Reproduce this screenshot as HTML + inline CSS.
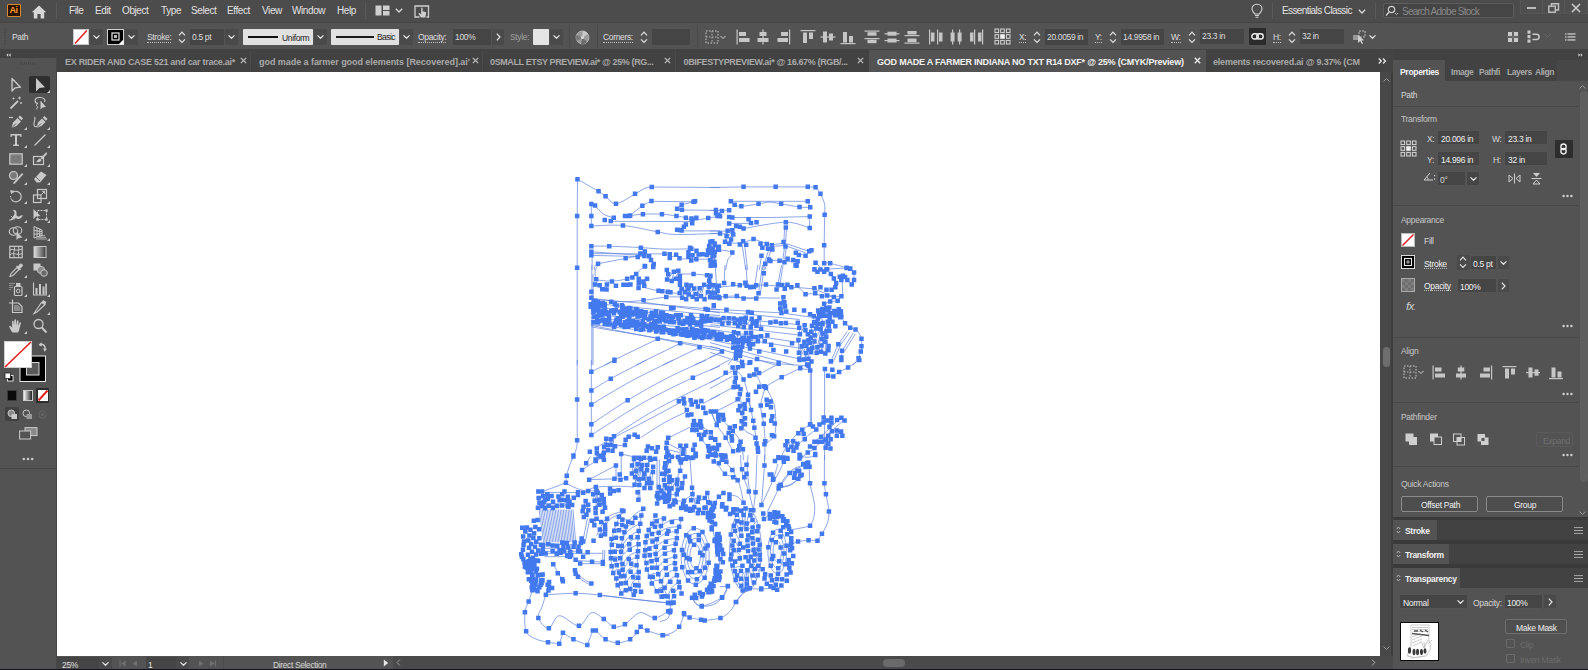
<!DOCTYPE html>
<html><head><meta charset="utf-8"><title>Illustrator</title>
<style>
*{box-sizing:border-box;margin:0;padding:0}
html,body{width:1588px;height:670px;overflow:hidden;background:#535353;font-family:"Liberation Sans",sans-serif;font-size:11px;color:#dcdcdc}
.a{position:absolute}
.t{position:absolute;white-space:nowrap;line-height:1}
#menubar{left:0;top:0;width:1588px;height:23px;background:#4c4c4c;border-bottom:1px solid #444}
#menubar .t{top:6px;font-size:10px;color:#e2e2e2;letter-spacing:-0.4px}
#ctrl{left:0;top:23px;width:1588px;height:27px;background:#535353;border-bottom:1px solid #434343}
#ctrl .t{top:10px;font-size:8.5px;color:#dedede;letter-spacing:-0.35px}
.dd{position:absolute;background:#4a4a4a;border-radius:1px}
.fld{position:absolute;background:#454545;border-radius:1px}
.lbl{border-bottom:1px dotted #bdbdbd;padding-bottom:0px}
.chev{position:absolute;width:7px;height:4px}
#tabbar{left:57px;top:50px;width:1336px;height:22px;background:#424242}
#tabbar .t{top:8px;font-size:9px;font-weight:bold;color:#a9a9a9;letter-spacing:-0.3px}
#canvas{left:57px;top:72px;width:1322.5px;height:584px;background:#ffffff}
#tools{left:0;top:50px;width:57px;height:620px;background:#535353}
#status{left:57px;top:656px;width:1336px;height:12px;background:#535353}
#right{left:1393px;top:50px;width:195px;height:620px;background:#535353}
#vscroll{left:1380px;top:72px;width:13px;height:584px;background:#484848;border-right:2px solid #3e3e3e}
</style></head><body>
<!-- MENU BAR -->
<div id="menubar" class="a">
 <div class="a" style="left:7px;top:4px;width:14px;height:13px;background:#2a1505;border:1px solid #d98a2b;border-radius:1px"></div>
 <div class="t" style="left:9.5px;top:6px;font-size:9px;font-weight:bold;color:#ff9a2a;letter-spacing:-0.4px">Ai</div>
 <svg class="a" style="left:31px;top:5px" width="16" height="14" viewBox="0 0 16 14"><path d="M8 0.5 L0.8 7.2 L2.8 7.2 L2.8 13.5 L6.4 13.5 L6.4 9 L9.6 9 L9.6 13.5 L13.2 13.5 L13.2 7.2 L15.2 7.2 Z" fill="#d6d6d6"/></svg>
 <div class="a" style="left:56px;top:3px;width:1px;height:16px;background:#5a5a5a"></div>
 <div class="t" style="left:69px">File</div>
 <div class="t" style="left:95px">Edit</div>
 <div class="t" style="left:122px">Object</div>
 <div class="t" style="left:161px">Type</div>
 <div class="t" style="left:191px">Select</div>
 <div class="t" style="left:227px">Effect</div>
 <div class="t" style="left:262px">View</div>
 <div class="t" style="left:292px">Window</div>
 <div class="t" style="left:337px">Help</div>
 <div class="a" style="left:365px;top:3px;width:1px;height:16px;background:#5a5a5a"></div>
 <!-- workspace switcher icon -->
 <svg class="a" style="left:375px;top:5px" width="16" height="12" viewBox="0 0 16 12"><rect x="0.5" y="0.5" width="6" height="10" fill="#cfcfcf"/><rect x="8" y="0.5" width="6.5" height="4.5" fill="#cfcfcf"/><rect x="8" y="6" width="6.5" height="4.5" fill="#cfcfcf"/></svg>
 <svg class="a" style="left:395px;top:8px" width="8" height="5" viewBox="0 0 8 5"><path d="M0.8 0.8 L4 4 L7.2 0.8" fill="none" stroke="#d8d8d8" stroke-width="1.3"/></svg>
 <svg class="a" style="left:414px;top:5px" width="16" height="14" viewBox="0 0 16 14"><path d="M5.5 12 L1 12 L1 1 L14.5 1 L14.5 12 L12.5 12" fill="none" stroke="#cfcfcf" stroke-width="1.3"/><path d="M7.2 3.2 C7.2 2.2 8.6 2.2 8.6 3.2 L8.6 6.2 L11.3 7 C12 7.2 12.3 7.8 12.1 8.6 L11.3 12.6 L7 12.6 L4.6 9 C4.2 8.3 5.2 7.6 5.8 8.3 L7.2 9.6 Z" fill="#cfcfcf"/></svg>
 <!-- right side -->
 <svg class="a" style="left:1250px;top:3px" width="14" height="17" viewBox="0 0 14 17"><path d="M7 1.2 C3.8 1.2 2 3.4 2 5.8 C2 8 3.6 9 4.6 11 L9.4 11 C10.4 9 12 8 12 5.8 C12 3.4 10.2 1.2 7 1.2 Z" fill="none" stroke="#d0d0d0" stroke-width="1.1"/><path d="M5 12.5 L9 12.5 M5.5 14.2 L8.5 14.2" stroke="#d0d0d0" stroke-width="1.1"/></svg>
 <div class="a" style="left:1272px;top:3px;width:1px;height:16px;background:#5a5a5a"></div>
 <div class="t" style="left:1282px;top:6px;font-size:10px;letter-spacing:-0.6px">Essentials Classic</div>
 <svg class="a" style="left:1358px;top:9px" width="8" height="5" viewBox="0 0 8 5"><path d="M0.8 0.8 L4 4 L7.2 0.8" fill="none" stroke="#d8d8d8" stroke-width="1.3"/></svg>
 <div class="a" style="left:1375px;top:3px;width:1px;height:16px;background:#5a5a5a"></div>
 <div class="a" style="left:1383px;top:3px;width:131px;height:15px;background:#454545;border:1px solid #5c5c5c;border-radius:2px"></div>
 <svg class="a" style="left:1385px;top:5px" width="14" height="12" viewBox="0 0 14 12"><circle cx="6.5" cy="4.5" r="3.2" fill="none" stroke="#cfcfcf" stroke-width="1.2"/><path d="M4.2 7 L1 10.5" stroke="#cfcfcf" stroke-width="1.4"/><path d="M10 8 L11.5 9.5 L13 8" fill="none" stroke="#cfcfcf" stroke-width="0.9"/></svg>
 <div class="t" style="left:1402px;top:7px;font-size:10px;letter-spacing:-0.76px;color:#8a8a8a">Search Adobe Stock</div>
 <div class="a" style="left:1520px;top:0;width:68px;height:14px;background:#4f4f4f;border:1px solid #565656;border-top:none"></div>
 <div class="a" style="left:1542px;top:0;width:1px;height:14px;background:#565656"></div><div class="a" style="left:1564px;top:0;width:1px;height:14px;background:#565656"></div>
 <div class="a" style="left:1527px;top:7px;width:9px;height:2.4px;background:#bcbcbc"></div>
 <svg class="a" style="left:1548px;top:3px" width="12" height="11" viewBox="0 0 12 11"><rect x="0.8" y="3.2" width="6.5" height="6" fill="none" stroke="#c4c4c4" stroke-width="1.4"/><path d="M3.5 3 L3.5 0.8 L10.5 0.8 L10.5 7 L7.5 7" fill="none" stroke="#c4c4c4" stroke-width="1.4"/></svg>
 <svg class="a" style="left:1571px;top:3px" width="10" height="10" viewBox="0 0 10 10"><path d="M1 1 L9 9 M9 1 L1 9" stroke="#c8c8c8" stroke-width="1.7"/></svg>
</div>
<!-- CONTROL BAR -->
<div id="ctrl" class="a">
 <div class="a" style="left:4px;top:5px;width:2px;height:17px;background-image:repeating-linear-gradient(#474747 0 1px,transparent 1px 2px)"></div>
 <div class="t" style="left:12px">Path</div>
 <!-- fill swatch -->
 <svg class="a" style="left:73px;top:6px" width="16" height="16" viewBox="0 0 16 16"><rect x="0.5" y="0.5" width="15" height="15" fill="#fff" stroke="#c8c8c8" stroke-width="1"/><path d="M2 14.5 L13.8 1.5" stroke="#e02020" stroke-width="1.5"/></svg>
 <div class="dd" style="left:90px;top:6px;width:13px;height:16px"></div>
 <svg class="chev" style="left:93px;top:12px" viewBox="0 0 7 4"><path d="M0.5 0.4 L3.5 3.3 L6.5 0.4" fill="none" stroke="#e6e6e6" stroke-width="1.2"/></svg>
 <!-- stroke swatch -->
 <svg class="a" style="left:107px;top:6px" width="17" height="16" viewBox="0 0 17 16"><rect x="0.5" y="0.5" width="16" height="15" fill="#000" stroke="#cfcfcf" stroke-width="1"/><rect x="5" y="4" width="7" height="7" fill="none" stroke="#e8e8e8" stroke-width="1.2"/><rect x="7" y="6" width="3" height="3" fill="#bdbdbd"/><path d="M11.5 15.5 L16.5 10.5 L16.5 15.5 Z" fill="#fff"/></svg>
 <div class="dd" style="left:125px;top:6px;width:13px;height:16px"></div>
 <svg class="chev" style="left:128px;top:12px" viewBox="0 0 7 4"><path d="M0.5 0.4 L3.5 3.3 L6.5 0.4" fill="none" stroke="#e6e6e6" stroke-width="1.2"/></svg>
 <div class="t lbl" style="left:147px">Stroke:</div>
 <svg class="a" style="left:178px;top:5px" width="8" height="18" viewBox="0 0 8 18"><path d="M1 7.3 L4 4.2 L7 7.3 M1 11.3 L4 14.4 L7 11.3" fill="none" stroke="#e0e0e0" stroke-width="1.2"/></svg>
 <div class="fld" style="left:190px;top:6px;width:34px;height:16px"></div>
 <div class="t" style="left:192px">0.5 pt</div>
 <div class="dd" style="left:225px;top:6px;width:13px;height:16px"></div>
 <svg class="chev" style="left:228px;top:12px" viewBox="0 0 7 4"><path d="M0.5 0.4 L3.5 3.3 L6.5 0.4" fill="none" stroke="#e6e6e6" stroke-width="1.2"/></svg>
 <!-- Uniform -->
 <div class="a" style="left:243px;top:6px;width:70px;height:16px;background:#e1e1e1;border-radius:1px"></div>
 <div class="a" style="left:248px;top:13px;width:30px;height:2px;background:#111"></div>
 <div class="t" style="left:282px;top:11px;color:#222">Uniform</div>
 <div class="dd" style="left:314px;top:6px;width:13px;height:16px"></div>
 <svg class="chev" style="left:317px;top:12px" viewBox="0 0 7 4"><path d="M0.5 0.4 L3.5 3.3 L6.5 0.4" fill="none" stroke="#e6e6e6" stroke-width="1.2"/></svg>
 <!-- Basic -->
 <div class="a" style="left:331px;top:6px;width:68px;height:16px;background:#e1e1e1;border-radius:1px"></div>
 <div class="a" style="left:336px;top:13px;width:38px;height:2px;background:#1c1c1c"></div>
 <div class="t" style="left:377px;top:10px;color:#222;letter-spacing:-0.55px">Basic</div>
 <div class="dd" style="left:400px;top:6px;width:13px;height:16px"></div>
 <svg class="chev" style="left:403px;top:12px" viewBox="0 0 7 4"><path d="M0.5 0.4 L3.5 3.3 L6.5 0.4" fill="none" stroke="#e6e6e6" stroke-width="1.2"/></svg>
 <div class="t lbl" style="left:418px">Opacity:</div>
 <div class="fld" style="left:453px;top:6px;width:38px;height:16px"></div>
 <div class="t" style="left:455px">100%</div>
 <div class="dd" style="left:492px;top:6px;width:12px;height:16px"></div>
 <svg class="a" style="left:496px;top:10px" width="5" height="8" viewBox="0 0 5 8"><path d="M0.8 0.7 L4 4 L0.8 7.3" fill="none" stroke="#e6e6e6" stroke-width="1.2"/></svg>
 <div class="t" style="left:510px;color:#a0a0a0">Style:</div>
 <div class="a" style="left:533px;top:6px;width:16px;height:16px;background:#e4e4e4;border-radius:1px"></div>
 <div class="dd" style="left:550px;top:6px;width:13px;height:16px"></div>
 <svg class="chev" style="left:553px;top:12px" viewBox="0 0 7 4"><path d="M0.5 0.4 L3.5 3.3 L6.5 0.4" fill="none" stroke="#e6e6e6" stroke-width="1.2"/></svg>
 <div class="a" style="left:569px;top:2px;width:1px;height:23px;background:#494949"></div>
 <!-- recolor globe -->
 <svg class="a" style="left:575px;top:7px" width="15" height="15" viewBox="0 0 15 15"><circle cx="7.5" cy="7.5" r="6.5" fill="#9a9a9a"/><circle cx="7.5" cy="7.5" r="6.5" fill="none" stroke="#bdbdbd" stroke-width="0.8"/><path d="M7.5 7.5 L7.5 1 A6.5 6.5 0 0 1 13 4 Z" fill="#c9c9c9"/><path d="M7.5 7.5 L2 11 A6.5 6.5 0 0 1 1.5 5 Z" fill="#777"/><path d="M7.5 7.5 L12 12 A6.5 6.5 0 0 1 6 14 Z" fill="#6b6b6b"/><circle cx="7.5" cy="7.5" r="1.6" fill="#d8d8d8"/></svg>
 <div class="a" style="left:597px;top:2px;width:1px;height:23px;background:#494949"></div>
 <div class="t lbl" style="left:603px">Corners:</div>
 <svg class="a" style="left:640px;top:5px" width="8" height="18" viewBox="0 0 8 18"><path d="M1 7.3 L4 4.2 L7 7.3 M1 11.3 L4 14.4 L7 11.3" fill="none" stroke="#e0e0e0" stroke-width="1.2"/></svg>
 <div class="fld" style="left:652px;top:6px;width:38px;height:16px"></div>
 <div class="a" style="left:697px;top:2px;width:1px;height:23px;background:#494949"></div>
 <!-- align-to grid icon -->
 <svg class="a" style="left:705px;top:7px" width="22" height="15" viewBox="0 0 22 15"><rect x="1" y="1" width="12" height="12" fill="none" stroke="#cfcfcf" stroke-width="1" stroke-dasharray="1.5 1.5"/><path d="M1 7 L13 7 M7 1 L7 13" stroke="#b5b5b5" stroke-width="1" stroke-dasharray="1.5 1.5"/><path d="M15.5 6 L18 8.5 L20.5 6" fill="none" stroke="#d0d0d0" stroke-width="1"/></svg>
 <!-- align icons group 1 -->
 <svg class="a" style="left:736px;top:6px" width="250" height="16" viewBox="0 0 250 16">
  <g fill="#c6c6c6" stroke="none">
   <!-- align left 0..13 -->
   <rect x="0.5" y="0.5" width="1.2" height="15"/><rect x="3" y="3" width="7" height="4"/><rect x="3" y="9" width="10.5" height="4"/>
   <!-- align hcenter 21..32 -->
   <rect x="26.4" y="0.5" width="1.2" height="15"/><rect x="23.5" y="3" width="7" height="4"/><rect x="21.5" y="9" width="11" height="4"/>
   <!-- align right 41..54 -->
   <rect x="53" y="0.5" width="1.2" height="15"/><rect x="45" y="3" width="7" height="4"/><rect x="41.5" y="9" width="10.5" height="4"/>
   <!-- align top 65..79 -->
   <rect x="64.5" y="1" width="15" height="1.2"/><rect x="67" y="3.5" width="4" height="10.5"/><rect x="73" y="3.5" width="4" height="6.5"/>
   <!-- align vcenter 85..99 -->
   <rect x="84.5" y="7.4" width="15" height="1.2"/><rect x="87" y="2.5" width="4" height="11"/><rect x="93" y="4.5" width="4" height="7"/>
   <!-- align bottom 105..119 -->
   <rect x="104.5" y="14" width="15" height="1.2"/><rect x="107" y="3" width="4" height="10.5"/><rect x="113" y="7" width="4" height="6.5"/>
   <!-- dist top 129..143 -->
   <rect x="128.5" y="1.5" width="15" height="1.2"/><rect x="131.5" y="3.2" width="9" height="3.5"/><rect x="128.5" y="9" width="15" height="1.2"/><rect x="131.5" y="10.7" width="9" height="3.5"/>
   <!-- dist vcenter 149..163 -->
   <rect x="148.5" y="4.2" width="15" height="1.2"/><rect x="151.5" y="2.7" width="9" height="4"/><rect x="148.5" y="11" width="15" height="1.2"/><rect x="151.5" y="9.5" width="9" height="4"/>
   <!-- dist bottom 169..183 -->
   <rect x="168.5" y="6" width="15" height="1.2"/><rect x="171.5" y="2" width="9" height="3.5"/><rect x="168.5" y="13.5" width="15" height="1.2"/><rect x="171.5" y="9.5" width="9" height="3.5"/>
   <!-- dist left 193..207 -->
   <rect x="193" y="0.5" width="1.2" height="15"/><rect x="195" y="3.5" width="3.5" height="9"/><rect x="201" y="0.5" width="1.2" height="15"/><rect x="203" y="3.5" width="3.5" height="9"/>
   <!-- dist hcenter 213..227 -->
   <rect x="216" y="0.5" width="1.2" height="15"/><rect x="214.6" y="3.5" width="4" height="9"/><rect x="223" y="0.5" width="1.2" height="15"/><rect x="221.6" y="3.5" width="4" height="9"/>
   <!-- dist right 233..247 -->
   <rect x="238" y="0.5" width="1.2" height="15"/><rect x="234" y="3.5" width="3.5" height="9"/><rect x="246" y="0.5" width="1.2" height="15"/><rect x="242" y="3.5" width="3.5" height="9"/>
  </g>
 </svg>
 <!-- reference point -->
 <svg class="a" style="left:994px;top:5px" width="17" height="17" viewBox="0 0 17 17"><g fill="none" stroke="#d6d6d6" stroke-width="1"><rect x="1" y="1" width="3.6" height="3.6"/><rect x="6.7" y="1" width="3.6" height="3.6"/><rect x="12.4" y="1" width="3.6" height="3.6"/><rect x="1" y="6.7" width="3.6" height="3.6"/><rect x="12.4" y="6.7" width="3.6" height="3.6"/><rect x="1" y="12.4" width="3.6" height="3.6"/><rect x="6.7" y="12.4" width="3.6" height="3.6"/><rect x="12.4" y="12.4" width="3.6" height="3.6"/></g><rect x="6.2" y="6.2" width="4.6" height="4.6" fill="#f0f0f0"/></svg>
 <div class="t lbl" style="left:1019px">X:</div>
 <svg class="a" style="left:1033px;top:5px" width="8" height="18" viewBox="0 0 8 18"><path d="M1 7.3 L4 4.2 L7 7.3 M1 11.3 L4 14.4 L7 11.3" fill="none" stroke="#e0e0e0" stroke-width="1.2"/></svg>
 <div class="fld" style="left:1045px;top:6px;width:43px;height:16px"></div>
 <div class="t" style="left:1047px">20.0059 in</div>
 <div class="t lbl" style="left:1095px">Y:</div>
 <svg class="a" style="left:1109px;top:5px" width="8" height="18" viewBox="0 0 8 18"><path d="M1 7.3 L4 4.2 L7 7.3 M1 11.3 L4 14.4 L7 11.3" fill="none" stroke="#e0e0e0" stroke-width="1.2"/></svg>
 <div class="fld" style="left:1121px;top:6px;width:43px;height:16px"></div>
 <div class="t" style="left:1123px">14.9958 in</div>
 <div class="t lbl" style="left:1171px">W:</div>
 <svg class="a" style="left:1188px;top:5px" width="8" height="18" viewBox="0 0 8 18"><path d="M1 7.3 L4 4.2 L7 7.3 M1 11.3 L4 14.4 L7 11.3" fill="none" stroke="#e0e0e0" stroke-width="1.2"/></svg>
 <div class="fld" style="left:1200px;top:6px;width:44px;height:15px"></div>
 <div class="t" style="left:1202px;top:9px">23.3 in</div>
 <!-- link button -->
 <div class="a" style="left:1249px;top:5px;width:17px;height:17px;background:#2b2b2b;border-radius:1px"></div>
 <svg class="a" style="left:1251px;top:10px" width="13" height="7" viewBox="0 0 13 7"><rect x="0.8" y="0.8" width="6.5" height="5.2" rx="2.6" fill="none" stroke="#f0f0f0" stroke-width="1.4"/><rect x="5.7" y="0.8" width="6.5" height="5.2" rx="2.6" fill="none" stroke="#f0f0f0" stroke-width="1.4"/></svg>
 <div class="t lbl" style="left:1273px">H:</div>
 <svg class="a" style="left:1288px;top:5px" width="8" height="18" viewBox="0 0 8 18"><path d="M1 7.3 L4 4.2 L7 7.3 M1 11.3 L4 14.4 L7 11.3" fill="none" stroke="#e0e0e0" stroke-width="1.2"/></svg>
 <div class="fld" style="left:1300px;top:6px;width:44px;height:15px"></div>
 <div class="t" style="left:1302px;top:9px">32 in</div>
 <!-- isolate / select icon -->
 <svg class="a" style="left:1352px;top:6px" width="15" height="16" viewBox="0 0 15 16"><rect x="1" y="6" width="6" height="5" fill="#9a9a9a"/><rect x="7" y="2" width="6" height="6" fill="none" stroke="#bdbdbd" stroke-width="1" stroke-dasharray="2 1"/><path d="M6 6 L6 14 L8.2 12 L9.8 15 L11 14.4 L9.6 11.6 L12 11.2 Z" fill="#d0d0d0"/></svg>
 <svg class="chev" style="left:1369px;top:12px" viewBox="0 0 7 4"><path d="M0.5 0.4 L3.5 3.3 L6.5 0.4" fill="none" stroke="#e6e6e6" stroke-width="1.2"/></svg>
 <!-- far right icons -->
 <svg class="a" style="left:1507px;top:8px" width="12" height="12" viewBox="0 0 12 12"><g fill="#c9c9c9"><rect x="1" y="1" width="4" height="4"/><rect x="7" y="1" width="4" height="4"/><rect x="1" y="7" width="4" height="4"/><rect x="7" y="7" width="4" height="4"/></g><path d="M6 0 L6 12 M0 6 L12 6" stroke="#8a8a8a" stroke-width="0.6"/></svg>
 <svg class="a" style="left:1527px;top:7px" width="14" height="14" viewBox="0 0 14 14"><rect x="0.5" y="0.5" width="3" height="3.2" fill="#c9c9c9"/><rect x="0.5" y="5" width="3" height="3.2" fill="#c9c9c9"/><rect x="0.5" y="9.5" width="3" height="3.2" fill="#c9c9c9"/><path d="M5.5 4.2 L9.5 4.2 A2.6 2.6 0 0 1 9.5 9.4 L5.5 9.4" fill="none" stroke="#c9c9c9" stroke-width="1.5"/></svg>
 <svg class="chev" style="left:1544px;top:11px" viewBox="0 0 7 4"><path d="M0.5 0.4 L3.5 3.3 L6.5 0.4" fill="none" stroke="#6c6c6c" stroke-width="1"/></svg>
 <svg class="a" style="left:1565px;top:10px" width="11" height="8" viewBox="0 0 11 8"><g fill="#c9c9c9"><rect x="0" y="0.3" width="1.5" height="1.3"/><rect x="2.5" y="0.3" width="8" height="1.3"/><rect x="0" y="3.3" width="1.5" height="1.3"/><rect x="2.5" y="3.3" width="8" height="1.3"/><rect x="0" y="6.3" width="1.5" height="1.3"/><rect x="2.5" y="6.3" width="8" height="1.3"/></g></svg>
</div>
<!-- LEFT DOCK HEADER + TAB BAR -->
<div id="tabbar" class="a">
 <div class="a" style="left:812px;top:0;width:337px;height:22px;background:#535353"></div>
 <div class="a" style="left:193px;top:1px;width:1px;height:20px;background:#4b4b4b"></div>
 <div class="a" style="left:425px;top:1px;width:1px;height:20px;background:#4b4b4b"></div>
 <div class="a" style="left:618px;top:1px;width:1px;height:20px;background:#4b4b4b"></div>
 <div class="a" style="left:1323px;top:0;width:13px;height:22px;background:#444"></div>
 <div class="t tb" id="tb1" style="letter-spacing:-0.29px;left:8px">EX RIDER AND CASE 521 and car trace.ai*</div>
 <div class="t tb" id="tb2" style="letter-spacing:-0.05px;left:202px">god made a farmer good elements [Recovered].ai'</div>
 <div class="t tb" id="tb3" style="letter-spacing:-0.38px;left:433px">0SMALL ETSY PREVIEW.ai* @ 25% (RG...</div>
 <div class="t tb" id="tb4" style="letter-spacing:-0.355px;left:626.5px">0BIFESTYPREVIEW.ai* @ 16.67% (RGB/...</div>
 <div class="t tb" id="tb5" style="letter-spacing:-0.211px;left:820px;color:#f2f2f2">GOD MADE A FARMER INDIANA NO TXT R14 DXF* @ 25% (CMYK/Preview)</div>
 <div class="t tb" id="tb6" style="letter-spacing:-0.2px;left:1156px;width:147px;overflow:hidden">elements recovered.ai @ 9.37% (CMYK</div>
 <svg class="a x" style="left:183px;top:7px" width="7" height="7" viewBox="0 0 7 7"><path d="M0.8 0.8 L6.2 6.2 M6.2 0.8 L0.8 6.2" stroke="#c0c0c0" stroke-width="1.2"/></svg>
 <svg class="a x" style="left:415px;top:7px" width="7" height="7" viewBox="0 0 7 7"><path d="M0.8 0.8 L6.2 6.2 M6.2 0.8 L0.8 6.2" stroke="#c0c0c0" stroke-width="1.2"/></svg>
 <svg class="a x" style="left:607px;top:7px" width="7" height="7" viewBox="0 0 7 7"><path d="M0.8 0.8 L6.2 6.2 M6.2 0.8 L0.8 6.2" stroke="#c0c0c0" stroke-width="1.2"/></svg>
 <svg class="a x" style="left:800px;top:7px" width="7" height="7" viewBox="0 0 7 7"><path d="M0.8 0.8 L6.2 6.2 M6.2 0.8 L0.8 6.2" stroke="#c0c0c0" stroke-width="1.2"/></svg>
 <svg class="a x" style="left:1136.5px;top:7px" width="7" height="7" viewBox="0 0 7 7"><path d="M0.8 0.8 L6.2 6.2 M6.2 0.8 L0.8 6.2" stroke="#f0f0f0" stroke-width="1.3"/></svg>
 <svg class="a" style="left:1321px;top:8px" width="9" height="6" viewBox="0 0 9 6"><path d="M0.8 0.6 L3.2 3 L0.8 5.4 M5 0.6 L7.4 3 L5 5.4" fill="none" stroke="#e0e0e0" stroke-width="1.4"/></svg>
</div>
<!-- CANVAS -->
<div id="canvas" class="a"></div>
<!-- vertical scrollbar -->
<div id="vscroll" class="a">
 <svg class="a" style="left:3px;top:6px" width="7" height="4" viewBox="0 0 7 4"><path d="M0.5 3.5 L3.5 0.6 L6.5 3.5" fill="none" stroke="#9a9a9a" stroke-width="1"/></svg>
 <div class="a" style="left:3px;top:275px;width:7px;height:20px;background:#6e6e6e;border-radius:3.5px"></div>
 <svg class="a" style="left:3px;top:574px" width="7" height="4" viewBox="0 0 7 4"><path d="M0.5 0.5 L3.5 3.4 L6.5 0.5" fill="none" stroke="#9a9a9a" stroke-width="1"/></svg>
</div>
<!-- STATUS BAR -->
<div id="status" class="a" style="height:13px">
 <div class="a" style="left:336px;top:0;width:1000px;height:13px;background:#4a4a4a"></div>
 <div class="a" style="left:0;top:1px;width:42px;height:12px;background:#454545"></div>
 <div class="a" style="left:42px;top:1px;width:13px;height:12px;background:#4a4a4a"></div>
 <div class="a" style="left:89px;top:1px;width:30px;height:12px;background:#454545"></div>
 <div class="a" style="left:119px;top:1px;width:13px;height:12px;background:#4a4a4a"></div>
 <div class="t" style="left:5px;top:5px;font-size:8.5px;letter-spacing:-0.35px;color:#e0e0e0">25%</div>
 <svg class="chev" style="left:45px;top:6px" viewBox="0 0 7 4"><path d="M0.5 0.4 L3.5 3.3 L6.5 0.4" fill="none" stroke="#e6e6e6" stroke-width="1.2"/></svg>
 <svg class="a" style="left:62px;top:4px" width="24" height="7" viewBox="0 0 24 7"><g fill="#707070"><rect x="0.5" y="0.5" width="1.2" height="6"/><path d="M6.5 0.5 L2.2 3.5 L6.5 6.5 Z"/><path d="M18 0.5 L13.7 3.5 L18 6.5 Z"/></g></svg>
 <div class="t" style="left:91px;top:5px;font-size:8.5px;letter-spacing:-0.35px;color:#e0e0e0">1</div>
 <svg class="chev" style="left:123px;top:6px" viewBox="0 0 7 4"><path d="M0.5 0.4 L3.5 3.3 L6.5 0.4" fill="none" stroke="#e6e6e6" stroke-width="1.2"/></svg>
 <svg class="a" style="left:141px;top:4px" width="22" height="7" viewBox="0 0 22 7"><g fill="#707070"><path d="M1 0.5 L5.3 3.5 L1 6.5 Z"/><path d="M12 0.5 L16.3 3.5 L12 6.5 Z"/><rect x="16.8" y="0.5" width="1.2" height="6"/></g></svg>
 <div class="a" style="left:166px;top:0;width:1px;height:13px;background:#4a4a4a"></div>
 <div class="t" style="left:216px;top:5px;font-size:8.5px;letter-spacing:-0.38px;color:#d8d8d8">Direct Selection</div>
 <svg class="a" style="left:326px;top:3px" width="6" height="8" viewBox="0 0 6 8"><path d="M0.8 0.5 L5.2 4 L0.8 7.5 Z" fill="#e6e6e6"/></svg>
 <svg class="a" style="left:339px;top:3px" width="5" height="7" viewBox="0 0 5 7"><path d="M3.8 0.6 L1 3.5 L3.8 6.4" fill="none" stroke="#9a9a9a" stroke-width="1"/></svg>
 <div class="a" style="left:826px;top:3px;width:22px;height:8px;background:#6a6a6a;border-radius:4px"></div>
 <svg class="a" style="left:1314px;top:3px" width="5" height="7" viewBox="0 0 5 7"><path d="M1 0.6 L3.8 3.5 L1 6.4" fill="none" stroke="#b0b0b0" stroke-width="1"/></svg>
</div>
<!-- TOOLS PANEL -->
<div id="tools" class="a">
<div class="a" style="left:0;top:0;width:57px;height:8px;background:#424242"></div>
<svg class="a" style="left:5.5px;top:2.5px" width="5" height="4" viewBox="0 0 5 4"><path d="M2.2 0.3 L0.5 2 L2.2 3.7 Z M4.6 0.3 L2.9 2 L4.6 3.7 Z" fill="#dcdcdc"/></svg>
<div class="a" style="left:56px;top:8px;width:1px;height:612px;background:#474747"></div>
<div class="a" style="left:20px;top:12px;width:15px;height:3px;background-image:repeating-linear-gradient(90deg,#474747 0 1px,transparent 1px 2px)"></div>
<div class="a" style="left:29px;top:26px;width:21px;height:17px;background:#2f2f2f;border-radius:2px"></div>
<svg class="a" style="left:8.3px;top:26.7px" width="16" height="16" viewBox="0 0 16 16"><path d="M4 1.5 L4 14 L7.2 10.8 L12.5 10.2 Z" fill="none" stroke="#c9c9c9" stroke-width="1.3" stroke-linejoin="round"/></svg>
<svg class="a" style="left:31.5px;top:26.7px" width="16" height="16" viewBox="0 0 16 16"><path d="M4 1 L4 14.5 L7.5 11 L13 10.3 Z" fill="#c9c9c9"/></svg>
<svg class="a" style="left:47.0px;top:39.7px" width="3" height="3" viewBox="0 0 3 3"><path d="M3 0 L3 3 L0 3 Z" fill="#c9c9c9"/></svg>
<svg class="a" style="left:8.3px;top:45.2px" width="16" height="16" viewBox="0 0 16 16"><path d="M2.5 13.5 L10 6" stroke="#c9c9c9" stroke-width="1.8"/><path d="M11.5 1.5 L11.5 4.5 M10 3 L13 3 M5.5 2.5 L5.5 4.5 M4.5 3.5 L6.5 3.5 M13 7 L13 9 M12 8 L14 8" stroke="#c9c9c9" stroke-width="0.9"/></svg>
<svg class="a" style="left:31.5px;top:45.2px" width="16" height="16" viewBox="0 0 16 16"><path d="M6 8.5 C2 8 2 3 7 2.5 C12 2 14 5 12.5 7" fill="none" stroke="#c9c9c9" stroke-width="1.1"/><path d="M6 8.5 C4 9 4 11.5 6 12 C4.8 13 4.5 13.5 5 14.5" fill="none" stroke="#c9c9c9" stroke-width="1"/><path d="M8.5 5.5 L8.5 14.5 L10.6 12.4 L14 12 Z" fill="#c9c9c9"/></svg>
<svg class="a" style="left:8.3px;top:63.8px" width="16" height="16" viewBox="0 0 16 16"><path d="M1 3.5 L5 3.5" stroke="#c9c9c9" stroke-width="1.2"/><path d="M3.5 14 L5 8.5 L9.5 4 L13 7.5 L8.5 12 Z" fill="#c9c9c9"/><path d="M10.3 3.2 L12 1.5 L15 4.5 L13.4 6.2 Z" fill="#c9c9c9"/><path d="M3.5 14 L8 9.5" stroke="#535353" stroke-width="0.9"/></svg>
<svg class="a" style="left:23.8px;top:76.8px" width="3" height="3" viewBox="0 0 3 3"><path d="M3 0 L3 3 L0 3 Z" fill="#c9c9c9"/></svg>
<svg class="a" style="left:31.5px;top:63.8px" width="16" height="16" viewBox="0 0 16 16"><path d="M2.5 3 C4.5 5 1 8 2 11 C2.8 13.5 4.5 13 5 12" fill="none" stroke="#c9c9c9" stroke-width="1.1"/><path d="M4.5 14 L6 8.5 L10 4.5 L13.5 8 L9.5 12 Z" fill="#c9c9c9"/><path d="M10.8 3.7 L12.5 2 L15.5 5 L13.9 6.7 Z" fill="#c9c9c9"/><path d="M4.5 14 L9 9.5" stroke="#535353" stroke-width="0.9"/></svg>
<svg class="a" style="left:47.0px;top:76.8px" width="3" height="3" viewBox="0 0 3 3"><path d="M3 0 L3 3 L0 3 Z" fill="#c9c9c9"/></svg>
<svg class="a" style="left:8.3px;top:82.4px" width="16" height="16" viewBox="0 0 16 16"><path d="M2.5 2 L13.5 2 L13.5 5 L12.3 5 L12.3 3.6 L9 3.6 L9 12.6 L10.8 12.6 L10.8 14 L5.2 14 L5.2 12.6 L7 12.6 L7 3.6 L3.7 3.6 L3.7 5 L2.5 5 Z" fill="#c9c9c9"/></svg>
<svg class="a" style="left:23.8px;top:95.4px" width="3" height="3" viewBox="0 0 3 3"><path d="M3 0 L3 3 L0 3 Z" fill="#c9c9c9"/></svg>
<svg class="a" style="left:31.5px;top:82.4px" width="16" height="16" viewBox="0 0 16 16"><path d="M2.5 13.5 L13.5 2.5" stroke="#c9c9c9" stroke-width="1.3"/></svg>
<svg class="a" style="left:47.0px;top:95.4px" width="3" height="3" viewBox="0 0 3 3"><path d="M3 0 L3 3 L0 3 Z" fill="#c9c9c9"/></svg>
<svg class="a" style="left:8.3px;top:100.9px" width="16" height="16" viewBox="0 0 16 16"><rect x="1.8" y="2.8" width="12.4" height="10.4" fill="#7a7a7a" stroke="#c9c9c9" stroke-width="1.2"/></svg>
<svg class="a" style="left:23.8px;top:113.9px" width="3" height="3" viewBox="0 0 3 3"><path d="M3 0 L3 3 L0 3 Z" fill="#c9c9c9"/></svg>
<svg class="a" style="left:31.5px;top:100.9px" width="16" height="16" viewBox="0 0 16 16"><rect x="1.5" y="5.5" width="10" height="8" fill="none" stroke="#c9c9c9" stroke-width="1.2"/><path d="M14.5 1 L8.5 7 L10 8.5 L15 3 Z" fill="#c9c9c9"/><path d="M8 7.5 C6 8 5.5 10 4 10.8 C6 11.8 8.8 11 9.6 9 Z" fill="#c9c9c9"/></svg>
<svg class="a" style="left:47.0px;top:113.9px" width="3" height="3" viewBox="0 0 3 3"><path d="M3 0 L3 3 L0 3 Z" fill="#c9c9c9"/></svg>
<svg class="a" style="left:8.3px;top:119.4px" width="16" height="16" viewBox="0 0 16 16"><circle cx="5.5" cy="6.5" r="4" fill="#7a7a7a" stroke="#c9c9c9" stroke-width="1.2"/><path d="M5.5 13.5 L14 4 L15.3 5.2 L7 14.5 L5 15 Z" fill="#c9c9c9"/></svg>
<svg class="a" style="left:23.8px;top:132.4px" width="3" height="3" viewBox="0 0 3 3"><path d="M3 0 L3 3 L0 3 Z" fill="#c9c9c9"/></svg>
<svg class="a" style="left:31.5px;top:119.4px" width="16" height="16" viewBox="0 0 16 16"><path d="M2 10 L9 2.5 L14.5 6 L8 13.5 L4.5 13.5 Z" fill="#c9c9c9"/><path d="M4 8 L8 12" stroke="#535353" stroke-width="0.8"/></svg>
<svg class="a" style="left:47.0px;top:132.4px" width="3" height="3" viewBox="0 0 3 3"><path d="M3 0 L3 3 L0 3 Z" fill="#c9c9c9"/></svg>
<svg class="a" style="left:8.3px;top:138.0px" width="16" height="16" viewBox="0 0 16 16"><path d="M4.5 4.5 A5.3 5.3 0 1 1 3.5 11.5" fill="none" stroke="#c9c9c9" stroke-width="1.2"/><path d="M3.5 11.5 A5.3 5.3 0 0 1 2.8 7" fill="none" stroke="#c9c9c9" stroke-width="1.1" stroke-dasharray="1.2 1.2"/><path d="M2 2.2 L6.3 2.8 L3.4 6.2 Z" fill="#c9c9c9"/></svg>
<svg class="a" style="left:23.8px;top:151.0px" width="3" height="3" viewBox="0 0 3 3"><path d="M3 0 L3 3 L0 3 Z" fill="#c9c9c9"/></svg>
<svg class="a" style="left:31.5px;top:138.0px" width="16" height="16" viewBox="0 0 16 16"><rect x="1.5" y="7" width="7.5" height="7.5" fill="none" stroke="#c9c9c9" stroke-width="1.2"/><rect x="5.5" y="1.5" width="9" height="9" fill="none" stroke="#c9c9c9" stroke-width="1.2"/><path d="M9 7 L12.5 3.5 M10 3.3 L12.7 3.3 L12.7 6" fill="none" stroke="#c9c9c9" stroke-width="1"/></svg>
<svg class="a" style="left:47.0px;top:151.0px" width="3" height="3" viewBox="0 0 3 3"><path d="M3 0 L3 3 L0 3 Z" fill="#c9c9c9"/></svg>
<svg class="a" style="left:8.3px;top:156.6px" width="16" height="16" viewBox="0 0 16 16"><path d="M1.5 12.5 C4 12.5 4.5 10 6 8 C7.5 6 6 4 4.5 3.5 C7 2 9 4 8.5 6.5 C8 9 10 10.5 12 9 C13 8 14 8 14.8 8.5 C14 11 11 13 8.5 11.5 C6.5 10.5 5 14 1.5 13.8 Z" fill="#c9c9c9"/><path d="M3 9 L6.5 12.5" stroke="#c9c9c9" stroke-width="0.9"/></svg>
<svg class="a" style="left:23.8px;top:169.6px" width="3" height="3" viewBox="0 0 3 3"><path d="M3 0 L3 3 L0 3 Z" fill="#c9c9c9"/></svg>
<svg class="a" style="left:31.5px;top:156.6px" width="16" height="16" viewBox="0 0 16 16"><rect x="5.5" y="3.5" width="9" height="9" fill="none" stroke="#c9c9c9" stroke-width="1" stroke-dasharray="2 1"/><path d="M1.5 2 L1.5 12 L4 9.6 L8.5 9 Z" fill="#c9c9c9"/><rect x="13.3" y="2.3" width="2.4" height="2.4" fill="#c9c9c9"/><rect x="13.3" y="11.3" width="2.4" height="2.4" fill="#c9c9c9"/><rect x="4.3" y="11.3" width="2.4" height="2.4" fill="#c9c9c9"/></svg>
<svg class="a" style="left:47.0px;top:169.6px" width="3" height="3" viewBox="0 0 3 3"><path d="M3 0 L3 3 L0 3 Z" fill="#c9c9c9"/></svg>
<svg class="a" style="left:8.3px;top:175.1px" width="16" height="16" viewBox="0 0 16 16"><ellipse cx="5.5" cy="6.5" rx="4.3" ry="3.8" fill="none" stroke="#c9c9c9" stroke-width="1.1"/><ellipse cx="9.5" cy="5.5" rx="4.3" ry="3.8" fill="none" stroke="#c9c9c9" stroke-width="1.1"/><path d="M8.5 7 L8.5 15 L10.7 13 L14.5 12.5 Z" fill="#c9c9c9"/></svg>
<svg class="a" style="left:23.8px;top:188.1px" width="3" height="3" viewBox="0 0 3 3"><path d="M3 0 L3 3 L0 3 Z" fill="#c9c9c9"/></svg>
<svg class="a" style="left:31.5px;top:175.1px" width="16" height="16" viewBox="0 0 16 16"><path d="M2 1.5 L2 13 L10 10.5 L10 5 Z M2 5.3 L10 6.8 M2 9.2 L10 8.7 M5 2.8 L5 12 M7.7 4 L7.7 11.2" fill="none" stroke="#c9c9c9" stroke-width="1"/><path d="M4 14 L15 14 M6 12.3 L14 12.3 M8 10.7 L13 10.7" stroke="#c9c9c9" stroke-width="0.8"/></svg>
<svg class="a" style="left:47.0px;top:188.1px" width="3" height="3" viewBox="0 0 3 3"><path d="M3 0 L3 3 L0 3 Z" fill="#c9c9c9"/></svg>
<svg class="a" style="left:8.3px;top:193.7px" width="16" height="16" viewBox="0 0 16 16"><rect x="1.8" y="2.3" width="12.4" height="11.4" fill="none" stroke="#c9c9c9" stroke-width="1.2"/><path d="M2 6 C5 4 7 8 14 5 M2 10.5 C6 8 9 12 14 9.5 M6 2.5 C8 6 4 9 6.5 13.5 M10.5 2.5 C12 6 9 9 11 13.5" fill="none" stroke="#c9c9c9" stroke-width="1"/></svg>
<svg class="a" style="left:31.5px;top:193.7px" width="16" height="16" viewBox="0 0 16 16"><defs><linearGradient id="tg1"><stop offset="0" stop-color="#e0e0e0"/><stop offset="1" stop-color="#3a3a3a"/></linearGradient></defs><rect x="2" y="2.5" width="12" height="11" fill="url(#tg1)" stroke="#c9c9c9" stroke-width="1"/></svg>
<svg class="a" style="left:8.3px;top:212.2px" width="16" height="16" viewBox="0 0 16 16"><path d="M2 14.5 L3 11.5 L9 5.5 L11 7.5 L5 13.5 Z" fill="none" stroke="#c9c9c9" stroke-width="1.1"/><path d="M8.5 4 L12.5 8 M10 5 L12 2.5 C13 1.3 15 3 14 4.2 L11.6 6.5" fill="#c9c9c9" stroke="#c9c9c9" stroke-width="1.2"/></svg>
<svg class="a" style="left:23.8px;top:225.2px" width="3" height="3" viewBox="0 0 3 3"><path d="M3 0 L3 3 L0 3 Z" fill="#c9c9c9"/></svg>
<svg class="a" style="left:31.5px;top:212.2px" width="16" height="16" viewBox="0 0 16 16"><rect x="1.5" y="1.5" width="7" height="7" fill="#c9c9c9"/><circle cx="9" cy="8" r="3.6" fill="#8a8a8a" stroke="#c9c9c9" stroke-width="1"/><circle cx="12" cy="11" r="3.3" fill="#6a6a6a" stroke="#c9c9c9" stroke-width="1"/></svg>
<svg class="a" style="left:8.3px;top:230.8px" width="16" height="16" viewBox="0 0 16 16"><rect x="6.5" y="5.5" width="7.5" height="9" rx="1" fill="none" stroke="#c9c9c9" stroke-width="1.2"/><rect x="8" y="2" width="4.5" height="3" fill="#c9c9c9"/><circle cx="10.2" cy="10" r="1.8" fill="none" stroke="#c9c9c9" stroke-width="1"/><path d="M1.5 2.5 L2.5 2.5 M3.5 2.5 L4.5 2.5 M5.5 2.5 L6.5 2.5 M1.5 4.5 L2.5 4.5 M3.5 4.5 L4.5 4.5 M1.5 6.5 L2.5 6.5 M3.5 6.5 L4.5 6.5 M1.5 8.5 L2.5 8.5" stroke="#c9c9c9" stroke-width="1"/></svg>
<svg class="a" style="left:23.8px;top:243.8px" width="3" height="3" viewBox="0 0 3 3"><path d="M3 0 L3 3 L0 3 Z" fill="#c9c9c9"/></svg>
<svg class="a" style="left:31.5px;top:230.8px" width="16" height="16" viewBox="0 0 16 16"><path d="M1.5 1.5 L1.5 14 L15 14" fill="none" stroke="#c9c9c9" stroke-width="1.1"/><rect x="3.5" y="7" width="2" height="6.5" fill="#c9c9c9"/><rect x="7" y="3" width="2" height="10.5" fill="#c9c9c9"/><rect x="10.5" y="5.5" width="2" height="8" fill="#c9c9c9"/><rect x="13.3" y="2.5" width="1.6" height="11" fill="#c9c9c9"/></svg>
<svg class="a" style="left:47.0px;top:243.8px" width="3" height="3" viewBox="0 0 3 3"><path d="M3 0 L3 3 L0 3 Z" fill="#c9c9c9"/></svg>
<svg class="a" style="left:8.3px;top:249.3px" width="16" height="16" viewBox="0 0 16 16"><path d="M4.5 0.5 L4.5 13.5 L14 13.5 L14 7.5 L10.5 4 L1 4" fill="none" stroke="#c9c9c9" stroke-width="1.2"/><path d="M6 6 L10 6 L12.5 8.5 L12.5 12 L6 12 Z" fill="#8a8a8a"/></svg>
<svg class="a" style="left:31.5px;top:249.3px" width="16" height="16" viewBox="0 0 16 16"><path d="M2 14.5 L9.5 3.5 L13 5.5 L5 13 Z" fill="none" stroke="#c9c9c9" stroke-width="1.1"/><path d="M9.5 3.5 L11 1 L14.5 3 L13 5.5 Z" fill="#c9c9c9"/></svg>
<svg class="a" style="left:47.0px;top:262.3px" width="3" height="3" viewBox="0 0 3 3"><path d="M3 0 L3 3 L0 3 Z" fill="#c9c9c9"/></svg>
<svg class="a" style="left:8.3px;top:267.9px" width="16" height="16" viewBox="0 0 16 16"><path d="M4.5 14.5 C3 12.5 1.5 10 1.2 8.5 C1.2 7.5 2.4 7.4 3 8.3 L4.2 10 L4 3.5 C4 2.4 5.5 2.4 5.6 3.5 L6 7.5 L6.4 2 C6.5 0.9 8 0.9 8 2 L8.2 7.5 L9 2.8 C9.2 1.8 10.6 2 10.5 3 L10.2 8 L11.5 4.8 C11.9 3.9 13.2 4.3 12.9 5.3 L11.5 10.5 C11.3 12.5 10.5 13.5 10 14.5 Z" fill="#c9c9c9"/></svg>
<svg class="a" style="left:23.8px;top:280.9px" width="3" height="3" viewBox="0 0 3 3"><path d="M3 0 L3 3 L0 3 Z" fill="#c9c9c9"/></svg>
<svg class="a" style="left:31.5px;top:267.9px" width="16" height="16" viewBox="0 0 16 16"><circle cx="6.5" cy="6" r="4.5" fill="none" stroke="#c9c9c9" stroke-width="1.3"/><path d="M9.8 9.5 L14.5 14.5" stroke="#c9c9c9" stroke-width="1.9"/></svg>
<svg class="a" style="left:3px;top:288px" width="48" height="48" viewBox="0 0 48 48">
 <rect x="17" y="18" width="25.5" height="25.5" fill="#000" stroke="#e8e8e8" stroke-width="1"/>
 <rect x="23.5" y="24.5" width="12.5" height="12.5" fill="#5a5a5a" stroke="#d8d8d8" stroke-width="1"/>
 <rect x="1.5" y="3.5" width="27" height="26" fill="#fff" stroke="#d0d0d0" stroke-width="1"/>
 <path d="M2 29 L28 4" stroke="#e21e1e" stroke-width="1.6"/>
 <path d="M37 6.5 C40 5.5 42.5 7.5 42 11" fill="none" stroke="#c9c9c9" stroke-width="1.5"/><path d="M35.5 7 L38.5 4.3 L38.8 8.5 Z M40 10.5 L44 10.8 L41.8 13.8 Z" fill="#c9c9c9"/>
 <rect x="4.5" y="37.5" width="5.5" height="5.5" fill="#000" stroke="#e0e0e0" stroke-width="1"/><rect x="2" y="35" width="5.5" height="5.5" fill="#fff" stroke="#222" stroke-width="0.8"/>
</svg>
<div class="a" style="left:7px;top:340px;width:10px;height:11px;background:#0a0a0a;border:1px solid #3a3a3a"></div>
<div class="a" style="left:23px;top:340px;width:10px;height:11px;background:linear-gradient(90deg,#f4f4f4,#222);border:1px solid #c9c9c9"></div>
<div class="a" style="left:36px;top:338px;width:13px;height:15px;background:#2c2c2c;border-radius:1px"></div>
<svg class="a" style="left:38px;top:340px" width="10" height="11" viewBox="0 0 10 11"><rect x="0" y="0" width="10" height="11" fill="#fff"/><path d="M0.5 10.5 L9.5 0.5" stroke="#e21e1e" stroke-width="2"/></svg>
<div class="a" style="left:5px;top:357px;width:14px;height:14px;background:#404040;border-radius:1px"></div>
<svg class="a" style="left:7px;top:359px" width="11" height="11" viewBox="0 0 11 11"><circle cx="4.3" cy="4.3" r="3.3" fill="#8a8a8a" stroke="#c9c9c9" stroke-width="1"/><rect x="4.5" y="5" width="5.5" height="5" fill="#c9c9c9"/></svg>
<svg class="a" style="left:22px;top:359px" width="11" height="11" viewBox="0 0 11 11"><circle cx="4.3" cy="4.3" r="3.3" fill="none" stroke="#c9c9c9" stroke-width="1"/><rect x="4.5" y="5" width="5.5" height="5" fill="#9a9a9a"/></svg>
<svg class="a" style="left:37px;top:359px" width="11" height="11" viewBox="0 0 11 11"><circle cx="5.5" cy="5.5" r="3.6" fill="none" stroke="#666" stroke-width="1"/><circle cx="5.5" cy="5.5" r="1.5" fill="#666"/></svg>
<svg class="a" style="left:19px;top:377px" width="19" height="13" viewBox="0 0 19 13"><rect x="6" y="0.6" width="12" height="8" fill="#8a8a8a" stroke="#c9c9c9" stroke-width="1"/><rect x="0.6" y="4" width="11" height="8" fill="#535353" stroke="#c9c9c9" stroke-width="1"/></svg>
<svg class="a" style="left:22px;top:407px" width="12" height="4" viewBox="0 0 12 4"><circle cx="1.8" cy="2" r="1.3" fill="#c9c9c9"/><circle cx="6" cy="2" r="1.3" fill="#c9c9c9"/><circle cx="10.2" cy="2" r="1.3" fill="#c9c9c9"/></svg>
<div class="a" style="left:0;top:418px;width:57px;height:1px;background:#434343"></div>
</div>
<!-- RIGHT PANEL -->
<div id="right" class="a">
<style>
#right .t{font-size:8.5px;color:#d6d6d6;letter-spacing:-0.3px;margin-top:0.7px}
#right .h{color:#c6c6c6}
#right .f{position:absolute;background:#454545;border:1px solid #555;border-radius:1px;height:15px}
#right .hr{position:absolute;left:0;width:185px;height:1px;background:#474747}
#right .u{border-bottom:1px dotted #bdbdbd}
</style>
 <div class="a" style="left:0;top:0;width:195px;height:10px;background:#424242"></div>
 <svg class="a" style="left:184.5px;top:2.5px" width="5" height="4" viewBox="0 0 5 4"><path d="M0.4 0.3 L2.1 2 L0.4 3.7 Z M2.8 0.3 L4.5 2 L2.8 3.7 Z" fill="#dcdcdc"/></svg>
 <!-- tab strip -->
 <div class="a" style="left:0;top:10px;width:195px;height:21px;background:#474747"></div>
 <div class="a" style="left:52px;top:10px;width:112px;height:21px;background:#424242"></div>
 <div class="a" style="left:0;top:10px;width:52px;height:21px;background:#535353"></div>
 <div class="t" style="left:7px;top:17px;font-weight:bold;color:#f4f4f4;font-size:8.5px;letter-spacing:-0.3px">Properties</div>
 <div class="t" style="left:58px;top:17px;font-weight:bold;color:#a8a8a8;letter-spacing:-0.45px">Image</div>
 <div class="t" style="left:86px;top:17px;font-weight:bold;color:#a8a8a8;letter-spacing:-0.45px">Pathfi</div>
 <div class="t" style="left:114px;top:17px;font-weight:bold;color:#a8a8a8;letter-spacing:-0.45px">Layers</div>
 <div class="t" style="left:142px;top:17px;font-weight:bold;color:#a8a8a8;letter-spacing:-0.45px">Align</div>
 <!-- Path -->
 <div class="t" style="left:8px;top:40px">Path</div>
 <div class="hr" style="top:56px"></div>
 <!-- Transform -->
 <div class="t h" style="left:8px;top:64px">Transform</div>
 <svg class="a" style="left:7px;top:90px" width="17" height="17" viewBox="0 0 17 17"><g fill="none" stroke="#d6d6d6" stroke-width="1"><rect x="1" y="1" width="3.6" height="3.6"/><rect x="6.7" y="1" width="3.6" height="3.6"/><rect x="12.4" y="1" width="3.6" height="3.6"/><rect x="1" y="6.7" width="3.6" height="3.6"/><rect x="12.4" y="6.7" width="3.6" height="3.6"/><rect x="1" y="12.4" width="3.6" height="3.6"/><rect x="6.7" y="12.4" width="3.6" height="3.6"/><rect x="12.4" y="12.4" width="3.6" height="3.6"/></g><rect x="6.2" y="6.2" width="4.6" height="4.6" fill="#f0f0f0"/></svg>
 <div class="t" style="left:34px;top:84px">X:</div>
 <div class="f" style="left:44px;top:80px;width:43px"></div><div class="t" style="left:48px;top:84px;color:#f0f0f0">20.006 in</div>
 <div class="t" style="left:99px;top:84px">W:</div>
 <div class="f" style="left:111px;top:80px;width:44px"></div><div class="t" style="left:115px;top:84px;color:#f0f0f0">23.3 in</div>
 <div class="t" style="left:34px;top:105px">Y:</div>
 <div class="f" style="left:44px;top:101px;width:43px"></div><div class="t" style="left:48px;top:105px;color:#f0f0f0">14.996 in</div>
 <div class="t" style="left:100px;top:105px">H:</div>
 <div class="f" style="left:111px;top:101px;width:44px"></div><div class="t" style="left:115px;top:105px;color:#f0f0f0">32 in</div>
 <div class="a" style="left:161.5px;top:90px;width:18px;height:17.5px;background:#2e2e2e;border-radius:1px"></div>
 <svg class="a" style="left:167px;top:92.5px" width="7" height="12" viewBox="0 0 8 13"><rect x="1" y="0.8" width="6" height="6.5" rx="3" fill="none" stroke="#f2f2f2" stroke-width="1.5"/><rect x="1" y="5.7" width="6" height="6.5" rx="3" fill="none" stroke="#f2f2f2" stroke-width="1.5"/></svg>
 <svg class="a" style="left:30px;top:122px" width="13" height="9" viewBox="0 0 13 9"><path d="M1 8 L7 1 M1 8 L10 8" fill="none" stroke="#cfcfcf" stroke-width="1"/><path d="M5 8 A4 4 0 0 0 4 4.6" fill="none" stroke="#cfcfcf" stroke-width="0.8"/><rect x="11" y="3" width="1.2" height="1.2" fill="#cfcfcf"/><rect x="11" y="6.5" width="1.2" height="1.2" fill="#cfcfcf"/></svg>
 <div class="f" style="left:44px;top:121px;width:29px;height:15px"></div><div class="t" style="left:47px;top:125px">0°</div>
 <div class="f" style="left:73px;top:121px;width:14px;height:15px"></div>
 <svg class="chev" style="left:76.5px;top:127px" viewBox="0 0 7 4"><path d="M0.5 0.4 L3.5 3.3 L6.5 0.4" fill="none" stroke="#e6e6e6" stroke-width="1.2"/></svg>
 <svg class="a" style="left:115px;top:123px" width="13" height="11" viewBox="0 0 13 11"><path d="M1 2 L5 5.5 L1 9 Z M12 2 L8 5.5 L12 9 Z" fill="none" stroke="#cfcfcf" stroke-width="1"/><path d="M6.5 0.5 L6.5 10.5" stroke="#cfcfcf" stroke-width="1"/></svg>
 <svg class="a" style="left:138px;top:122px" width="11" height="13" viewBox="0 0 11 13"><path d="M2 1 L5.5 5 L9 1 Z" fill="#cfcfcf"/><path d="M2 12 L5.5 8 L9 12 Z" fill="none" stroke="#cfcfcf" stroke-width="1"/><path d="M0.5 6.5 L10.5 6.5" stroke="#cfcfcf" stroke-width="1"/></svg>
 <svg class="a" style="left:169px;top:144px" width="11" height="4" viewBox="0 0 11 4"><circle cx="1.6" cy="2" r="1.2" fill="#d0d0d0"/><circle cx="5.5" cy="2" r="1.2" fill="#d0d0d0"/><circle cx="9.4" cy="2" r="1.2" fill="#d0d0d0"/></svg>
 <div class="hr" style="top:155px"></div>
 <!-- Appearance -->
 <div class="t h" style="left:8px;top:165px">Appearance</div>
 <svg class="a" style="left:8px;top:183px" width="14" height="14" viewBox="0 0 14 14"><rect x="0.5" y="0.5" width="13" height="13" fill="#fff" stroke="#bbb"/><path d="M1.5 12.5 L12.5 1.5" stroke="#e21e1e" stroke-width="1.5"/></svg>
 <div class="t" style="left:31px;top:186px">Fill</div>
 <svg class="a" style="left:8px;top:205px" width="14" height="14" viewBox="0 0 14 14"><rect x="0.5" y="0.5" width="13" height="13" fill="#000" stroke="#d8d8d8"/><rect x="3.5" y="3.5" width="7" height="7" fill="none" stroke="#e8e8e8" stroke-width="1.1"/><rect x="5.5" y="5.5" width="3" height="3" fill="#999"/></svg>
 <div class="t u" style="left:31px;top:209px;color:#f0f0f0">Stroke</div>
 <div class="a" style="left:63.5px;top:205px;width:13.5px;height:15px;background:#4a4a4a;border-radius:1px"></div>
 <svg class="a" style="left:66px;top:203px" width="8" height="18" viewBox="0 0 8 18"><path d="M1 7.3 L4 4.2 L7 7.3 M1 11.3 L4 14.4 L7 11.3" fill="none" stroke="#e0e0e0" stroke-width="1.2"/></svg>
 <div class="f" style="left:77px;top:205px;width:27px"></div><div class="t" style="left:80px;top:209px;color:#f0f0f0">0.5 pt</div>
 <div class="f" style="left:104px;top:205px;width:13px;border-color:#535353;background:#4a4a4a"></div>
 <svg class="chev" style="left:107px;top:211px" viewBox="0 0 7 4"><path d="M0.5 0.4 L3.5 3.3 L6.5 0.4" fill="none" stroke="#e6e6e6" stroke-width="1.2"/></svg>
 <svg class="a" style="left:8px;top:228px" width="14" height="14" viewBox="0 0 14 14"><rect x="0.5" y="0.5" width="13" height="13" fill="#6e6e6e" stroke="#aaa"/><path d="M1 1 h3 v3 h-3 Z M7 1 h3 v3 h-3 Z M4 4 h3 v3 h-3 Z M10 4 h3 v3 h-3 Z M1 7 h3 v3 h-3 Z M7 7 h3 v3 h-3 Z M4 10 h3 v3 h-3 Z M10 10 h3 v3 h-3 Z" fill="#7d7d7d"/></svg>
 <div class="t u" style="left:31px;top:231px;color:#f0f0f0">Opacity</div>
 <div class="f" style="left:64px;top:228px;width:40px"></div><div class="t" style="left:67px;top:232px;color:#f0f0f0">100%</div>
 <div class="f" style="left:104px;top:228px;width:13px;border-color:#535353;background:#4a4a4a"></div>
 <svg class="a" style="left:108px;top:231.5px" width="5" height="8" viewBox="0 0 5 8"><path d="M0.8 0.7 L4 4 L0.8 7.3" fill="none" stroke="#e6e6e6" stroke-width="1.2"/></svg>
 <div class="t" style="left:13px;top:250px;font-style:italic;font-size:11.5px;color:#cfcfcf;letter-spacing:-0.6px">fx<span style="font-size:8px">.</span></div>
 <svg class="a" style="left:169px;top:274px" width="11" height="4" viewBox="0 0 11 4"><circle cx="1.6" cy="2" r="1.2" fill="#d0d0d0"/><circle cx="5.5" cy="2" r="1.2" fill="#d0d0d0"/><circle cx="9.4" cy="2" r="1.2" fill="#d0d0d0"/></svg>
 <div class="hr" style="top:287px"></div>
 <!-- Align -->
 <div class="t h" style="left:8px;top:296px">Align</div>
 <svg class="a" style="left:10px;top:315px" width="22" height="15" viewBox="0 0 22 15"><rect x="1" y="1" width="12" height="12" fill="none" stroke="#cfcfcf" stroke-width="1" stroke-dasharray="1.5 1.5"/><path d="M1 7 L13 7 M7 1 L7 13" stroke="#b5b5b5" stroke-width="1" stroke-dasharray="1.5 1.5"/><path d="M15.5 6 L18 8.5 L20.5 6" fill="none" stroke="#d0d0d0" stroke-width="1"/></svg>
 <svg class="a" style="left:39px;top:315px" width="132" height="16" viewBox="0 0 132 16"><g fill="#c6c6c6">
  <rect x="0.5" y="0.5" width="1.2" height="14"/><rect x="3" y="2.5" width="6.5" height="4"/><rect x="3" y="8.5" width="10" height="4"/>
  <rect x="28.4" y="0.5" width="1.2" height="14"/><rect x="25.8" y="2.5" width="6.5" height="4"/><rect x="24" y="8.5" width="10" height="4"/>
  <rect x="59" y="0.5" width="1.2" height="14"/><rect x="51.5" y="2.5" width="6.5" height="4"/><rect x="48" y="8.5" width="10" height="4"/>
  <rect x="70.5" y="1" width="14" height="1.2"/><rect x="73" y="3.5" width="4" height="10"/><rect x="79" y="3.5" width="4" height="6"/>
  <rect x="94" y="7" width="14" height="1.2"/><rect x="96.5" y="2.5" width="4" height="10"/><rect x="102.5" y="4.5" width="4" height="6.2"/>
  <rect x="117" y="13" width="14" height="1.2"/><rect x="119.5" y="2.5" width="4" height="10"/><rect x="125.5" y="6.5" width="4" height="6"/>
 </g></svg>
 <svg class="a" style="left:169px;top:342px" width="11" height="4" viewBox="0 0 11 4"><circle cx="1.6" cy="2" r="1.2" fill="#d0d0d0"/><circle cx="5.5" cy="2" r="1.2" fill="#d0d0d0"/><circle cx="9.4" cy="2" r="1.2" fill="#d0d0d0"/></svg>
 <div class="hr" style="top:352px"></div>
 <!-- Pathfinder -->
 <div class="t h" style="left:8px;top:362px">Pathfinder</div>
 <svg class="a" style="left:12px;top:383px" width="86" height="13" viewBox="0 0 86 13">
  <path d="M0.5 0.5 h8 v3.5 h3.5 v8 h-8 v-3.5 h-3.5 Z" fill="#cfcfcf"/>
  <rect x="25" y="0.5" width="8" height="8" fill="#cfcfcf"/><rect x="29" y="4" width="7.5" height="7.5" fill="#535353" stroke="#cfcfcf" stroke-width="1"/>
  <rect x="48.5" y="1" width="7.5" height="7.5" fill="none" stroke="#cfcfcf" stroke-width="1"/><rect x="52" y="4.5" width="7.5" height="7.5" fill="none" stroke="#cfcfcf" stroke-width="1"/><rect x="52" y="4.5" width="4" height="4" fill="#cfcfcf"/>
  <rect x="72.5" y="1" width="7.5" height="7.5" fill="#cfcfcf"/><rect x="76" y="4.5" width="7.5" height="7.5" fill="#cfcfcf"/><rect x="76.5" y="5" width="3" height="3" fill="#535353"/>
 </svg>
 <div class="a" style="left:143px;top:382px;width:37px;height:15px;border:1px solid #5a5a5a;border-radius:2px"></div>
 <div class="t" style="left:150px;top:386px;color:#6f6f6f">Expand</div>
 <svg class="a" style="left:169px;top:403px" width="11" height="4" viewBox="0 0 11 4"><circle cx="1.6" cy="2" r="1.2" fill="#d0d0d0"/><circle cx="5.5" cy="2" r="1.2" fill="#d0d0d0"/><circle cx="9.4" cy="2" r="1.2" fill="#d0d0d0"/></svg>
 <div class="hr" style="top:416px"></div>
 <!-- Quick Actions -->
 <div class="t h" style="left:8px;top:429px">Quick Actions</div>
 <div class="a" style="left:8px;top:446px;width:77px;height:16px;border:1px solid #8a8a8a;border-radius:2px;background:#4d4d4d"></div>
 <div class="t" style="left:28px;top:450px;color:#f0f0f0">Offset Path</div>
 <div class="a" style="left:93px;top:446px;width:77px;height:16px;border:1px solid #8a8a8a;border-radius:2px;background:#4d4d4d"></div>
 <div class="t" style="left:121px;top:450px;color:#f0f0f0">Group</div>
 <!-- properties scrollbar -->
 <svg class="a" style="left:186px;top:35px" width="7" height="4" viewBox="0 0 7 4"><path d="M0.5 3.5 L3.5 0.6 L6.5 3.5" fill="none" stroke="#9a9a9a" stroke-width="1"/></svg>
 <div class="a" style="left:186.5px;top:41px;width:8px;height:391px;background:#5f5f5f;border-radius:4px"></div>
 <svg class="a" style="left:186px;top:461px" width="7" height="4" viewBox="0 0 7 4"><path d="M0.5 0.5 L3.5 3.4 L6.5 0.5" fill="none" stroke="#9a9a9a" stroke-width="1"/></svg>
 <!-- collapsed panels -->
 <div class="a" style="left:0;top:467px;width:195px;height:3px;background:#3a3a3a"></div>
 <div class="a" style="left:0;top:470px;width:195px;height:20px;background:#424242"></div>
 <div class="a" style="left:0;top:470px;width:44px;height:20px;background:#535353"></div>
 <div class="t" style="left:12px;top:476px;font-weight:bold;color:#f0f0f0">Stroke</div>
 <div class="a" style="left:0;top:490px;width:195px;height:4px;background:#3a3a3a"></div>
 <div class="a" style="left:0;top:494px;width:195px;height:20px;background:#424242"></div>
 <div class="a" style="left:0;top:494px;width:56px;height:20px;background:#535353"></div>
 <div class="t" style="left:12px;top:500px;font-weight:bold;color:#f0f0f0">Transform</div>
 <div class="a" style="left:0;top:514px;width:195px;height:4px;background:#3a3a3a"></div>
 <div class="a" style="left:0;top:518px;width:195px;height:20px;background:#424242"></div>
 <div class="a" style="left:0;top:518px;width:67px;height:20px;background:#535353"></div>
 <div class="t" style="left:12px;top:524px;font-weight:bold;color:#f0f0f0">Transparency</div>
 <svg class="a" style="left:3px;top:476px" width="5" height="8" viewBox="0 0 5 8"><path d="M0.8 3 L2.5 1 L4.2 3 M0.8 5 L2.5 7 L4.2 5" fill="none" stroke="#bdbdbd" stroke-width="0.9"/></svg>
 <svg class="a" style="left:3px;top:500px" width="5" height="8" viewBox="0 0 5 8"><path d="M0.8 3 L2.5 1 L4.2 3 M0.8 5 L2.5 7 L4.2 5" fill="none" stroke="#bdbdbd" stroke-width="0.9"/></svg>
 <svg class="a" style="left:3px;top:524px" width="5" height="8" viewBox="0 0 5 8"><path d="M0.8 3 L2.5 1 L4.2 3 M0.8 5 L2.5 7 L4.2 5" fill="none" stroke="#bdbdbd" stroke-width="0.9"/></svg>
 <svg class="a" style="left:181px;top:477px" width="9" height="7" viewBox="0 0 9 7"><path d="M0 0.6 h9 M0 3.5 h9 M0 6.4 h9" stroke="#a8a8a8" stroke-width="1"/></svg>
 <svg class="a" style="left:181px;top:501px" width="9" height="7" viewBox="0 0 9 7"><path d="M0 0.6 h9 M0 3.5 h9 M0 6.4 h9" stroke="#a8a8a8" stroke-width="1"/></svg>
 <svg class="a" style="left:181px;top:525px" width="9" height="7" viewBox="0 0 9 7"><path d="M0 0.6 h9 M0 3.5 h9 M0 6.4 h9" stroke="#a8a8a8" stroke-width="1"/></svg>
 <!-- transparency content -->
 <div class="f" style="left:6px;top:544px;width:69px;height:15px"></div>
 <div class="t" style="left:10px;top:548px;color:#f0f0f0">Normal</div>
 <svg class="chev" style="left:64px;top:550px" viewBox="0 0 7 4"><path d="M0.5 0.4 L3.5 3.3 L6.5 0.4" fill="none" stroke="#e6e6e6" stroke-width="1.2"/></svg>
 <div class="t" style="left:80px;top:548px">Opacity:</div>
 <div class="f" style="left:111px;top:544px;width:39px;height:15px"></div>
 <div class="t" style="left:114px;top:548px;color:#f0f0f0">100%</div>
 <div class="f" style="left:150px;top:544px;width:14px;height:15px;border-color:#535353;background:#4a4a4a"></div>
 <svg class="a" style="left:155px;top:547.5px" width="5" height="8" viewBox="0 0 5 8"><path d="M0.8 0.7 L4 4 L0.8 7.3" fill="none" stroke="#e6e6e6" stroke-width="1.2"/></svg>
 <div class="a" style="left:6.5px;top:571.5px;width:39px;height:39.5px;background:#fff;border:1.3px solid #0a0a0a;border-top-width:1.6px"></div>
 <svg class="a" style="left:7px;top:572px" width="39" height="39" viewBox="0 0 39 39"><g fill="none" stroke="#b4b4b4" stroke-width="0.7"><path d="M11 3 L29 3 L29 20 L31 22 L30 28 L26 34 L12 36 L7 33 L10 28 L11 24 Z"/><path d="M12 5.5 h16 M12 7.5 h16 M13 9.5 h14"/><path d="M12 15 l8 -3 M12 18 l10 -4 M12 21 l10 -4 M13 24 l8 -4"/><path d="M21 19 l3 7 l4 -8 M24 20 l1 8 M28 22 l4 -4"/></g><g stroke="#555" stroke-width="1.4" fill="none"><path d="M12 11.5 L29 13.5"/><path d="M14 9 l4 0 M20 8 l3 2 M25 8 l3 2"/></g><g fill="#3c3c3c"><ellipse cx="9.5" cy="28.5" rx="1.6" ry="3.2"/><ellipse cx="14" cy="30" rx="1.5" ry="3.2"/><ellipse cx="17.5" cy="30" rx="1.5" ry="3.2"/><ellipse cx="21.5" cy="30" rx="1.6" ry="3"/><ellipse cx="25" cy="29" rx="1.5" ry="2.8"/></g><path d="M7 34 q8 3 18 0" fill="none" stroke="#c4c4c4" stroke-width="0.7"/></svg>
 <div class="a" style="left:112px;top:569px;width:62px;height:15px;border:1px solid #6e6e6e;border-radius:2px;background:#4f4f4f"></div>
 <div class="t" style="left:123px;top:573px;color:#f0f0f0">Make Mask</div>
 <div class="a" style="left:113px;top:589px;width:9px;height:9px;border:1px solid #6a6a6a;border-radius:1px"></div>
 <div class="t" style="left:127px;top:590px;color:#6c6c6c">Clip</div>
 <div class="a" style="left:113px;top:604px;width:9px;height:9px;border:1px solid #6a6a6a;border-radius:1px"></div>
 <div class="t" style="left:127px;top:605px;color:#6c6c6c">Invert Mask</div>
</div>
<!-- ARTWORK -->
<svg class="a" style="left:0;top:0" width="1588" height="670" viewBox="0 0 1588 670">
<g fill="none" stroke="#5a80dc" stroke-width="0.7">
<path d="M577.2 267.8 L577.2 216.0 L577.5 179.3"/>
<path d="M577.5 179.3 C581.0 181.3 593.8 188.5 598.5 191.3 C603.2 194.2 602.6 194.1 605.5 196.1 C608.4 198.2 611.0 204.1 616.0 203.7 C620.9 203.4 630.2 196.5 635.1 193.9 C639.9 191.3 642.3 189.4 645.1 188.2 C647.9 187.1 650.7 187.2 651.8 187.0"/>
<path d="M651.8 187.0 L720.0 187.5"/>
<path d="M591.3 226.0 L591.3 216.0 L591.3 204.0 L595.1 205.5"/>
<path d="M595.1 205.5 C596.4 206.9 600.2 212.0 603.3 214.0 C606.4 216.1 612.0 217.1 613.7 217.8"/>
<path d="M610.7 221.3 L689.9 221.6"/>
<path d="M591.3 226.0 C596.6 225.9 611.9 224.5 623.0 225.5 C634.1 226.5 648.9 230.4 657.8 231.9 C666.7 233.4 666.0 234.2 676.4 234.5 C686.8 234.7 712.7 233.6 720.0 233.4"/>
<path d="M630.1 215.5 C632.2 213.9 638.8 208.2 642.4 205.8 C645.9 203.4 650.0 201.8 651.5 201.0"/>
<path d="M651.5 201.3 L693.6 201.8"/>
<path d="M630.1 215.7 C632.3 215.4 637.7 214.4 643.0 214.2 C648.3 213.9 656.4 213.9 661.9 214.2 C667.5 214.5 672.4 215.4 676.4 216.0 C680.4 216.6 683.2 217.0 685.8 217.8 C688.4 218.6 691.0 220.2 692.1 220.7"/>
<path d="M681.6 204.8 L677.2 208.8 L681.9 209.9"/>
<path d="M681.9 210.0 L716.0 210.3"/>
<path d="M681.6 204.8 L693.6 201.8"/>
<path d="M692.1 220.7 C693.0 220.6 694.6 220.4 697.3 220.0 C700.0 219.6 704.4 218.7 708.2 218.1 C712.0 217.4 718.0 216.6 720.0 216.3"/>
<path d="M691.5 218.5 L692.3 223.3 L696.4 217.8"/>
<path d="M677.2 229.7 L679.4 230.0 L681.6 230.4 L683.9 226.7 L685.8 224.5"/>
<path d="M681.6 230.9 L720.0 230.9"/>
<path d="M591.3 246.1 L609.3 246.1"/>
<path d="M609.3 246.1 C614.5 246.4 631.7 247.1 640.9 247.6 C650.1 248.1 656.1 248.9 664.5 249.1 C672.9 249.3 686.9 248.9 691.3 248.8"/>
<path d="M591.3 251.8 L642.1 255.4"/>
<path d="M591.3 255.4 L642.1 256.6"/>
<path d="M591.3 253.6 L664.5 253.9"/>
<path d="M598.1 263.7 L625.7 258.4"/>
<path d="M625.7 258.4 L639.1 255.8"/>
<path d="M637.7 257.0 L640.2 253.5 L644.8 251.4 L644.4 256.0"/>
<path d="M649.1 256.3 L651.0 260.0 L653.7 264.0 L653.3 267.0"/>
<path d="M664.5 253.9 L669.7 254.3 L669.7 258.1 L676.1 254.8 L679.4 258.4"/>
<path d="M679.4 258.8 L709.3 259.3"/>
<path d="M688.5 252.3 L690.1 247.8 L688.4 256.8 L692.5 255.3 L691.2 260.6 L696.4 250.9 L696.3 259.1 L699.1 254.5"/>
<path d="M710.4 241.8 L709.2 245.9 L707.9 250.5 L712.8 249.0 L714.7 243.6"/>
<path d="M710.2 252.0 L713.0 255.9 L711.4 262.6 L714.8 251.8 L714.8 265.5"/>
<path d="M592.1 256.6 L592.1 270.0"/>
<path d="M598.1 263.7 C597.6 264.0 595.7 264.5 595.1 265.5 C594.5 266.6 594.5 269.3 594.3 270.0"/>
<path d="M710.0 187.5 L743.6 186.9 L775.7 186.9 L807.8 186.9 L815.5 187.2"/>
<path d="M815.5 187.2 C816.3 188.3 818.9 191.0 820.4 193.9 C822.0 196.7 823.9 200.8 824.6 204.3 C825.3 207.8 824.6 213.0 824.6 214.8"/>
<path d="M824.6 214.8 L824.2 245.4 L824.2 263.3"/>
<path d="M730.9 201.3 L807.8 201.3 L810.3 207.3"/>
<path d="M730.9 201.3 C731.5 201.9 732.9 203.8 734.6 204.6 C736.4 205.4 737.4 206.4 741.3 206.3 C745.3 206.1 753.8 204.6 758.5 203.9 C763.2 203.2 765.9 202.1 769.7 202.1 C773.5 202.1 776.2 203.1 781.2 203.9 C786.2 204.7 794.7 206.4 799.6 207.0 C804.4 207.6 808.5 207.3 810.3 207.3"/>
<path d="M710.0 210.6 L729.1 210.3"/>
<path d="M729.1 217.0 L732.4 217.5"/>
<path d="M732.4 217.5 L769.7 217.5 L809.7 216.6"/>
<path d="M809.7 216.6 L809.7 227.9"/>
<path d="M809.7 227.9 C805.7 227.0 796.8 222.1 785.8 222.2 C774.8 222.3 750.6 227.5 743.6 228.5"/>
<path d="M727.9 223.4 L751.0 223.4"/>
<path d="M736.1 226.0 L743.6 228.5"/>
<path d="M710.0 230.9 L729.4 231.2"/>
<path d="M710.0 233.4 L727.9 233.9"/>
<path d="M727.6 230.6 L726.5 235.9 L725.1 241.8 L732.4 230.1 L729.3 243.8 L731.1 239.5 L733.3 234.6"/>
<path d="M712.3 241.2 L710.4 252.9 L712.6 249.2 L710.0 260.2 L714.7 245.4 L710.7 265.2 L714.2 255.6 L714.5 261.7"/>
<path d="M719.0 249.9 C721.2 250.3 730.9 250.9 732.4 252.5 C733.9 254.2 729.0 256.6 727.9 259.6 C726.8 262.5 726.0 268.3 725.7 270.0"/>
<path d="M739.9 244.5 L743.1 241.3 L746.1 244.8"/>
<path d="M729.4 243.1 L742.1 243.1 L753.6 239.0 L769.7 244.6"/>
<path d="M742.1 244.6 L745.8 270.0"/>
<path d="M744.6 244.6 L747.6 270.0"/>
<path d="M760.5 243.8 L762.4 247.8 L766.7 244.1 L767.9 248.9 L771.8 245.2 L772.4 249.5"/>
<path d="M769.0 249.1 L762.2 270.0"/>
<path d="M771.2 249.1 L764.9 270.0"/>
<path d="M761.5 255.8 L759.3 270.0"/>
<path d="M783.5 242.0 L785.4 246.5"/>
<path d="M784.6 228.2 L783.9 241.6"/>
<path d="M786.4 228.2 L785.8 241.6"/>
<path d="M772.7 244.6 L784.6 243.1 L807.0 250.6"/>
<path d="M772.7 246.4 L784.6 245.4 L805.5 252.8"/>
<path d="M784.6 246.9 L782.8 259.6"/>
<path d="M786.4 246.9 L784.6 259.6"/>
<path d="M779.5 260.9 L784.5 262.2 L787.6 258.6"/>
<path d="M793.2 260.0 L795.5 265.4 L797.6 261.2"/>
<path d="M769.7 260.3 L793.6 261.8"/>
<path d="M795.8 252.8 L805.5 255.8 L811.5 250.1"/>
<path d="M824.2 263.3 C825.2 263.3 826.4 262.5 830.1 263.3 C833.9 264.0 843.2 266.9 846.6 267.8 C849.9 268.6 849.7 268.4 850.3 268.5"/>
<path d="M815.5 262.8 L820.4 267.0"/>
<path d="M577.2 267.7 L577.2 365.0"/>
<path d="M591.8 265.0 L591.8 365.0"/>
<path d="M593.0 274.0 L593.0 365.0"/>
<path d="M598.1 265.0 C597.6 266.0 595.4 268.6 595.1 271.0 C594.7 273.3 595.7 277.8 595.8 279.2"/>
<path d="M599.7 285.2 L602.1 289.2 L606.9 284.5 L606.5 289.4"/>
<path d="M596.3 279.9 C598.9 280.1 607.1 281.3 612.2 281.1 C617.4 280.9 623.2 279.9 627.2 278.7 C631.1 277.5 633.9 275.5 636.1 274.0 C638.4 272.4 639.1 270.7 640.6 269.5 C642.1 268.2 644.3 267.0 645.1 266.5"/>
<path d="M638.8 278.7 L638.7 283.2 L638.6 288.0 L643.3 281.4 L644.3 285.8 L647.1 278.7"/>
<path d="M643.6 287.4 C645.9 287.9 653.4 289.8 657.8 290.7 C662.1 291.5 666.1 292.2 669.7 292.6 C673.3 293.1 677.8 293.2 679.4 293.4"/>
<path d="M591.3 298.1 C596.1 298.7 611.0 301.2 619.7 301.6 C628.4 301.9 635.8 301.1 643.6 300.4 C651.3 299.6 659.6 297.6 666.3 297.1 C673.0 296.5 680.9 297.1 683.9 297.1"/>
<path d="M666.8 270.1 L668.2 274.2 L667.0 279.5 L673.9 271.6 L671.8 280.9 L675.7 278.6 L678.3 270.6 L679.8 276.1 L680.0 280.5"/>
<path d="M677.9 274.0 L693.6 274.0 L709.3 275.4"/>
<path d="M679.9 284.7 L679.7 293.0 L681.8 288.9 L682.1 297.8 L686.4 284.8 L685.0 292.3 L688.4 288.9 L686.2 299.3 L691.0 285.5 L688.8 294.4 L694.3 288.6 L692.7 296.6 L696.1 293.9 L699.7 288.3 L696.8 299.2 L704.2 284.8 L701.1 296.2 L704.5 299.2 L708.9 286.6 L707.8 292.4"/>
<path d="M709.4 286.2 L710.0 297.3 L714.1 285.3 L712.0 292.9 L714.6 297.5 L718.9 285.9 L717.7 290.7 L719.4 298.3"/>
<path d="M591.3 299.0 L720.0 309.8"/>
<path d="M643.6 302.3 L720.0 312.8"/>
<path d="M590.6 303.1 L720.0 315.7"/>
<path d="M590.6 306.6 L720.0 319.6"/>
<path d="M590.6 310.2 L720.0 323.5"/>
<path d="M590.6 313.8 L720.0 327.4"/>
<path d="M590.6 317.4 L720.0 331.3"/>
<path d="M590.6 321.0 L720.0 335.1"/>
<path d="M590.6 324.6 L720.0 339.0"/>
<path d="M591.3 325.4 L720.0 350.8"/>
<path d="M591.3 326.9 L720.0 348.6"/>
<path d="M657.8 338.9 L614.5 359.8"/>
<path d="M614.5 359.8 L604.8 365.0"/>
<path d="M680.1 343.4 L636.1 365.0"/>
<path d="M699.6 347.4 L663.0 365.0"/>
<path d="M720.0 353.1 L694.3 365.0"/>
<path d="M724.9 265.0 L724.2 282.9"/>
<path d="M715.2 265.0 L716.7 287.4"/>
<path d="M745.8 265.0 L747.3 282.9"/>
<path d="M757.8 265.0 L754.8 285.9"/>
<path d="M762.5 265.0 L758.5 293.4"/>
<path d="M764.6 265.0 L760.4 293.4"/>
<path d="M781.6 265.0 L777.9 284.4"/>
<path d="M783.1 265.0 L779.9 284.4"/>
<path d="M745.4 282.6 L746.6 285.9 L750.3 287.4 L754.0 287.1 L756.3 285.1"/>
<path d="M778.0 284.5 L776.5 289.6 L782.3 285.0 L784.8 288.8 L787.4 284.6 L791.5 287.2"/>
<path d="M716.7 287.4 L739.9 285.1 L766.0 285.1 L814.5 288.9 L833.9 297.1"/>
<path d="M715.2 292.6 L719.0 297.1 L725.7 296.3 L736.9 296.0 L743.6 298.6 L756.3 298.6 L758.5 293.4"/>
<path d="M725.7 297.5 L780.1 298.1"/>
<path d="M780.2 303.5 L783.5 297.1 L780.2 308.4 L784.4 302.2 L781.5 312.9 L785.0 306.6 L786.3 311.6"/>
<path d="M710.0 309.0 L780.1 312.8 L811.5 317.2"/>
<path d="M710.0 311.3 L748.1 314.3 L799.6 319.5"/>
<path d="M830.9 274.0 C831.4 274.7 833.0 276.9 833.9 278.4 C834.8 279.9 835.9 281.4 836.1 282.9 C836.4 284.4 836.1 286.3 835.4 287.4 C834.6 288.5 833.1 289.3 831.6 289.6 C830.1 290.0 827.3 289.6 826.4 289.6"/>
<path d="M846.6 268.0 L850.3 268.7 L854.0 272.5 L854.0 279.9 L851.8 284.4 L847.3 279.9 L845.1 276.9"/>
<path d="M820.4 269.5 L846.6 268.0"/>
<path d="M842.1 279.9 L842.8 296.3"/>
<path d="M805.5 294.1 L815.2 293.4 L821.9 296.3 L827.2 295.6 L833.9 297.1 L841.3 296.3 L837.6 300.8 L830.1 301.6 L824.2 303.8"/>
<path d="M797.3 285.9 L805.5 294.1"/>
<path d="M818.2 310.6 L819.2 316.2 L822.4 309.0 L825.5 315.8 L829.4 307.5 L829.7 313.8 L829.7 318.3 L834.4 310.9 L834.9 315.3 L838.8 309.2 L840.2 317.3"/>
<path d="M813.7 316.1 L814.1 322.1 L817.7 318.6 L818.0 324.1 L821.4 315.9 L822.7 323.0"/>
<path d="M841.3 316.5 C842.0 317.6 843.6 321.3 845.1 323.2 C846.6 325.1 848.6 326.6 850.3 327.7 C852.0 328.7 854.0 328.5 855.5 329.5 C857.0 330.5 858.3 332.1 859.3 333.7 C860.2 335.2 861.1 336.8 861.5 338.9 C861.9 341.0 861.6 344.2 861.5 346.3 C861.4 348.5 861.2 349.6 860.7 351.6 C860.2 353.6 859.8 356.0 858.5 358.3 C857.3 360.5 854.2 363.9 853.3 365.0"/>
<path d="M838.4 344.1 L830.9 361.3"/>
<path d="M847.3 331.4 L838.4 344.1"/>
<path d="M849.6 332.2 L840.6 344.9 L833.1 362.0"/>
<path d="M842.1 350.8 L841.3 357.5"/>
<path d="M853.3 332.9 L842.1 350.8"/>
<path d="M855.5 333.7 L844.3 351.6"/>
<path d="M711.2 319.2 L715.8 319.7"/>
<path d="M719.5 320.3 L723.5 318.1 L722.4 323.7 L728.7 318.3 L728.5 323.4 L733.6 318.6 L734.7 323.4 L738.0 319.6 L738.3 326.0"/>
<path d="M741.3 318.9 L740.2 323.1 L745.8 317.9 L744.9 322.2 L743.8 327.3 L751.7 318.9 L750.7 327.2 L752.7 323.2 L756.6 321.2 L756.5 325.6 L759.4 317.9 L761.1 328.7"/>
<path d="M710.4 336.2 L715.1 335.2 L720.3 334.0 L723.7 336.8"/>
<path d="M734.0 332.3 L733.1 338.0 L733.2 347.8 L738.4 333.2 L737.2 341.1 L737.7 346.5 L742.6 337.9 L743.1 342.2 L746.1 333.1 L742.2 346.7 L748.6 338.0 L751.0 332.8 L748.8 344.0 L753.0 337.1 L750.0 348.4 L753.2 344.3"/>
<path d="M736.5 349.6 L735.9 353.9 L735.9 358.2 L740.5 351.2 L740.1 355.6"/>
<path d="M756.4 337.0 L757.9 341.2 L761.1 336.3 L764.7 341.3 L767.4 335.2"/>
<path d="M797.9 322.8 L799.2 327.6 L800.0 334.3 L804.6 325.4 L805.5 330.1 L807.9 334.3"/>
<path d="M798.4 340.0 L798.9 352.7 L801.7 346.2 L804.4 341.9 L799.4 358.9 L806.4 345.7 L808.4 340.2 L805.9 352.9 L804.2 359.6 L809.0 349.6 L808.5 358.7"/>
<path d="M811.9 325.6 L811.1 331.6 L810.6 337.7 L809.8 342.7 L816.4 323.0 L816.3 328.5 L814.7 335.1 L812.3 347.9 L811.1 352.3 L814.4 341.5 L820.6 329.0 L822.2 324.2 L817.3 347.3 L816.6 352.8 L822.5 333.5 L821.7 339.1 L827.8 321.7 L821.5 345.6 L826.5 331.3 L821.0 351.9 L828.8 326.0 L826.3 336.7 L825.4 341.7 L825.3 353.4 L828.5 346.0 L828.3 350.3"/>
<path d="M710.0 316.5 L799.6 324.7"/>
<path d="M710.0 320.5 L799.6 329.2"/>
<path d="M710.0 324.7 L799.6 335.1"/>
<path d="M710.0 329.2 L799.6 342.6"/>
<path d="M710.0 334.0 L802.5 348.6"/>
<path d="M710.0 339.6 L807.0 360.5"/>
<path d="M710.0 342.6 L793.6 365.0"/>
<path d="M710.0 346.3 L775.7 365.0"/>
<path d="M710.0 352.3 L748.8 365.0"/>
<path d="M721.9 351.6 L710.0 357.5"/>
<path d="M735.4 354.6 L727.9 365.0"/>
<path d="M738.4 356.0 L744.3 365.0"/>
<path d="M577.2 360.0 C577.2 366.6 577.2 386.2 577.2 399.6 C577.2 412.9 577.3 431.8 577.2 440.1 C577.0 448.5 576.7 447.0 576.1 449.6 C575.5 452.1 574.1 453.8 573.4 455.5 C572.7 457.3 572.2 459.3 571.9 460.0"/>
<path d="M591.3 360.0 L591.3 371.6 L591.3 390.6 L591.3 404.5 L591.3 424.2 L591.3 435.1"/>
<path d="M591.3 371.6 L614.5 360.7"/>
<path d="M591.3 390.6 C594.6 388.6 601.5 383.8 610.7 378.7 C620.0 373.6 640.6 363.1 646.6 360.0"/>
<path d="M591.3 404.5 C598.1 400.5 618.0 388.3 631.6 380.9 C645.3 373.5 666.5 363.5 673.4 360.0"/>
<path d="M591.3 424.2 C597.4 420.2 614.9 408.0 627.6 400.3 C640.3 392.6 654.4 384.6 667.5 377.9 C680.6 371.2 699.8 363.0 706.3 360.0"/>
<path d="M591.3 435.1 C599.8 429.8 625.2 412.9 642.1 403.3 C659.0 393.7 679.9 383.8 692.8 377.6 C705.8 371.4 715.5 367.9 720.0 366.0"/>
<path d="M597.3 447.3 C606.5 441.3 632.1 423.1 652.5 411.5 C673.0 399.9 708.8 383.3 720.0 377.6"/>
<path d="M613.7 437.6 C619.7 434.5 638.2 424.9 649.6 419.0 C660.9 413.0 676.3 404.7 681.6 401.8"/>
<path d="M703.3 403.3 L720.0 394.6"/>
<path d="M640.6 437.6 C644.6 435.1 657.0 426.9 664.5 422.7 C671.9 418.5 681.9 414.0 685.4 412.2"/>
<path d="M669.0 437.6 L689.9 427.2"/>
<path d="M596.8 448.4 L596.9 453.4 L595.6 459.5 L600.3 456.5 L604.1 446.7 L604.0 452.6 L604.0 459.6"/>
<path d="M606.3 438.7 L606.5 444.7 L607.8 450.3 L611.0 439.4 L610.8 445.0 L614.0 436.2 L612.5 450.8 L615.1 446.2"/>
<path d="M624.9 445.1 L625.7 439.9 L628.7 436.9 L634.6 434.6 L637.6 436.9"/>
<path d="M615.2 445.8 L624.9 445.1"/>
<path d="M621.2 454.0 L634.6 457.0"/>
<path d="M646.6 450.8 L648.0 446.4 L651.9 448.2 L656.1 451.9 L657.8 447.1"/>
<path d="M633.9 459.0 L639.1 457.8 L644.1 457.8 L650.5 459.7 L655.1 458.8"/>
<path d="M668.2 437.6 L666.7 442.8 L666.3 448.1 L667.5 452.5 L666.3 457.0"/>
<path d="M680.4 445.8 L679.8 459.4 L683.4 449.2 L683.2 453.7 L686.0 445.7 L686.0 458.8"/>
<path d="M693.1 449.7 L694.7 444.7 L693.1 457.5 L695.8 453.6"/>
<path d="M668.2 443.6 L679.4 449.6"/>
<path d="M668.2 449.6 L679.4 452.5"/>
<path d="M678.9 401.1 L683.6 398.9 L684.3 403.1"/>
<path d="M690.7 400.3 L691.8 404.5 L695.9 401.6 L697.9 406.5 L701.4 401.1"/>
<path d="M682.4 403.3 L686.9 410.0 L687.6 415.2"/>
<path d="M701.8 404.8 L705.5 413.0"/>
<path d="M710.7 411.5 L716.7 424.9"/>
<path d="M693.9 421.0 L692.9 425.2 L692.4 430.0 L697.2 424.7 L696.7 429.7 L700.3 421.4 L701.2 427.4"/>
<path d="M699.2 434.9 L701.2 439.0 L704.1 434.8"/>
<path d="M708.3 446.1 L708.9 450.8 L708.0 456.5 L713.5 447.6 L715.0 454.1"/>
<path d="M692.8 430.1 L700.3 437.6 L709.3 449.6"/>
<path d="M701.0 425.7 L710.7 432.4 L718.2 445.1"/>
<path d="M710.0 370.4 L729.4 360.0"/>
<path d="M710.0 382.4 L742.1 366.0"/>
<path d="M710.0 388.4 L732.4 376.4"/>
<path d="M710.0 399.6 L736.9 385.4"/>
<path d="M716.0 411.5 L737.6 400.3"/>
<path d="M765.2 386.9 L781.6 377.2 L800.3 368.2 L810.3 370.4"/>
<path d="M757.8 360.0 L778.7 363.7 L808.5 366.0"/>
<path d="M760.7 373.4 L778.7 363.7"/>
<path d="M810.3 370.4 L810.3 424.2"/>
<path d="M811.5 370.4 L811.5 424.2"/>
<path d="M824.6 369.0 L824.6 460.0"/>
<path d="M859.3 360.0 C857.4 361.2 851.4 365.5 848.1 367.5 C844.7 369.5 842.0 370.3 839.1 371.9 C836.2 373.6 832.3 376.3 830.9 377.2"/>
<path d="M828.0 375.8 L833.3 376.5"/>
<path d="M732.7 367.6 L735.1 372.7 L737.9 367.4 L735.7 377.6 L734.9 382.2 L733.6 387.4 L738.1 386.8"/>
<path d="M754.2 374.5 L756.4 369.4 L759.1 372.9"/>
<path d="M756.3 374.9 C756.9 376.2 759.5 380.4 760.0 382.4 C760.5 384.4 759.9 385.3 759.3 386.9 C758.6 388.4 756.5 390.8 756.0 391.6"/>
<path d="M738.4 371.9 C739.2 373.2 742.0 375.6 743.6 379.4 C745.2 383.2 746.8 389.5 748.1 394.6 C749.3 399.7 750.5 407.4 751.0 410.0"/>
<path d="M766.6 399.9 L767.3 404.8 L770.7 401.5 L770.9 407.2"/>
<path d="M772.4 416.3 L771.3 420.6 L774.7 423.6"/>
<path d="M765.2 387.6 C764.5 390.6 761.0 399.5 760.7 405.5 C760.5 411.6 763.0 417.9 763.7 423.9 C764.5 429.9 765.0 438.4 765.2 441.3"/>
<path d="M766.7 388.4 C768.0 391.1 772.7 399.1 774.2 404.8 C775.7 410.5 775.7 417.5 775.7 422.7 C775.7 427.9 775.9 432.6 774.2 436.1 C772.4 439.6 766.7 442.3 765.2 443.6"/>
<path d="M738.4 410.1 L739.9 406.0 L744.5 404.2 L742.3 413.0 L745.0 408.8"/>
<path d="M741.7 421.3 L741.3 428.3 L745.1 418.2 L744.9 424.2"/>
<path d="M739.9 394.3 C740.2 396.8 741.5 403.5 742.1 409.3 C742.7 415.0 741.3 423.9 743.6 428.7 C745.8 433.4 753.1 433.8 755.5 437.6 C757.9 441.5 757.6 449.4 758.1 451.8"/>
<path d="M748.1 400.0 C748.6 401.7 750.0 405.4 751.0 410.0 C752.1 414.6 753.3 422.0 754.3 427.6 C755.3 433.2 756.6 440.9 757.0 443.6"/>
<path d="M764.9 444.3 L764.9 460.0"/>
<path d="M718.5 414.6 L718.6 420.6 L723.0 415.1 L723.5 419.6"/>
<path d="M729.7 427.6 L728.7 433.1 L732.8 430.9 L734.8 426.2"/>
<path d="M711.9 448.6 L711.4 454.8 L717.1 449.2 L715.8 455.6"/>
<path d="M739.2 446.0 L738.3 450.3 L742.9 449.1"/>
<path d="M711.5 411.5 C712.4 413.7 714.4 420.6 716.7 424.9 C719.1 429.3 722.9 433.2 725.7 437.6 C728.4 442.0 731.9 449.1 733.1 451.3"/>
<path d="M719.0 416.7 C720.7 418.5 725.8 423.0 729.4 427.2 C733.0 431.3 738.2 436.3 740.6 441.8 C743.0 447.3 743.1 457.0 743.6 460.0"/>
<path d="M798.4 433.2 L802.3 429.7 L803.6 434.1"/>
<path d="M785.4 445.2 L787.2 441.3 L787.9 449.9 L791.4 446.7 L793.3 441.1 L793.6 450.9 L796.4 447.5"/>
<path d="M778.3 457.3 L783.4 457.5 L787.6 458.8"/>
<path d="M823.7 417.5 L823.5 422.5 L827.4 420.4 L831.4 417.9 L831.5 422.5"/>
<path d="M837.1 419.9 L841.3 417.6 L844.5 420.5"/>
<path d="M828.2 435.9 L831.8 431.1 L836.8 430.6 L836.9 435.9 L841.1 431.5 L842.3 435.8"/>
<path d="M825.7 439.6 L825.7 447.8 L827.7 443.7 L830.7 439.2 L830.5 448.4"/>
<path d="M810.3 424.5 C808.5 425.7 803.3 428.2 799.6 431.6 C795.8 435.1 790.8 440.6 787.6 445.1 C784.4 449.6 781.4 456.3 780.1 458.5"/>
<path d="M816.3 429.4 C814.5 430.8 809.3 434.3 805.5 437.6 C801.7 441.0 795.6 447.6 793.6 449.6"/>
<path d="M844.3 419.7 C841.8 421.9 834.4 428.4 829.4 433.1 C824.4 437.9 819.5 443.8 814.5 448.1 C809.5 452.3 802.0 456.8 799.6 458.5"/>
<path d="M838.4 419.7 C836.6 421.4 831.9 426.5 827.9 430.1 C823.9 433.8 816.7 439.9 814.5 441.8"/>
<path d="M573.4 456.5 C572.7 458.2 570.1 463.7 569.0 466.9 C567.8 470.2 567.2 473.3 566.7 475.9 C566.2 478.5 566.1 481.5 566.0 482.6"/>
<path d="M566.0 482.6 C564.1 483.4 558.8 485.6 554.8 487.1 C550.8 488.6 544.2 490.8 542.1 491.6"/>
<path d="M542.1 492.3 L577.9 492.6"/>
<path d="M538.4 505.7 L572.7 505.7"/>
<path d="M540.6 504.0 L568.2 504.0"/>
<path d="M539.1 509.5 L543.6 542.3"/>
<path d="M540.7 509.5 L545.1 542.3"/>
<path d="M542.3 509.5 L546.6 542.3"/>
<path d="M543.9 509.5 L548.1 542.3"/>
<path d="M545.6 509.5 L549.7 542.3"/>
<path d="M547.2 509.5 L551.2 542.3"/>
<path d="M548.8 509.5 L552.7 542.3"/>
<path d="M550.4 509.5 L554.2 542.3"/>
<path d="M552.0 509.5 L555.8 542.3"/>
<path d="M553.6 509.5 L557.3 542.3"/>
<path d="M555.2 509.5 L558.8 542.3"/>
<path d="M556.8 509.5 L560.3 542.3"/>
<path d="M558.4 509.5 L561.9 542.3"/>
<path d="M560.1 509.5 L563.4 542.3"/>
<path d="M561.7 509.5 L564.9 542.3"/>
<path d="M563.3 509.5 L566.4 542.3"/>
<path d="M564.9 509.5 L567.9 542.3"/>
<path d="M566.5 509.5 L569.5 542.3"/>
<path d="M568.1 509.5 L571.0 542.3"/>
<path d="M569.7 509.5 L572.5 542.3"/>
<path d="M571.3 509.5 L574.0 542.3"/>
<path d="M573.0 509.5 L575.6 542.3"/>
<path d="M542.1 544.6 L581.6 544.6"/>
<path d="M545.1 548.3 L580.1 548.3"/>
<path d="M545.1 551.3 L580.1 551.3"/>
<path d="M587.6 517.7 L583.1 540.1"/>
<path d="M589.9 518.4 L585.4 540.8"/>
<path d="M582.1 469.9 L595.8 461.0 L603.3 457.2"/>
<path d="M590.6 456.5 L586.1 463.2"/>
<path d="M589.1 479.6 L616.0 465.4 L616.0 478.9"/>
<path d="M589.1 479.6 L614.5 478.9 L626.1 478.1"/>
<path d="M621.2 455.0 L621.2 474.4"/>
<path d="M577.9 492.3 C579.2 492.2 582.3 492.4 585.4 491.6 C588.5 490.7 590.6 488.0 596.6 487.1 C602.5 486.2 615.0 486.3 621.2 486.3 C627.4 486.3 631.8 487.0 633.9 487.1"/>
<path d="M566.0 483.4 C568.6 484.5 576.5 488.8 581.6 490.1 C586.7 491.3 594.1 490.7 596.6 490.8"/>
<path d="M583.3 492.7 L588.2 491.0"/>
<path d="M610.0 488.7 L610.2 493.5 L613.8 491.0 L618.6 490.3"/>
<path d="M583.5 506.9 L585.6 501.1 L582.6 511.1 L588.2 504.7 L586.5 514.7 L588.3 510.3"/>
<path d="M593.3 494.4 L594.6 500.8 L597.7 492.9 L595.5 508.1 L599.2 499.6 L595.7 513.0 L601.7 495.0 L599.5 504.7 L603.8 498.9 L604.0 503.3 L602.5 511.8 L605.1 507.8"/>
<path d="M592.2 520.9 L594.3 525.1 L596.5 518.8 L601.1 522.0 L605.0 524.9 L607.0 518.6"/>
<path d="M599.8 529.4 L600.8 535.9 L605.2 529.5 L605.0 534.2"/>
<path d="M623.4 511.0 C620.7 512.1 611.5 513.6 607.0 517.7 C602.5 521.8 598.3 532.6 596.6 535.6"/>
<path d="M623.4 513.2 C621.1 514.3 613.2 516.1 609.3 519.9 C605.3 523.8 601.2 533.6 599.6 536.3"/>
<path d="M632.1 465.5 L634.5 457.6 L631.9 473.6 L637.6 464.1 L636.1 471.0 L635.1 477.2 L640.9 459.1 L634.5 484.6 L642.3 464.9 L641.4 469.3 L639.0 479.2 L639.2 485.0 L644.0 473.6 L647.2 465.0 L643.6 478.5 L649.8 458.0 L647.1 470.4 L644.5 488.0 L647.1 483.2 L648.9 478.8 L653.2 466.6 L652.9 472.0 L651.5 483.0 L650.3 488.1"/>
<path d="M638.1 489.3 L638.1 499.8"/>
<path d="M639.9 489.3 L639.9 499.8"/>
<path d="M659.0 487.1 L657.5 493.1 L658.3 498.5 L657.1 503.5 L661.4 490.7 L664.8 485.1 L663.6 495.5 L665.0 501.8 L669.3 491.5 L669.6 506.1"/>
<path d="M665.3 463.1 L664.7 467.7 L668.5 455.3 L664.6 474.1 L669.0 461.0 L663.9 480.0 L668.4 470.6 L669.3 477.3 L669.4 481.7"/>
<path d="M657.0 459.5 L657.0 492.3"/>
<path d="M659.3 459.5 L659.3 492.3"/>
<path d="M671.9 456.8 L678.0 457.1 L681.8 459.4 L687.3 457.2 L691.7 457.9 L695.9 456.0"/>
<path d="M662.3 473.7 L666.0 471.3"/>
<path d="M669.7 476.8 L667.2 488.3 L672.2 480.4 L671.5 488.5 L677.3 479.7 L677.1 484.2 L677.7 489.7 L682.3 483.3 L685.0 476.5 L681.8 488.0"/>
<path d="M689.9 458.0 L692.1 487.8 L695.1 504.3"/>
<path d="M680.9 462.5 L680.1 470.7 L674.9 484.9"/>
<path d="M713.7 461.5 L716.0 455.0 L721.1 455.3 L718.8 463.3 L722.3 459.8 L725.5 456.9 L726.3 461.7"/>
<path d="M740.6 455.0 C740.7 457.0 740.8 463.2 741.3 466.9 C741.8 470.7 742.3 473.3 743.6 477.4 C744.8 481.5 747.2 486.1 748.8 491.6 C750.4 497.0 752.5 507.1 753.3 510.2"/>
<path d="M748.1 455.0 C747.9 457.5 747.1 463.8 747.3 469.9 C747.6 476.0 749.2 488.0 749.6 491.6"/>
<path d="M757.0 455.0 C756.9 458.2 756.5 468.2 756.3 474.4 C756.0 480.6 756.0 486.3 755.5 492.3 C755.0 498.3 753.7 507.2 753.3 510.2"/>
<path d="M764.5 455.0 L764.5 465.4 L761.5 505.0"/>
<path d="M777.9 464.0 C777.2 466.4 775.2 474.2 773.4 478.9 C771.7 483.6 769.5 488.0 767.5 492.3 C765.5 496.7 762.5 502.9 761.5 505.0"/>
<path d="M783.9 461.7 C782.4 464.6 777.2 476.8 774.9 478.9 C772.7 481.0 771.2 475.1 770.4 474.4"/>
<path d="M779.4 487.1 L767.5 511.7"/>
<path d="M716.7 462.5 C718.1 464.3 721.4 470.7 724.9 473.7 C728.4 476.6 734.5 475.5 737.6 480.4 C740.7 485.2 742.6 499.0 743.6 502.8"/>
<path d="M725.7 462.5 C726.8 463.7 730.4 466.9 732.4 469.9 C734.4 472.9 736.7 478.6 737.6 480.4"/>
<path d="M809.3 466.9 C809.4 469.7 809.1 477.1 810.0 483.4 C810.9 489.6 813.9 498.5 814.5 504.3 C815.1 510.0 814.5 514.1 813.7 517.7 C813.0 521.3 810.6 524.5 810.0 525.9"/>
<path d="M805.5 464.7 C803.7 465.3 796.9 467.1 794.3 468.4 C791.7 469.8 792.3 469.8 789.9 472.9 C787.4 476.0 781.1 484.7 779.4 487.1"/>
<path d="M800.3 475.9 C798.8 477.4 794.8 482.9 791.3 484.9 C787.9 486.8 781.4 487.3 779.4 487.8"/>
<path d="M800.3 456.5 C801.8 456.6 806.8 457.5 809.3 457.2 C811.7 457.0 814.2 455.4 815.2 455.0"/>
<path d="M729.4 494.6 C730.8 494.9 735.2 495.4 737.6 496.8 C740.0 498.2 742.6 501.8 743.6 502.8"/>
<path d="M763.2 513.4 L764.0 519.0 L769.8 514.0 L769.8 518.5 L774.4 512.3 L774.4 516.7 L774.5 521.9"/>
<path d="M777.9 514.7 C778.9 515.4 782.0 516.8 783.9 519.2 C785.7 521.5 786.4 527.4 789.1 528.9 C791.8 530.4 796.8 528.6 800.3 528.1 C803.8 527.6 808.4 526.3 810.0 525.9"/>
<path d="M791.3 544.6 C792.5 544.1 795.2 542.3 798.1 541.6 C800.9 540.9 804.9 540.5 808.5 540.4 C812.2 540.2 818.1 540.7 820.0 540.8"/>
<path d="M824.5 455.0 C824.5 459.7 824.2 476.8 824.5 483.4 C824.7 489.9 825.2 489.4 826.0 494.1 C826.7 498.8 828.8 506.5 829.0 511.4 C829.2 516.3 828.3 520.0 827.2 523.7 C826.0 527.4 823.6 530.8 821.9 533.7 C820.3 536.5 818.2 539.6 817.5 540.8"/>
<path d="M804.3 464.3 L808.2 462.5 L809.5 466.8"/>
<path d="M794.9 473.2 L794.1 477.6 L799.2 470.8 L798.4 478.8 L801.7 474.8"/>
<path d="M805.8 464.7 C803.1 466.1 793.9 469.3 789.4 472.9 C784.9 476.5 780.7 484.1 779.0 486.3"/>
<path d="M802.1 476.6 C800.2 477.9 794.8 482.2 790.9 484.1 C787.0 486.0 780.9 487.2 779.0 487.8"/>
<path d="M542.8 553.3 L602.5 553.3"/>
<path d="M544.3 556.7 L568.2 556.7"/>
<path d="M580.1 563.7 L602.8 563.7"/>
<path d="M575.7 560.4 L602.8 562.2"/>
<path d="M553.3 564.2 L563.0 581.3"/>
<path d="M602.8 550.0 L602.8 563.7"/>
<path d="M604.8 550.0 L604.3 563.7"/>
<path d="M574.9 570.1 C576.0 571.4 578.9 575.4 581.6 577.6 C584.4 579.9 589.7 582.6 591.3 583.6"/>
<path d="M575.7 573.9 C576.7 574.9 579.2 578.0 581.6 579.9 C584.1 581.7 589.1 584.2 590.6 585.1"/>
<path d="M532.4 590.3 C531.8 592.2 529.9 597.8 528.7 601.5 C527.4 605.2 525.3 607.4 524.9 612.4 C524.5 617.4 524.4 626.9 526.1 631.3 C527.9 635.7 531.7 637.0 535.4 638.8 C539.0 640.6 544.1 641.4 548.1 642.2 C552.0 643.1 557.4 643.5 559.3 643.7"/>
<path d="M559.3 643.7 L563.0 632.8"/>
<path d="M563.0 632.8 C564.7 633.9 569.4 637.2 573.4 639.3 C577.5 641.3 585.0 644.1 587.3 645.1"/>
<path d="M587.3 645.1 L592.8 630.6 L595.8 630.6"/>
<path d="M595.8 630.6 C597.4 632.0 601.9 637.2 605.5 639.3 C609.2 641.3 613.7 642.8 617.8 642.8 C621.9 642.8 627.0 641.0 630.1 639.3 C633.3 637.5 635.1 634.2 636.9 632.1 C638.6 630.0 640.0 627.7 640.6 626.9"/>
<path d="M640.6 626.9 C641.7 627.5 643.7 629.2 647.3 630.6 C651.0 632.0 658.8 634.6 662.5 635.4 C666.3 636.1 668.8 635.1 670.0 635.1"/>
<path d="M545.8 594.8 C545.2 596.8 543.3 602.9 542.1 606.7 C540.8 610.6 537.2 614.3 538.4 617.9 C539.5 621.5 545.3 628.7 548.8 628.4 C552.3 628.0 554.2 616.1 559.3 615.7 C564.3 615.2 573.6 626.3 579.0 625.8 C584.3 625.3 587.2 613.8 591.3 612.7 C595.5 611.5 600.0 616.6 603.7 619.0 C607.5 621.3 610.2 626.0 613.7 626.9 C617.3 627.7 620.6 626.5 624.9 624.2 C629.3 621.8 634.9 613.7 639.9 612.7 C644.8 611.6 650.0 618.2 654.8 617.9 C659.5 617.7 666.0 612.3 668.2 611.2"/>
<path d="M545.8 594.8 C550.8 594.5 566.7 593.2 575.7 593.3 C584.7 593.3 590.1 594.1 599.9 595.1 C609.6 596.1 622.5 597.9 633.9 599.3 C645.3 600.6 662.5 602.4 668.2 603.0"/>
<path d="M663.0 635.4 C664.5 635.0 669.3 634.3 671.9 632.8 C674.6 631.4 677.1 630.0 679.1 626.9 C681.1 623.8 683.3 616.3 684.2 614.2"/>
<path d="M684.2 614.2 C685.1 614.7 686.7 616.5 689.6 617.5 C692.4 618.4 698.5 619.4 701.0 619.9 C703.6 620.3 701.5 620.8 704.8 620.4 C708.0 620.1 716.2 619.5 720.4 617.9 C724.7 616.4 727.5 613.9 730.1 611.2 C732.8 608.5 733.4 605.7 736.1 601.9 C738.9 598.2 744.8 590.7 746.6 588.5"/>
<path d="M746.6 588.5 L761.2 589.1 L773.4 588.1"/>
<path d="M670.4 603.0 C670.4 604.3 670.9 608.3 670.4 610.9 C670.0 613.5 669.2 616.9 667.5 618.7 C665.7 620.4 661.2 621.1 660.0 621.6"/>
<path d="M692.1 597.8 C692.7 598.8 694.2 602.3 695.8 603.7 C697.4 605.2 698.8 606.3 701.8 606.4 C704.8 606.5 710.4 605.9 713.7 604.5 C717.1 603.0 719.6 600.8 721.9 597.8 C724.3 594.7 726.9 588.2 727.9 586.3"/>
<path d="M719.7 586.6 L727.9 586.3"/>
<path d="M622.8 510.7 L621.3 513.4 L619.9 516.2 L618.5 518.9 L617.3 521.7 L616.2 524.4 L615.1 527.1 L614.2 529.9 L613.4 532.6 L612.7 535.3 L612.1 538.1 L611.6 540.8 L611.2 543.5 L610.9 546.3 L610.7 549.0 L610.6 551.8 L610.7 554.5 L610.8 557.2 L611.0 560.0 L611.4 562.7 L611.8 565.4 L612.4 568.2 L613.0 570.9 L613.8 573.6 L614.6 576.4 L615.6 579.1 L616.7 581.9 L617.8 584.6 L619.1 587.3 L620.5 590.1 L622.0 592.8"/>
<path d="M629.1 520.8 L628.0 523.2 L626.9 525.7 L625.9 528.2 L625.0 530.6 L624.2 533.1 L623.5 535.5 L622.8 538.0 L622.3 540.4 L621.8 542.9 L621.5 545.3 L621.2 547.8 L621.0 550.3 L620.9 552.7 L620.9 555.2 L621.0 557.6 L621.2 560.1 L621.4 562.5 L621.8 565.0 L622.2 567.5 L622.7 569.9 L623.3 572.4 L624.0 574.8 L624.8 577.3 L625.7 579.7 L626.7 582.2 L627.7 584.7 L628.9 587.1 L630.1 589.6 L631.4 592.0 L632.9 594.5"/>
<path d="M642.6 509.6 L642.0 512.3 L641.5 515.1 L640.9 517.8 L640.5 520.5 L640.0 523.3 L639.6 526.0 L639.2 528.7 L638.8 531.5 L638.5 534.2 L638.2 537.0 L638.0 539.7 L637.8 542.4 L637.6 545.2 L637.5 547.9 L637.4 550.6 L637.3 553.4 L637.3 556.1 L637.3 558.8 L637.4 561.6 L637.5 564.3 L637.6 567.1 L637.7 569.8 L637.9 572.5 L638.2 575.3 L638.4 578.0 L638.7 580.7 L639.1 583.5 L639.4 586.2 L639.8 588.9 L640.3 591.7"/>
<path d="M618.9 516.7 C619.4 516.8 620.8 516.5 622.4 517.3 C624.0 518.1 627.2 520.9 628.2 521.7"/>
<path d="M616.4 524.1 C617.0 524.0 618.4 523.0 620.0 523.4 C621.6 523.8 624.9 526.0 625.8 526.5"/>
<path d="M614.3 530.6 C614.9 530.5 616.5 529.3 618.2 529.6 C619.9 529.9 623.3 531.8 624.4 532.3"/>
<path d="M611.5 538.9 C612.2 538.6 613.8 536.8 615.6 536.7 C617.3 536.6 620.9 538.0 622.0 538.3"/>
<path d="M611.9 544.7 C612.5 544.5 614.0 543.3 615.7 543.5 C617.3 543.7 620.7 545.6 621.7 546.1"/>
<path d="M610.6 552.1 C611.3 551.7 613.0 550.1 614.7 550.1 C616.5 550.0 620.1 551.5 621.1 551.8"/>
<path d="M610.9 558.2 C611.5 557.9 612.9 556.4 614.4 556.4 C616.0 556.4 619.3 558.0 620.2 558.3"/>
<path d="M611.7 566.3 C612.4 565.8 614.1 563.6 615.9 563.2 C617.7 562.8 621.3 563.8 622.4 563.9"/>
<path d="M613.2 573.0 C613.8 572.4 615.3 570.1 616.8 569.6 C618.4 569.0 621.7 569.8 622.7 569.8"/>
<path d="M616.3 578.5 C616.8 578.0 617.9 575.8 619.2 575.4 C620.6 574.9 623.5 575.9 624.4 576.0"/>
<path d="M617.6 585.2 C618.1 584.7 619.3 582.6 620.6 582.3 C622.0 581.9 625.0 583.0 625.9 583.1"/>
<path d="M621.3 593.6 C621.8 592.9 623.1 590.2 624.6 589.4 C626.1 588.7 629.3 589.1 630.2 589.1"/>
<path d="M625.8 526.5 C627.1 524.7 630.5 518.7 633.4 515.7 C636.3 512.8 641.6 509.9 643.2 508.7"/>
<path d="M624.4 532.3 C625.6 530.6 628.9 524.8 631.7 522.0 C634.5 519.2 639.7 516.6 641.3 515.5"/>
<path d="M622.0 538.3 C623.3 536.8 626.9 531.6 630.0 529.1 C633.0 526.7 638.5 524.6 640.2 523.7"/>
<path d="M621.7 546.1 C623.0 544.5 626.3 539.2 629.1 536.6 C631.9 534.1 637.1 531.9 638.7 530.9"/>
<path d="M621.1 551.8 C622.3 550.3 625.5 545.1 628.3 542.7 C631.0 540.2 636.1 538.1 637.6 537.2"/>
<path d="M620.2 558.3 C621.6 556.8 625.2 551.8 628.3 549.4 C631.3 547.1 636.8 545.2 638.5 544.3"/>
<path d="M622.4 563.9 C623.5 562.6 626.5 557.9 629.1 555.8 C631.7 553.7 636.5 552.1 638.0 551.4"/>
<path d="M622.7 569.8 C623.7 568.4 626.5 563.6 628.9 561.4 C631.4 559.2 636.0 557.5 637.4 556.7"/>
<path d="M624.4 576.0 C625.2 574.7 627.3 570.5 629.4 568.7 C631.4 566.9 635.4 565.8 636.6 565.2"/>
<path d="M625.9 583.1 C626.8 581.9 629.1 577.6 631.2 575.7 C633.3 573.9 637.5 572.7 638.7 572.1"/>
<path d="M630.2 589.1 C630.7 587.8 631.8 583.4 633.1 581.6 C634.5 579.7 637.4 578.4 638.3 577.8"/>
<path d="M633.8 594.9 C634.0 593.8 634.2 589.9 635.0 588.3 C635.9 586.7 638.0 586.0 638.6 585.5"/>
<path d="M655.5 516.1 L654.0 518.8 L652.6 521.5 L651.3 524.2 L650.1 526.9 L649.0 529.6 L648.1 532.4 L647.2 535.1 L646.5 537.8 L646.0 540.5 L645.5 543.2 L645.1 545.9 L644.9 548.6 L644.8 551.3 L644.8 554.0 L644.9 556.7 L645.2 559.4 L645.5 562.1 L646.0 564.8 L646.6 567.5 L647.3 570.2 L648.2 572.9 L649.1 575.6 L650.2 578.3 L651.4 581.0 L652.7 583.8 L654.1 586.5 L655.7 589.2 L657.4 591.9 L659.1 594.6 L661.0 597.3"/>
<path d="M664.7 518.0 L663.4 520.8 L662.2 523.6 L661.1 526.5 L660.1 529.3 L659.2 532.1 L658.4 535.0 L657.8 537.8 L657.2 540.6 L656.7 543.5 L656.4 546.3 L656.1 549.1 L656.0 551.9 L656.0 554.8 L656.0 557.6 L656.2 560.4 L656.5 563.3 L656.9 566.1 L657.4 568.9 L658.0 571.7 L658.7 574.6 L659.6 577.4 L660.5 580.2 L661.5 583.1 L662.7 585.9 L663.9 588.7 L665.3 591.6 L666.7 594.4 L668.3 597.2 L669.9 600.0 L671.7 602.9"/>
<path d="M681.4 519.9 L680.5 522.3 L679.7 524.8 L678.9 527.2 L678.2 529.7 L677.6 532.1 L677.0 534.6 L676.5 537.0 L676.0 539.5 L675.6 542.0 L675.3 544.4 L675.0 546.9 L674.8 549.3 L674.7 551.8 L674.6 554.2 L674.6 556.7 L674.7 559.2 L674.8 561.6 L675.0 564.1 L675.2 566.5 L675.5 569.0 L675.9 571.4 L676.3 573.9 L676.8 576.3 L677.4 578.8 L678.0 581.3 L678.7 583.7 L679.4 586.2 L680.2 588.6 L681.1 591.1 L682.0 593.5"/>
<path d="M652.1 523.7 C652.9 523.0 655.0 520.2 656.9 519.3 C658.9 518.4 662.8 518.7 664.0 518.6"/>
<path d="M648.7 530.1 C649.5 529.4 651.6 526.8 653.7 526.2 C655.8 525.5 659.8 526.0 661.0 526.0"/>
<path d="M646.8 536.1 C647.6 535.5 649.6 533.1 651.6 532.6 C653.5 532.0 657.4 532.8 658.6 532.8"/>
<path d="M645.4 542.3 C646.2 541.8 648.1 539.4 650.0 538.9 C651.9 538.3 655.7 539.1 656.8 539.1"/>
<path d="M645.1 550.4 C645.8 549.8 647.6 547.3 649.3 546.7 C651.1 546.0 654.7 546.7 655.8 546.7"/>
<path d="M644.5 555.9 C645.3 555.4 647.1 553.4 649.0 553.1 C650.8 552.8 654.5 553.9 655.6 554.1"/>
<path d="M646.4 563.0 C647.1 562.4 648.7 560.1 650.4 559.6 C652.2 559.0 655.7 559.8 656.7 559.9"/>
<path d="M647.0 569.4 C647.6 569.0 649.2 567.0 650.9 566.8 C652.5 566.5 656.0 567.7 657.0 567.9"/>
<path d="M650.0 576.8 C650.5 576.3 651.6 574.1 653.0 573.6 C654.4 573.2 657.4 574.1 658.2 574.2"/>
<path d="M651.9 583.4 C652.5 582.9 653.8 580.8 655.4 580.5 C656.9 580.1 660.1 581.1 661.0 581.2"/>
<path d="M656.7 591.1 C657.2 590.6 658.2 588.2 659.6 587.6 C660.9 587.1 663.8 587.8 664.6 587.9"/>
<path d="M661.6 596.7 C661.9 596.4 662.5 594.8 663.5 594.8 C664.5 594.8 666.9 596.3 667.6 596.6"/>
<path d="M661.0 526.0 C662.5 525.1 666.5 521.8 669.9 520.6 C673.2 519.5 679.2 519.3 681.0 519.0"/>
<path d="M658.6 532.8 C660.1 532.0 664.3 528.9 667.7 527.9 C671.2 526.8 677.2 526.9 679.1 526.7"/>
<path d="M656.8 539.1 C658.3 538.2 662.3 534.7 665.6 533.4 C668.9 532.1 674.8 531.7 676.7 531.3"/>
<path d="M655.8 546.7 C657.4 545.7 661.7 542.0 665.2 540.6 C668.7 539.2 674.9 538.6 676.8 538.2"/>
<path d="M655.6 554.1 C657.1 552.9 661.2 548.8 664.5 547.1 C667.9 545.4 673.8 544.4 675.7 543.9"/>
<path d="M656.7 559.9 C658.0 558.8 661.3 554.8 664.2 553.2 C667.1 551.6 672.4 550.7 674.0 550.2"/>
<path d="M657.0 567.9 C658.3 566.6 661.9 562.2 665.0 560.3 C668.0 558.4 673.5 557.1 675.2 556.4"/>
<path d="M658.2 574.2 C659.4 573.0 662.7 568.7 665.5 566.8 C668.3 564.9 673.4 563.7 675.0 563.1"/>
<path d="M661.0 581.2 C662.1 579.9 664.7 575.3 667.1 573.3 C669.6 571.2 674.1 569.8 675.5 569.1"/>
<path d="M664.6 587.9 C665.5 586.5 667.6 581.8 669.7 579.7 C671.8 577.6 675.8 576.0 677.0 575.2"/>
<path d="M667.6 596.6 C668.4 595.1 670.2 589.8 672.1 587.4 C673.9 584.9 677.6 582.8 678.7 581.9"/>
<path d="M670.8 603.3 C671.4 601.6 672.6 596.0 674.1 593.3 C675.5 590.6 678.6 588.2 679.5 587.1"/>
<path d="M700.4 556.2 L700.3 558.1 L700.1 560.0 L699.8 561.7 L699.4 563.4 L698.8 564.8 L698.2 566.0 L697.5 567.0 L696.8 567.8 L696.0 568.2 L695.1 568.4 L694.3 568.2 L693.5 567.8 L692.8 567.0 L692.1 566.0 L691.5 564.8 L690.9 563.4 L690.5 561.7 L690.2 560.0 L690.0 558.1 L689.9 556.2 L690.0 554.3 L690.2 552.5 L690.5 550.7 L690.9 549.1 L691.5 547.7 L692.1 546.4 L692.8 545.4 L693.5 544.7 L694.3 544.3 L695.1 544.1 L696.0 544.3 L696.8 544.7 L697.5 545.4 L698.2 546.4 L698.8 547.7 L699.4 549.1 L699.8 550.7 L700.1 552.5 L700.3 554.3 L700.4 556.2"/>
<path d="M703.2 556.2 L703.1 559.0 L702.8 561.7 L702.3 564.3 L701.6 566.6 L700.8 568.8 L699.9 570.6 L698.8 572.0 L697.6 573.1 L696.4 573.7 L695.1 574.0 L693.9 573.7 L692.7 573.1 L691.5 572.0 L690.4 570.6 L689.5 568.8 L688.7 566.6 L688.0 564.3 L687.5 561.7 L687.2 559.0 L687.1 556.2 L687.2 553.5 L687.5 550.8 L688.0 548.2 L688.7 545.8 L689.5 543.7 L690.4 541.9 L691.5 540.4 L692.7 539.4 L693.9 538.7 L695.1 538.5 L696.4 538.7 L697.6 539.4 L698.8 540.4 L699.9 541.9 L700.8 543.7 L701.6 545.8 L702.3 548.2 L702.8 550.8 L703.1 553.5 L703.2 556.2"/>
<path d="M706.0 556.2 L705.8 559.8 L705.4 563.3 L704.8 566.6 L703.9 569.6 L702.8 572.3 L701.5 574.6 L700.1 576.5 L698.5 577.9 L696.8 578.7 L695.1 579.0 L693.5 578.7 L691.8 577.9 L690.2 576.5 L688.8 574.6 L687.5 572.3 L686.4 569.6 L685.5 566.6 L684.9 563.3 L684.5 559.8 L684.3 556.2 L684.5 552.7 L684.9 549.2 L685.5 545.9 L686.4 542.9 L687.5 540.1 L688.8 537.8 L690.2 536.0 L691.8 534.6 L693.5 533.8 L695.1 533.5 L696.8 533.8 L698.5 534.6 L700.1 536.0 L701.5 537.8 L702.8 540.1 L703.9 542.9 L704.8 545.9 L705.4 549.2 L705.8 552.7 L706.0 556.2"/>
<path d="M709.1 556.2 L709.0 560.6 L708.5 564.9 L707.6 568.9 L706.5 572.7 L705.0 576.0 L703.4 578.9 L701.5 581.2 L699.5 582.8 L697.3 583.9 L695.1 584.2 L693.0 583.9 L690.8 582.8 L688.8 581.2 L686.9 578.9 L685.3 576.0 L683.8 572.7 L682.7 568.9 L681.8 564.9 L681.3 560.6 L681.2 556.2 L681.3 551.9 L681.8 547.6 L682.7 543.5 L683.8 539.8 L685.3 536.4 L686.9 533.6 L688.8 531.3 L690.8 529.6 L693.0 528.6 L695.1 528.2 L697.3 528.6 L699.5 529.6 L701.5 531.3 L703.4 533.6 L705.0 536.4 L706.5 539.8 L707.6 543.5 L708.5 547.6 L709.0 551.9 L709.1 556.2"/>
<path d="M706.3 504.9 C707.7 510.5 712.6 528.6 714.7 538.5 C716.9 548.5 720.3 555.9 719.4 564.6 C718.5 573.3 713.7 585.3 709.1 590.7 C704.6 596.2 695.1 596.2 692.4 597.3"/>
<path d="M761.4 549.7 L761.2 556.3 L760.6 562.7 L759.7 568.8 L758.4 574.4 L756.7 579.4 L754.8 583.7 L752.7 587.1 L750.4 589.6 L748.0 591.2 L745.5 591.7 L743.0 591.2 L740.6 589.6 L738.3 587.1 L736.2 583.7 L734.3 579.4 L732.7 574.4 L731.4 568.8 L730.4 562.7 L729.9 556.3 L729.7 549.7 L729.9 543.1 L730.4 536.7 L731.4 530.6 L732.7 525.0 L734.3 520.0 L736.2 515.7 L738.3 512.3 L740.6 509.8 L743.0 508.2 L745.5 507.7 L748.0 508.2 L750.4 509.8 L752.7 512.3 L754.8 515.7 L756.7 520.0 L758.4 525.0 L759.7 530.6 L760.6 536.7 L761.2 543.1 L761.4 549.7"/>
<path d="M750.3 549.7 C751.2 550.9 753.8 555.0 755.6 556.9 C757.3 558.8 759.9 560.5 760.8 561.3"/>
<path d="M750.1 555.7 C750.9 557.2 753.1 562.3 754.6 564.9 C756.1 567.5 758.4 570.2 759.1 571.3"/>
<path d="M749.6 561.2 C750.2 563.0 751.9 568.7 753.1 571.8 C754.2 574.9 756.0 578.5 756.5 579.9"/>
<path d="M748.9 566.0 C749.2 567.9 750.3 573.8 751.0 577.2 C751.7 580.6 752.8 584.9 753.2 586.4"/>
<path d="M747.9 569.7 C748.0 571.5 748.3 577.3 748.6 580.8 C748.8 584.2 749.2 588.8 749.4 590.4"/>
<path d="M746.8 572.0 C746.6 573.7 746.2 578.9 745.9 582.2 C745.7 585.5 745.4 590.1 745.2 591.7"/>
<path d="M745.5 572.8 C745.1 574.2 744.0 578.5 743.2 581.4 C742.5 584.3 741.5 588.6 741.2 590.1"/>
<path d="M744.3 572.0 C743.7 573.1 741.9 576.2 740.7 578.5 C739.6 580.8 737.9 584.5 737.4 585.7"/>
<path d="M743.1 569.7 C742.4 570.3 740.0 572.0 738.5 573.6 C737.0 575.1 734.8 578.0 734.1 578.9"/>
<path d="M742.2 566.0 C741.3 566.2 738.6 566.4 736.8 567.0 C735.0 567.7 732.5 569.6 731.7 570.1"/>
<path d="M741.4 561.2 C740.4 560.9 737.6 559.6 735.7 559.3 C733.8 559.1 731.1 559.8 730.1 559.9"/>
<path d="M740.9 555.7 C740.0 554.9 737.1 552.1 735.2 551.0 C733.3 549.8 730.6 549.3 729.7 549.0"/>
<path d="M740.8 549.7 C739.9 548.5 737.2 544.4 735.5 542.5 C733.7 540.6 731.1 538.9 730.3 538.1"/>
<path d="M740.9 543.7 C740.2 542.2 737.9 537.1 736.4 534.5 C734.9 531.9 732.7 529.2 731.9 528.1"/>
<path d="M741.4 538.2 C740.8 536.4 739.1 530.7 738.0 527.6 C736.8 524.5 735.1 520.9 734.5 519.5"/>
<path d="M742.2 533.4 C741.8 531.5 740.8 525.6 740.0 522.2 C739.3 518.8 738.2 514.5 737.8 513.0"/>
<path d="M743.1 529.7 C743.0 527.9 742.7 522.1 742.5 518.6 C742.2 515.2 741.8 510.6 741.7 509.0"/>
<path d="M744.3 527.4 C744.4 525.7 744.9 520.5 745.1 517.2 C745.4 513.9 745.7 509.3 745.8 507.7"/>
<path d="M745.5 526.6 C745.9 525.2 747.1 520.9 747.8 518.0 C748.5 515.1 749.5 510.8 749.9 509.4"/>
<path d="M746.8 527.4 C747.3 526.3 749.2 523.2 750.3 520.9 C751.5 518.6 753.1 514.9 753.7 513.7"/>
<path d="M747.9 529.7 C748.7 529.1 751.0 527.4 752.5 525.8 C754.0 524.3 756.2 521.4 756.9 520.5"/>
<path d="M748.9 533.4 C749.8 533.2 752.5 533.0 754.2 532.4 C756.0 531.7 758.5 529.9 759.4 529.4"/>
<path d="M749.6 538.2 C750.6 538.5 753.5 539.8 755.4 540.1 C757.2 540.3 760.0 539.6 760.9 539.5"/>
<path d="M750.1 543.7 C751.1 544.5 753.9 547.3 755.8 548.5 C757.7 549.6 760.5 550.1 761.4 550.4"/>
<path d="M781.3 551.6 L781.3 553.2 L781.1 554.7 L780.9 556.2 L780.6 557.6 L780.1 558.8 L779.7 559.9 L779.1 560.7 L778.5 561.3 L777.9 561.7 L777.2 561.8 L776.6 561.7 L776.0 561.3 L775.4 560.7 L774.8 559.9 L774.3 558.8 L773.9 557.6 L773.6 556.2 L773.3 554.7 L773.2 553.2 L773.1 551.6 L773.2 550.0 L773.3 548.4 L773.6 546.9 L773.9 545.5 L774.3 544.3 L774.8 543.3 L775.4 542.4 L776.0 541.8 L776.6 541.4 L777.2 541.3 L777.9 541.4 L778.5 541.8 L779.1 542.4 L779.7 543.3 L780.1 544.3 L780.6 545.5 L780.9 546.9 L781.1 548.4 L781.3 550.0 L781.3 551.6"/>
<path d="M784.0 551.6 L783.9 554.1 L783.6 556.6 L783.2 559.0 L782.7 561.2 L782.0 563.2 L781.2 564.8 L780.3 566.2 L779.3 567.2 L778.3 567.8 L777.2 568.0 L776.2 567.8 L775.2 567.2 L774.2 566.2 L773.3 564.8 L772.5 563.2 L771.8 561.2 L771.3 559.0 L770.9 556.6 L770.6 554.1 L770.5 551.6 L770.6 549.0 L770.9 546.5 L771.3 544.1 L771.8 541.9 L772.5 540.0 L773.3 538.3 L774.2 536.9 L775.2 536.0 L776.2 535.4 L777.2 535.1 L778.3 535.4 L779.3 536.0 L780.3 536.9 L781.2 538.3 L782.0 540.0 L782.7 541.9 L783.2 544.1 L783.6 546.5 L783.9 549.0 L784.0 551.6"/>
<path d="M786.6 551.6 L786.5 555.0 L786.1 558.4 L785.6 561.6 L784.8 564.5 L783.8 567.1 L782.7 569.4 L781.5 571.2 L780.1 572.5 L778.7 573.3 L777.2 573.6 L775.8 573.3 L774.4 572.5 L773.0 571.2 L771.8 569.4 L770.6 567.1 L769.7 564.5 L768.9 561.6 L768.4 558.4 L768.0 555.0 L767.9 551.6 L768.0 548.1 L768.4 544.8 L768.9 541.6 L769.7 538.6 L770.6 536.0 L771.8 533.8 L773.0 532.0 L774.4 530.6 L775.8 529.8 L777.2 529.6 L778.7 529.8 L780.1 530.6 L781.5 532.0 L782.7 533.8 L783.8 536.0 L784.8 538.6 L785.6 541.6 L786.1 544.8 L786.5 548.1 L786.6 551.6"/>
<path d="M692.4 599.1 C693.9 600.3 696.7 606.4 701.7 606.0 C706.7 605.7 717.8 600.6 722.2 597.3 C726.6 593.9 726.9 587.9 727.8 586.1"/>
<path d="M735.8 601.9 C736.8 600.7 739.6 596.7 741.8 594.5 C744.0 592.3 748.0 589.8 749.3 588.9"/>
<path d="M600.0 595.4 L668.1 602.9"/>
<path d="M665.9 501.2 L669.1 494.8 L676.7 494.4 L675.1 501.2 L684.0 500.8 L692.5 494.0 L691.2 500.2 L699.0 497.5 L697.9 501.8 L704.8 498.0 L707.3 492.9 L709.9 503.0 L714.8 503.0 L719.0 496.6"/>
</g>
<path d="M574.9 265.5h4.5v4.5h-4.5zM574.9 213.7h4.5v4.5h-4.5zM575.2 177.0h4.5v4.5h-4.5zM575.2 177.0h4.5v4.5h-4.5zM596.3 189.1h4.5v4.5h-4.5zM603.3 193.9h4.5v4.5h-4.5zM613.7 201.5h4.5v4.5h-4.5zM632.8 191.6h4.5v4.5h-4.5zM649.5 184.8h4.5v4.5h-4.5zM589.1 223.7h4.5v4.5h-4.5zM589.1 213.7h4.5v4.5h-4.5zM589.1 201.8h4.5v4.5h-4.5zM592.8 203.3h4.5v4.5h-4.5zM592.8 203.3h4.5v4.5h-4.5zM611.5 215.5h4.5v4.5h-4.5zM608.5 218.8h4.5v4.5h-4.5zM602.5 217.8h4.5v4.5h-4.5zM589.1 223.7h4.5v4.5h-4.5zM620.7 223.3h4.5v4.5h-4.5zM655.5 229.7h4.5v4.5h-4.5zM717.8 231.2h4.5v4.5h-4.5zM622.8 213.7h4.5v4.5h-4.5zM626.4 213.7h4.5v4.5h-4.5zM627.9 213.3h4.5v4.5h-4.5zM640.1 203.6h4.5v4.5h-4.5zM649.2 198.8h4.5v4.5h-4.5zM691.3 199.5h4.5v4.5h-4.5zM692.8 199.1h4.5v4.5h-4.5zM627.9 213.4h4.5v4.5h-4.5zM640.7 211.9h4.5v4.5h-4.5zM659.7 211.9h4.5v4.5h-4.5zM674.2 213.7h4.5v4.5h-4.5zM683.6 215.5h4.5v4.5h-4.5zM689.8 218.5h4.5v4.5h-4.5zM679.4 202.5h4.5v4.5h-4.5zM674.9 206.6h4.5v4.5h-4.5zM679.7 207.6h4.5v4.5h-4.5zM713.7 208.0h4.5v4.5h-4.5zM713.7 210.3h4.5v4.5h-4.5zM716.0 212.5h4.5v4.5h-4.5zM689.8 218.5h4.5v4.5h-4.5zM706.0 215.8h4.5v4.5h-4.5zM717.8 214.0h4.5v4.5h-4.5zM689.3 216.3h4.5v4.5h-4.5zM690.0 221.0h4.5v4.5h-4.5zM694.1 215.5h4.5v4.5h-4.5zM674.9 227.5h4.5v4.5h-4.5zM677.2 227.8h4.5v4.5h-4.5zM679.4 228.2h4.5v4.5h-4.5zM681.6 224.5h4.5v4.5h-4.5zM683.6 222.2h4.5v4.5h-4.5zM589.1 243.9h4.5v4.5h-4.5zM607.0 243.9h4.5v4.5h-4.5zM607.0 243.9h4.5v4.5h-4.5zM638.6 245.4h4.5v4.5h-4.5zM689.1 246.6h4.5v4.5h-4.5zM589.1 249.5h4.5v4.5h-4.5zM589.1 253.1h4.5v4.5h-4.5zM595.8 261.5h4.5v4.5h-4.5zM623.4 256.1h4.5v4.5h-4.5zM642.1 253.7h4.5v4.5h-4.5zM638.0 251.3h4.5v4.5h-4.5zM642.6 249.2h4.5v4.5h-4.5zM635.5 254.8h4.5v4.5h-4.5zM646.9 254.0h4.5v4.5h-4.5zM648.8 257.8h4.5v4.5h-4.5zM651.5 261.8h4.5v4.5h-4.5zM651.0 264.8h4.5v4.5h-4.5zM642.5 263.7h4.5v4.5h-4.5zM662.2 251.6h4.5v4.5h-4.5zM667.5 252.1h4.5v4.5h-4.5zM667.5 255.8h4.5v4.5h-4.5zM673.9 252.5h4.5v4.5h-4.5zM677.2 256.1h4.5v4.5h-4.5zM687.8 245.6h4.5v4.5h-4.5zM686.2 254.5h4.5v4.5h-4.5zM694.2 248.6h4.5v4.5h-4.5zM694.1 256.9h4.5v4.5h-4.5zM689.0 258.3h4.5v4.5h-4.5zM690.2 253.1h4.5v4.5h-4.5zM696.8 252.3h4.5v4.5h-4.5zM686.2 250.1h4.5v4.5h-4.5zM710.5 246.8h4.5v4.5h-4.5zM706.9 243.7h4.5v4.5h-4.5zM708.1 239.6h4.5v4.5h-4.5zM712.4 241.3h4.5v4.5h-4.5zM705.7 248.2h4.5v4.5h-4.5zM710.7 253.7h4.5v4.5h-4.5zM709.2 260.4h4.5v4.5h-4.5zM712.6 263.2h4.5v4.5h-4.5zM712.6 249.6h4.5v4.5h-4.5zM707.9 249.8h4.5v4.5h-4.5zM700.3 252.1h4.5v4.5h-4.5zM704.8 252.8h4.5v4.5h-4.5zM716.0 245.4h4.5v4.5h-4.5zM741.3 184.6h4.5v4.5h-4.5zM773.4 184.6h4.5v4.5h-4.5zM805.5 184.6h4.5v4.5h-4.5zM813.3 184.9h4.5v4.5h-4.5zM813.3 184.9h4.5v4.5h-4.5zM818.2 191.6h4.5v4.5h-4.5zM822.4 212.5h4.5v4.5h-4.5zM822.4 212.5h4.5v4.5h-4.5zM821.9 243.1h4.5v4.5h-4.5zM821.9 261.0h4.5v4.5h-4.5zM728.6 199.1h4.5v4.5h-4.5zM805.5 199.1h4.5v4.5h-4.5zM808.0 205.1h4.5v4.5h-4.5zM728.6 199.1h4.5v4.5h-4.5zM732.4 202.4h4.5v4.5h-4.5zM739.1 204.0h4.5v4.5h-4.5zM756.3 201.6h4.5v4.5h-4.5zM778.9 201.6h4.5v4.5h-4.5zM797.3 204.8h4.5v4.5h-4.5zM808.0 205.1h4.5v4.5h-4.5zM713.7 207.8h4.5v4.5h-4.5zM713.7 211.0h4.5v4.5h-4.5zM719.7 208.8h4.5v4.5h-4.5zM726.9 208.0h4.5v4.5h-4.5zM715.2 213.7h4.5v4.5h-4.5zM726.9 214.8h4.5v4.5h-4.5zM730.1 215.2h4.5v4.5h-4.5zM807.5 214.3h4.5v4.5h-4.5zM807.5 225.7h4.5v4.5h-4.5zM807.5 225.7h4.5v4.5h-4.5zM783.6 220.0h4.5v4.5h-4.5zM741.3 226.3h4.5v4.5h-4.5zM783.6 225.2h4.5v4.5h-4.5zM746.3 217.0h4.5v4.5h-4.5zM748.8 220.7h4.5v4.5h-4.5zM754.3 220.0h4.5v4.5h-4.5zM726.9 221.2h4.5v4.5h-4.5zM733.9 223.7h4.5v4.5h-4.5zM737.6 224.5h4.5v4.5h-4.5zM724.3 233.7h4.5v4.5h-4.5zM728.8 237.2h4.5v4.5h-4.5zM725.4 228.4h4.5v4.5h-4.5zM731.0 232.3h4.5v4.5h-4.5zM730.1 227.9h4.5v4.5h-4.5zM722.8 239.5h4.5v4.5h-4.5zM727.1 241.5h4.5v4.5h-4.5zM712.2 259.5h4.5v4.5h-4.5zM710.1 238.9h4.5v4.5h-4.5zM712.0 253.3h4.5v4.5h-4.5zM710.3 246.9h4.5v4.5h-4.5zM708.1 250.7h4.5v4.5h-4.5zM707.8 258.0h4.5v4.5h-4.5zM712.4 243.1h4.5v4.5h-4.5zM708.4 262.9h4.5v4.5h-4.5zM716.7 244.6h4.5v4.5h-4.5zM716.7 247.6h4.5v4.5h-4.5zM730.1 250.3h4.5v4.5h-4.5zM740.9 239.0h4.5v4.5h-4.5zM737.6 242.3h4.5v4.5h-4.5zM743.9 242.6h4.5v4.5h-4.5zM751.3 236.7h4.5v4.5h-4.5zM760.1 245.6h4.5v4.5h-4.5zM764.5 241.8h4.5v4.5h-4.5zM765.7 246.6h4.5v4.5h-4.5zM769.6 243.0h4.5v4.5h-4.5zM770.1 247.2h4.5v4.5h-4.5zM758.3 241.5h4.5v4.5h-4.5zM759.2 253.6h4.5v4.5h-4.5zM763.0 261.5h4.5v4.5h-4.5zM766.7 257.3h4.5v4.5h-4.5zM768.2 258.8h4.5v4.5h-4.5zM781.3 239.8h4.5v4.5h-4.5zM783.2 244.2h4.5v4.5h-4.5zM782.2 259.9h4.5v4.5h-4.5zM777.3 258.6h4.5v4.5h-4.5zM785.4 256.4h4.5v4.5h-4.5zM793.3 263.1h4.5v4.5h-4.5zM790.9 257.8h4.5v4.5h-4.5zM795.4 259.0h4.5v4.5h-4.5zM793.6 250.6h4.5v4.5h-4.5zM796.6 252.8h4.5v4.5h-4.5zM803.3 253.6h4.5v4.5h-4.5zM807.0 249.1h4.5v4.5h-4.5zM809.2 247.9h4.5v4.5h-4.5zM813.3 260.6h4.5v4.5h-4.5zM821.9 261.0h4.5v4.5h-4.5zM827.9 261.0h4.5v4.5h-4.5zM844.3 265.5h4.5v4.5h-4.5zM848.0 266.3h4.5v4.5h-4.5zM812.2 267.0h4.5v4.5h-4.5zM824.9 267.0h4.5v4.5h-4.5zM821.9 261.0h4.5v4.5h-4.5zM827.9 261.0h4.5v4.5h-4.5zM844.3 265.5h4.5v4.5h-4.5zM848.0 266.3h4.5v4.5h-4.5zM574.9 265.4h4.5v4.5h-4.5zM594.0 276.9h4.5v4.5h-4.5zM592.8 282.2h4.5v4.5h-4.5zM589.1 289.6h4.5v4.5h-4.5zM589.1 295.6h4.5v4.5h-4.5zM599.9 286.9h4.5v4.5h-4.5zM604.7 282.3h4.5v4.5h-4.5zM597.4 283.0h4.5v4.5h-4.5zM604.3 287.2h4.5v4.5h-4.5zM609.7 279.2h4.5v4.5h-4.5zM613.7 283.6h4.5v4.5h-4.5zM621.2 282.5h4.5v4.5h-4.5zM624.9 282.5h4.5v4.5h-4.5zM628.2 282.2h4.5v4.5h-4.5zM624.9 276.5h4.5v4.5h-4.5zM630.1 275.3h4.5v4.5h-4.5zM633.9 271.7h4.5v4.5h-4.5zM642.8 264.2h4.5v4.5h-4.5zM651.0 264.2h4.5v4.5h-4.5zM641.1 279.2h4.5v4.5h-4.5zM642.0 283.5h4.5v4.5h-4.5zM636.5 281.0h4.5v4.5h-4.5zM636.5 276.5h4.5v4.5h-4.5zM636.3 285.8h4.5v4.5h-4.5zM644.8 276.5h4.5v4.5h-4.5zM656.3 288.4h4.5v4.5h-4.5zM660.0 289.0h4.5v4.5h-4.5zM665.5 289.6h4.5v4.5h-4.5zM668.2 289.9h4.5v4.5h-4.5zM664.0 294.8h4.5v4.5h-4.5zM641.3 298.1h4.5v4.5h-4.5zM673.4 276.4h4.5v4.5h-4.5zM671.6 269.4h4.5v4.5h-4.5zM666.0 272.0h4.5v4.5h-4.5zM664.6 267.8h4.5v4.5h-4.5zM676.1 268.4h4.5v4.5h-4.5zM664.8 277.3h4.5v4.5h-4.5zM677.6 273.8h4.5v4.5h-4.5zM669.5 278.7h4.5v4.5h-4.5zM677.7 278.2h4.5v4.5h-4.5zM691.3 271.7h4.5v4.5h-4.5zM704.8 272.9h4.5v4.5h-4.5zM708.2 273.5h4.5v4.5h-4.5zM707.0 278.4h4.5v4.5h-4.5zM708.5 263.5h4.5v4.5h-4.5zM686.6 292.2h4.5v4.5h-4.5zM690.4 294.4h4.5v4.5h-4.5zM697.4 286.0h4.5v4.5h-4.5zM701.9 282.6h4.5v4.5h-4.5zM684.2 282.6h4.5v4.5h-4.5zM705.6 290.1h4.5v4.5h-4.5zM702.3 296.9h4.5v4.5h-4.5zM679.9 295.6h4.5v4.5h-4.5zM692.0 286.3h4.5v4.5h-4.5zM682.8 290.1h4.5v4.5h-4.5zM679.5 286.7h4.5v4.5h-4.5zM688.8 283.3h4.5v4.5h-4.5zM693.8 291.7h4.5v4.5h-4.5zM698.8 293.9h4.5v4.5h-4.5zM683.9 297.1h4.5v4.5h-4.5zM677.4 290.8h4.5v4.5h-4.5zM706.6 284.4h4.5v4.5h-4.5zM694.5 297.0h4.5v4.5h-4.5zM677.7 282.5h4.5v4.5h-4.5zM686.1 286.7h4.5v4.5h-4.5zM711.8 283.1h4.5v4.5h-4.5zM712.3 295.2h4.5v4.5h-4.5zM707.2 284.0h4.5v4.5h-4.5zM707.8 295.0h4.5v4.5h-4.5zM716.7 283.6h4.5v4.5h-4.5zM717.2 296.1h4.5v4.5h-4.5zM715.4 288.4h4.5v4.5h-4.5zM709.7 290.6h4.5v4.5h-4.5zM711.5 303.8h4.5v4.5h-4.5zM703.3 306.8h4.5v4.5h-4.5zM705.5 307.5h4.5v4.5h-4.5zM668.9 306.0h4.5v4.5h-4.5zM671.2 305.7h4.5v4.5h-4.5zM612.5 321.3h4.5v4.5h-4.5zM603.8 310.0h4.5v4.5h-4.5zM614.4 317.2h4.5v4.5h-4.5zM621.7 309.8h4.5v4.5h-4.5zM620.4 314.5h4.5v4.5h-4.5zM617.5 317.6h4.5v4.5h-4.5zM607.3 321.3h4.5v4.5h-4.5zM591.1 306.2h4.5v4.5h-4.5zM604.7 320.2h4.5v4.5h-4.5zM594.6 318.1h4.5v4.5h-4.5zM591.3 307.8h4.5v4.5h-4.5zM603.9 317.7h4.5v4.5h-4.5zM605.9 321.0h4.5v4.5h-4.5zM611.6 311.1h4.5v4.5h-4.5zM605.8 310.5h4.5v4.5h-4.5zM617.6 310.1h4.5v4.5h-4.5zM594.4 305.7h4.5v4.5h-4.5zM596.8 319.0h4.5v4.5h-4.5zM611.4 307.9h4.5v4.5h-4.5zM602.5 321.6h4.5v4.5h-4.5zM620.6 308.6h4.5v4.5h-4.5zM620.0 304.9h4.5v4.5h-4.5zM621.9 311.0h4.5v4.5h-4.5zM620.4 304.3h4.5v4.5h-4.5zM611.5 323.3h4.5v4.5h-4.5zM615.9 315.9h4.5v4.5h-4.5zM593.6 305.5h4.5v4.5h-4.5zM620.0 323.0h4.5v4.5h-4.5zM595.8 308.2h4.5v4.5h-4.5zM608.9 308.9h4.5v4.5h-4.5zM595.5 320.2h4.5v4.5h-4.5zM592.1 314.4h4.5v4.5h-4.5zM602.0 311.9h4.5v4.5h-4.5zM617.6 320.0h4.5v4.5h-4.5zM614.4 303.2h4.5v4.5h-4.5zM615.6 320.8h4.5v4.5h-4.5zM588.4 304.5h4.5v4.5h-4.5zM612.9 322.2h4.5v4.5h-4.5zM606.5 321.9h4.5v4.5h-4.5zM591.3 305.7h4.5v4.5h-4.5zM615.9 320.9h4.5v4.5h-4.5zM595.8 313.4h4.5v4.5h-4.5zM603.1 318.1h4.5v4.5h-4.5zM601.7 308.4h4.5v4.5h-4.5zM613.9 318.4h4.5v4.5h-4.5zM600.5 317.3h4.5v4.5h-4.5zM597.2 312.0h4.5v4.5h-4.5zM594.6 308.1h4.5v4.5h-4.5zM602.4 303.2h4.5v4.5h-4.5zM598.8 308.8h4.5v4.5h-4.5zM599.3 312.4h4.5v4.5h-4.5zM618.6 322.4h4.5v4.5h-4.5zM598.3 303.7h4.5v4.5h-4.5zM591.3 320.1h4.5v4.5h-4.5zM613.9 319.4h4.5v4.5h-4.5zM618.8 312.4h4.5v4.5h-4.5zM594.1 302.2h4.5v4.5h-4.5zM601.8 318.6h4.5v4.5h-4.5zM591.2 309.8h4.5v4.5h-4.5zM591.1 304.6h4.5v4.5h-4.5zM606.9 316.6h4.5v4.5h-4.5zM620.0 310.7h4.5v4.5h-4.5zM596.1 301.8h4.5v4.5h-4.5zM594.7 301.0h4.5v4.5h-4.5zM588.4 302.0h4.5v4.5h-4.5zM606.4 312.1h4.5v4.5h-4.5zM618.8 314.3h4.5v4.5h-4.5zM591.3 303.1h4.5v4.5h-4.5zM611.9 324.6h4.5v4.5h-4.5zM613.5 308.0h4.5v4.5h-4.5zM599.9 310.9h4.5v4.5h-4.5zM602.9 307.7h4.5v4.5h-4.5zM628.2 306.2h4.5v4.5h-4.5zM657.4 319.2h4.5v4.5h-4.5zM661.3 313.6h4.5v4.5h-4.5zM649.6 310.4h4.5v4.5h-4.5zM626.5 305.8h4.5v4.5h-4.5zM635.4 314.3h4.5v4.5h-4.5zM643.2 309.9h4.5v4.5h-4.5zM641.3 312.7h4.5v4.5h-4.5zM629.8 310.3h4.5v4.5h-4.5zM659.4 314.1h4.5v4.5h-4.5zM661.8 317.3h4.5v4.5h-4.5zM627.1 314.3h4.5v4.5h-4.5zM649.8 312.8h4.5v4.5h-4.5zM629.5 312.2h4.5v4.5h-4.5zM629.6 310.4h4.5v4.5h-4.5zM628.0 309.8h4.5v4.5h-4.5zM660.9 315.8h4.5v4.5h-4.5zM642.6 313.6h4.5v4.5h-4.5zM648.3 314.2h4.5v4.5h-4.5zM633.4 308.6h4.5v4.5h-4.5zM646.4 317.2h4.5v4.5h-4.5zM657.1 314.2h4.5v4.5h-4.5zM633.8 312.1h4.5v4.5h-4.5zM623.8 310.0h4.5v4.5h-4.5zM653.5 318.6h4.5v4.5h-4.5zM625.6 307.5h4.5v4.5h-4.5zM641.3 313.3h4.5v4.5h-4.5zM660.8 310.7h4.5v4.5h-4.5zM627.1 310.3h4.5v4.5h-4.5zM653.9 309.1h4.5v4.5h-4.5zM637.3 313.8h4.5v4.5h-4.5zM638.9 308.9h4.5v4.5h-4.5zM624.8 312.5h4.5v4.5h-4.5zM642.5 312.8h4.5v4.5h-4.5zM649.5 316.0h4.5v4.5h-4.5zM638.1 310.6h4.5v4.5h-4.5zM659.0 310.2h4.5v4.5h-4.5zM653.2 313.4h4.5v4.5h-4.5zM643.4 310.1h4.5v4.5h-4.5zM659.9 312.7h4.5v4.5h-4.5zM634.8 307.3h4.5v4.5h-4.5zM657.9 317.8h4.5v4.5h-4.5zM624.0 306.8h4.5v4.5h-4.5zM633.5 306.8h4.5v4.5h-4.5zM642.0 315.7h4.5v4.5h-4.5zM650.9 325.0h4.5v4.5h-4.5zM661.4 324.5h4.5v4.5h-4.5zM634.7 320.6h4.5v4.5h-4.5zM646.2 324.0h4.5v4.5h-4.5zM627.0 321.6h4.5v4.5h-4.5zM660.9 330.0h4.5v4.5h-4.5zM647.1 327.9h4.5v4.5h-4.5zM641.5 323.6h4.5v4.5h-4.5zM650.0 322.0h4.5v4.5h-4.5zM645.8 324.3h4.5v4.5h-4.5zM633.9 322.6h4.5v4.5h-4.5zM629.1 323.3h4.5v4.5h-4.5zM626.5 321.1h4.5v4.5h-4.5zM624.2 321.6h4.5v4.5h-4.5zM625.8 324.4h4.5v4.5h-4.5zM622.7 323.8h4.5v4.5h-4.5zM634.0 326.8h4.5v4.5h-4.5zM635.2 319.5h4.5v4.5h-4.5zM648.9 322.3h4.5v4.5h-4.5zM654.7 325.3h4.5v4.5h-4.5zM632.7 323.3h4.5v4.5h-4.5zM630.9 320.1h4.5v4.5h-4.5zM625.2 319.1h4.5v4.5h-4.5zM630.7 319.1h4.5v4.5h-4.5zM638.7 322.8h4.5v4.5h-4.5zM645.9 324.8h4.5v4.5h-4.5zM649.4 325.9h4.5v4.5h-4.5zM640.9 326.9h4.5v4.5h-4.5zM627.6 319.7h4.5v4.5h-4.5zM622.4 324.7h4.5v4.5h-4.5zM657.4 325.0h4.5v4.5h-4.5zM655.9 326.3h4.5v4.5h-4.5zM659.4 330.0h4.5v4.5h-4.5zM635.3 320.8h4.5v4.5h-4.5zM638.7 327.5h4.5v4.5h-4.5zM640.8 322.3h4.5v4.5h-4.5zM622.9 320.1h4.5v4.5h-4.5zM659.2 325.4h4.5v4.5h-4.5zM654.0 329.2h4.5v4.5h-4.5zM659.7 328.5h4.5v4.5h-4.5zM642.0 321.9h4.5v4.5h-4.5zM659.8 329.2h4.5v4.5h-4.5zM651.9 320.9h4.5v4.5h-4.5zM648.1 326.4h4.5v4.5h-4.5zM627.4 320.1h4.5v4.5h-4.5zM640.2 321.2h4.5v4.5h-4.5zM626.3 318.4h4.5v4.5h-4.5zM640.4 319.0h4.5v4.5h-4.5zM653.9 324.6h4.5v4.5h-4.5zM633.2 320.2h4.5v4.5h-4.5zM634.7 323.6h4.5v4.5h-4.5zM650.7 324.3h4.5v4.5h-4.5zM650.7 325.7h4.5v4.5h-4.5zM654.6 327.7h4.5v4.5h-4.5zM652.8 320.7h4.5v4.5h-4.5zM678.5 313.0h4.5v4.5h-4.5zM700.6 315.3h4.5v4.5h-4.5zM705.0 317.5h4.5v4.5h-4.5zM669.3 317.9h4.5v4.5h-4.5zM670.8 314.8h4.5v4.5h-4.5zM682.5 318.5h4.5v4.5h-4.5zM686.2 319.1h4.5v4.5h-4.5zM698.9 323.4h4.5v4.5h-4.5zM691.0 317.2h4.5v4.5h-4.5zM685.2 315.9h4.5v4.5h-4.5zM700.8 319.3h4.5v4.5h-4.5zM694.5 321.5h4.5v4.5h-4.5zM694.4 322.2h4.5v4.5h-4.5zM683.2 319.2h4.5v4.5h-4.5zM703.2 318.9h4.5v4.5h-4.5zM700.2 316.5h4.5v4.5h-4.5zM669.6 319.5h4.5v4.5h-4.5zM687.7 322.3h4.5v4.5h-4.5zM689.9 315.4h4.5v4.5h-4.5zM667.9 319.8h4.5v4.5h-4.5zM673.9 313.1h4.5v4.5h-4.5zM686.7 319.7h4.5v4.5h-4.5zM688.8 313.1h4.5v4.5h-4.5zM698.4 320.4h4.5v4.5h-4.5zM677.3 320.9h4.5v4.5h-4.5zM685.1 320.1h4.5v4.5h-4.5zM666.4 313.9h4.5v4.5h-4.5zM697.2 320.4h4.5v4.5h-4.5zM694.7 320.2h4.5v4.5h-4.5zM663.5 318.9h4.5v4.5h-4.5zM664.2 313.0h4.5v4.5h-4.5zM676.2 316.6h4.5v4.5h-4.5zM666.7 315.1h4.5v4.5h-4.5zM668.7 314.3h4.5v4.5h-4.5zM678.2 312.9h4.5v4.5h-4.5zM699.4 313.8h4.5v4.5h-4.5zM671.5 320.1h4.5v4.5h-4.5zM681.0 321.5h4.5v4.5h-4.5zM676.5 316.8h4.5v4.5h-4.5zM686.6 316.6h4.5v4.5h-4.5zM708.0 318.4h4.5v4.5h-4.5zM699.1 318.7h4.5v4.5h-4.5zM678.4 320.2h4.5v4.5h-4.5zM705.0 314.1h4.5v4.5h-4.5zM689.9 320.4h4.5v4.5h-4.5zM685.7 329.7h4.5v4.5h-4.5zM695.5 328.5h4.5v4.5h-4.5zM684.2 327.8h4.5v4.5h-4.5zM702.2 334.8h4.5v4.5h-4.5zM680.6 332.4h4.5v4.5h-4.5zM687.3 332.0h4.5v4.5h-4.5zM673.3 331.5h4.5v4.5h-4.5zM692.3 335.5h4.5v4.5h-4.5zM674.4 328.5h4.5v4.5h-4.5zM698.3 329.7h4.5v4.5h-4.5zM697.6 334.8h4.5v4.5h-4.5zM669.9 330.8h4.5v4.5h-4.5zM675.7 327.5h4.5v4.5h-4.5zM678.5 332.1h4.5v4.5h-4.5zM691.8 330.1h4.5v4.5h-4.5zM693.8 334.1h4.5v4.5h-4.5zM671.3 332.0h4.5v4.5h-4.5zM686.3 331.7h4.5v4.5h-4.5zM702.0 329.7h4.5v4.5h-4.5zM683.9 332.1h4.5v4.5h-4.5zM663.0 327.2h4.5v4.5h-4.5zM687.3 330.2h4.5v4.5h-4.5zM685.6 333.4h4.5v4.5h-4.5zM667.5 330.4h4.5v4.5h-4.5zM675.3 325.9h4.5v4.5h-4.5zM683.6 327.1h4.5v4.5h-4.5zM683.5 327.4h4.5v4.5h-4.5zM682.8 327.1h4.5v4.5h-4.5zM708.3 330.3h4.5v4.5h-4.5zM682.8 331.1h4.5v4.5h-4.5zM693.4 328.1h4.5v4.5h-4.5zM701.5 331.0h4.5v4.5h-4.5zM666.1 327.9h4.5v4.5h-4.5zM691.0 329.9h4.5v4.5h-4.5zM695.9 329.9h4.5v4.5h-4.5zM700.0 335.8h4.5v4.5h-4.5zM700.0 328.2h4.5v4.5h-4.5zM681.7 330.4h4.5v4.5h-4.5zM679.9 327.2h4.5v4.5h-4.5zM689.5 327.6h4.5v4.5h-4.5zM670.0 328.2h4.5v4.5h-4.5zM708.4 331.8h4.5v4.5h-4.5zM706.9 334.3h4.5v4.5h-4.5zM692.1 334.8h4.5v4.5h-4.5zM689.2 332.9h4.5v4.5h-4.5zM684.1 332.9h4.5v4.5h-4.5zM702.7 327.9h4.5v4.5h-4.5zM705.5 328.4h4.5v4.5h-4.5zM608.9 299.6h4.5v4.5h-4.5zM612.6 301.4h4.5v4.5h-4.5zM592.7 301.4h4.5v4.5h-4.5zM596.3 301.9h4.5v4.5h-4.5zM600.7 300.9h4.5v4.5h-4.5zM602.6 301.9h4.5v4.5h-4.5zM599.7 300.7h4.5v4.5h-4.5zM595.7 299.7h4.5v4.5h-4.5zM591.9 299.1h4.5v4.5h-4.5zM597.3 301.2h4.5v4.5h-4.5zM593.0 298.7h4.5v4.5h-4.5zM619.6 302.9h4.5v4.5h-4.5zM591.1 301.3h4.5v4.5h-4.5zM612.7 302.1h4.5v4.5h-4.5zM655.5 336.6h4.5v4.5h-4.5zM612.2 357.5h4.5v4.5h-4.5zM677.9 341.1h4.5v4.5h-4.5zM697.3 345.1h4.5v4.5h-4.5zM707.8 273.9h4.5v4.5h-4.5zM707.8 282.2h4.5v4.5h-4.5zM714.5 285.1h4.5v4.5h-4.5zM721.9 280.7h4.5v4.5h-4.5zM730.9 281.9h4.5v4.5h-4.5zM737.6 282.9h4.5v4.5h-4.5zM761.5 271.0h4.5v4.5h-4.5zM763.7 282.2h4.5v4.5h-4.5zM795.1 282.9h4.5v4.5h-4.5zM794.3 263.5h4.5v4.5h-4.5zM743.1 280.4h4.5v4.5h-4.5zM744.3 283.6h4.5v4.5h-4.5zM748.0 285.1h4.5v4.5h-4.5zM751.8 284.8h4.5v4.5h-4.5zM754.0 282.9h4.5v4.5h-4.5zM789.2 284.9h4.5v4.5h-4.5zM775.7 282.2h4.5v4.5h-4.5zM782.5 286.5h4.5v4.5h-4.5zM785.2 282.4h4.5v4.5h-4.5zM774.3 287.3h4.5v4.5h-4.5zM780.0 282.8h4.5v4.5h-4.5zM713.0 290.4h4.5v4.5h-4.5zM716.7 294.8h4.5v4.5h-4.5zM723.4 294.1h4.5v4.5h-4.5zM734.6 293.8h4.5v4.5h-4.5zM741.3 296.3h4.5v4.5h-4.5zM754.0 296.3h4.5v4.5h-4.5zM756.3 291.1h4.5v4.5h-4.5zM711.5 303.0h4.5v4.5h-4.5zM724.2 307.5h4.5v4.5h-4.5zM745.8 309.8h4.5v4.5h-4.5zM749.5 310.5h4.5v4.5h-4.5zM792.1 307.5h4.5v4.5h-4.5zM801.8 308.3h4.5v4.5h-4.5zM807.8 312.0h4.5v4.5h-4.5zM784.0 309.3h4.5v4.5h-4.5zM782.1 300.0h4.5v4.5h-4.5zM778.0 306.2h4.5v4.5h-4.5zM781.2 294.9h4.5v4.5h-4.5zM779.2 310.7h4.5v4.5h-4.5zM778.0 301.3h4.5v4.5h-4.5zM782.8 304.3h4.5v4.5h-4.5zM812.2 267.2h4.5v4.5h-4.5zM815.2 269.5h4.5v4.5h-4.5zM818.2 267.2h4.5v4.5h-4.5zM821.9 269.5h4.5v4.5h-4.5zM824.2 267.2h4.5v4.5h-4.5zM812.2 285.9h4.5v4.5h-4.5zM818.2 285.1h4.5v4.5h-4.5zM824.2 287.4h4.5v4.5h-4.5zM828.6 271.7h4.5v4.5h-4.5zM831.6 276.2h4.5v4.5h-4.5zM833.9 280.7h4.5v4.5h-4.5zM833.1 285.1h4.5v4.5h-4.5zM829.4 287.4h4.5v4.5h-4.5zM824.2 287.4h4.5v4.5h-4.5zM837.6 274.4h4.5v4.5h-4.5zM840.6 273.5h4.5v4.5h-4.5zM839.1 277.7h4.5v4.5h-4.5zM844.3 265.7h4.5v4.5h-4.5zM848.0 266.5h4.5v4.5h-4.5zM851.8 270.2h4.5v4.5h-4.5zM851.8 277.7h4.5v4.5h-4.5zM849.5 282.2h4.5v4.5h-4.5zM845.1 277.7h4.5v4.5h-4.5zM842.8 274.7h4.5v4.5h-4.5zM803.3 291.9h4.5v4.5h-4.5zM813.0 291.1h4.5v4.5h-4.5zM819.7 294.1h4.5v4.5h-4.5zM824.9 293.3h4.5v4.5h-4.5zM831.6 294.8h4.5v4.5h-4.5zM839.1 294.1h4.5v4.5h-4.5zM835.4 298.6h4.5v4.5h-4.5zM827.9 299.3h4.5v4.5h-4.5zM821.9 301.6h4.5v4.5h-4.5zM823.3 313.6h4.5v4.5h-4.5zM827.5 311.5h4.5v4.5h-4.5zM836.6 306.9h4.5v4.5h-4.5zM817.0 313.9h4.5v4.5h-4.5zM820.1 306.8h4.5v4.5h-4.5zM832.1 308.7h4.5v4.5h-4.5zM827.1 305.3h4.5v4.5h-4.5zM827.4 316.1h4.5v4.5h-4.5zM815.9 308.3h4.5v4.5h-4.5zM838.0 315.0h4.5v4.5h-4.5zM832.7 313.0h4.5v4.5h-4.5zM815.5 316.3h4.5v4.5h-4.5zM811.9 319.9h4.5v4.5h-4.5zM820.4 320.8h4.5v4.5h-4.5zM819.1 313.6h4.5v4.5h-4.5zM815.7 321.8h4.5v4.5h-4.5zM811.5 313.9h4.5v4.5h-4.5zM839.1 314.2h4.5v4.5h-4.5zM842.8 321.0h4.5v4.5h-4.5zM848.0 325.4h4.5v4.5h-4.5zM853.3 327.2h4.5v4.5h-4.5zM859.2 336.6h4.5v4.5h-4.5zM859.2 344.1h4.5v4.5h-4.5zM858.5 349.3h4.5v4.5h-4.5zM856.3 356.0h4.5v4.5h-4.5zM836.1 341.9h4.5v4.5h-4.5zM828.6 359.0h4.5v4.5h-4.5zM839.8 348.6h4.5v4.5h-4.5zM839.1 355.3h4.5v4.5h-4.5zM708.9 316.9h4.5v4.5h-4.5zM713.5 317.4h4.5v4.5h-4.5zM726.3 321.1h4.5v4.5h-4.5zM732.5 321.1h4.5v4.5h-4.5zM720.1 321.5h4.5v4.5h-4.5zM721.3 315.8h4.5v4.5h-4.5zM726.5 316.0h4.5v4.5h-4.5zM731.4 316.3h4.5v4.5h-4.5zM735.7 317.4h4.5v4.5h-4.5zM717.3 318.1h4.5v4.5h-4.5zM736.0 323.7h4.5v4.5h-4.5zM748.5 324.9h4.5v4.5h-4.5zM741.5 325.0h4.5v4.5h-4.5zM754.2 323.4h4.5v4.5h-4.5zM754.4 319.0h4.5v4.5h-4.5zM742.7 319.9h4.5v4.5h-4.5zM749.5 316.6h4.5v4.5h-4.5zM737.9 320.9h4.5v4.5h-4.5zM739.0 316.6h4.5v4.5h-4.5zM757.2 315.7h4.5v4.5h-4.5zM758.9 326.5h4.5v4.5h-4.5zM743.5 315.6h4.5v4.5h-4.5zM750.5 320.9h4.5v4.5h-4.5zM768.2 320.2h4.5v4.5h-4.5zM773.4 319.5h4.5v4.5h-4.5zM778.6 321.0h4.5v4.5h-4.5zM783.6 320.7h4.5v4.5h-4.5zM708.2 334.0h4.5v4.5h-4.5zM712.9 332.9h4.5v4.5h-4.5zM718.1 331.8h4.5v4.5h-4.5zM721.4 334.6h4.5v4.5h-4.5zM750.9 342.0h4.5v4.5h-4.5zM746.5 341.8h4.5v4.5h-4.5zM740.8 340.0h4.5v4.5h-4.5zM740.3 335.6h4.5v4.5h-4.5zM743.8 330.8h4.5v4.5h-4.5zM750.7 334.8h4.5v4.5h-4.5zM736.1 331.0h4.5v4.5h-4.5zM730.8 335.7h4.5v4.5h-4.5zM731.0 345.5h4.5v4.5h-4.5zM735.0 338.8h4.5v4.5h-4.5zM747.7 346.2h4.5v4.5h-4.5zM739.9 344.5h4.5v4.5h-4.5zM731.7 330.0h4.5v4.5h-4.5zM746.4 335.8h4.5v4.5h-4.5zM748.8 330.6h4.5v4.5h-4.5zM735.4 344.2h4.5v4.5h-4.5zM734.2 347.4h4.5v4.5h-4.5zM737.8 353.4h4.5v4.5h-4.5zM733.6 351.6h4.5v4.5h-4.5zM733.7 355.9h4.5v4.5h-4.5zM738.3 349.0h4.5v4.5h-4.5zM754.2 334.7h4.5v4.5h-4.5zM758.8 334.1h4.5v4.5h-4.5zM765.1 333.0h4.5v4.5h-4.5zM755.6 339.0h4.5v4.5h-4.5zM762.5 339.0h4.5v4.5h-4.5zM768.9 342.6h4.5v4.5h-4.5zM771.2 347.8h4.5v4.5h-4.5zM757.0 349.3h4.5v4.5h-4.5zM783.9 349.3h4.5v4.5h-4.5zM789.8 341.1h4.5v4.5h-4.5zM754.8 356.8h4.5v4.5h-4.5zM719.7 349.3h4.5v4.5h-4.5zM739.8 359.8h4.5v4.5h-4.5zM747.3 360.5h4.5v4.5h-4.5zM776.4 360.5h4.5v4.5h-4.5zM795.6 320.5h4.5v4.5h-4.5zM797.0 325.4h4.5v4.5h-4.5zM803.2 327.9h4.5v4.5h-4.5zM802.4 323.1h4.5v4.5h-4.5zM797.7 332.1h4.5v4.5h-4.5zM805.6 332.1h4.5v4.5h-4.5zM801.9 357.3h4.5v4.5h-4.5zM803.7 350.7h4.5v4.5h-4.5zM802.1 339.6h4.5v4.5h-4.5zM796.7 350.5h4.5v4.5h-4.5zM799.5 343.9h4.5v4.5h-4.5zM797.1 356.6h4.5v4.5h-4.5zM804.1 343.5h4.5v4.5h-4.5zM806.2 356.4h4.5v4.5h-4.5zM806.2 337.9h4.5v4.5h-4.5zM796.2 337.8h4.5v4.5h-4.5zM806.7 347.3h4.5v4.5h-4.5zM823.1 351.2h4.5v4.5h-4.5zM815.1 345.0h4.5v4.5h-4.5zM808.4 335.4h4.5v4.5h-4.5zM823.2 339.5h4.5v4.5h-4.5zM820.3 331.3h4.5v4.5h-4.5zM809.7 323.4h4.5v4.5h-4.5zM808.9 329.4h4.5v4.5h-4.5zM814.4 350.5h4.5v4.5h-4.5zM826.6 323.8h4.5v4.5h-4.5zM824.0 334.5h4.5v4.5h-4.5zM812.4 332.9h4.5v4.5h-4.5zM819.2 343.3h4.5v4.5h-4.5zM824.3 329.0h4.5v4.5h-4.5zM808.9 350.0h4.5v4.5h-4.5zM812.2 339.3h4.5v4.5h-4.5zM825.5 319.5h4.5v4.5h-4.5zM826.3 343.7h4.5v4.5h-4.5zM818.4 326.7h4.5v4.5h-4.5zM819.4 336.8h4.5v4.5h-4.5zM814.1 326.2h4.5v4.5h-4.5zM814.1 320.7h4.5v4.5h-4.5zM810.1 345.6h4.5v4.5h-4.5zM818.8 349.6h4.5v4.5h-4.5zM826.1 348.1h4.5v4.5h-4.5zM820.0 321.9h4.5v4.5h-4.5zM807.5 340.4h4.5v4.5h-4.5zM830.1 319.5h4.5v4.5h-4.5zM833.1 323.9h4.5v4.5h-4.5zM827.2 328.4h4.5v4.5h-4.5zM574.9 397.3h4.5v4.5h-4.5zM574.9 437.9h4.5v4.5h-4.5zM571.2 453.3h4.5v4.5h-4.5zM589.1 369.4h4.5v4.5h-4.5zM589.1 388.3h4.5v4.5h-4.5zM589.1 402.2h4.5v4.5h-4.5zM589.1 421.9h4.5v4.5h-4.5zM589.1 432.8h4.5v4.5h-4.5zM589.1 369.4h4.5v4.5h-4.5zM612.2 358.5h4.5v4.5h-4.5zM608.5 376.4h4.5v4.5h-4.5zM625.4 398.0h4.5v4.5h-4.5zM690.6 375.4h4.5v4.5h-4.5zM587.6 449.5h4.5v4.5h-4.5zM598.1 454.3h4.5v4.5h-4.5zM594.5 446.2h4.5v4.5h-4.5zM601.9 444.5h4.5v4.5h-4.5zM593.3 457.3h4.5v4.5h-4.5zM601.7 450.4h4.5v4.5h-4.5zM594.6 451.1h4.5v4.5h-4.5zM601.7 457.4h4.5v4.5h-4.5zM610.3 448.6h4.5v4.5h-4.5zM605.5 448.1h4.5v4.5h-4.5zM611.7 434.0h4.5v4.5h-4.5zM612.8 443.9h4.5v4.5h-4.5zM608.5 442.7h4.5v4.5h-4.5zM608.8 437.1h4.5v4.5h-4.5zM604.0 436.4h4.5v4.5h-4.5zM604.2 442.4h4.5v4.5h-4.5zM622.7 442.8h4.5v4.5h-4.5zM623.4 437.6h4.5v4.5h-4.5zM626.4 434.6h4.5v4.5h-4.5zM632.4 432.4h4.5v4.5h-4.5zM635.4 434.6h4.5v4.5h-4.5zM618.9 451.8h4.5v4.5h-4.5zM649.7 446.0h4.5v4.5h-4.5zM655.5 444.9h4.5v4.5h-4.5zM653.9 449.6h4.5v4.5h-4.5zM644.4 448.5h4.5v4.5h-4.5zM645.7 444.2h4.5v4.5h-4.5zM641.8 455.6h4.5v4.5h-4.5zM648.3 457.4h4.5v4.5h-4.5zM631.7 456.7h4.5v4.5h-4.5zM652.8 456.5h4.5v4.5h-4.5zM636.9 455.6h4.5v4.5h-4.5zM666.0 435.4h4.5v4.5h-4.5zM664.5 440.6h4.5v4.5h-4.5zM664.0 445.8h4.5v4.5h-4.5zM665.2 450.3h4.5v4.5h-4.5zM664.0 454.8h4.5v4.5h-4.5zM680.9 451.4h4.5v4.5h-4.5zM683.8 443.5h4.5v4.5h-4.5zM677.6 457.2h4.5v4.5h-4.5zM678.1 443.6h4.5v4.5h-4.5zM683.8 456.6h4.5v4.5h-4.5zM681.2 447.0h4.5v4.5h-4.5zM693.5 451.4h4.5v4.5h-4.5zM692.4 442.5h4.5v4.5h-4.5zM690.9 455.2h4.5v4.5h-4.5zM690.9 447.5h4.5v4.5h-4.5zM676.6 398.9h4.5v4.5h-4.5zM682.0 400.9h4.5v4.5h-4.5zM681.3 396.6h4.5v4.5h-4.5zM699.1 398.8h4.5v4.5h-4.5zM695.6 404.2h4.5v4.5h-4.5zM693.7 399.4h4.5v4.5h-4.5zM689.5 402.3h4.5v4.5h-4.5zM688.4 398.1h4.5v4.5h-4.5zM684.6 407.8h4.5v4.5h-4.5zM685.4 413.0h4.5v4.5h-4.5zM689.1 412.2h4.5v4.5h-4.5zM701.0 405.5h4.5v4.5h-4.5zM703.3 410.7h4.5v4.5h-4.5zM708.5 409.2h4.5v4.5h-4.5zM713.0 409.2h4.5v4.5h-4.5zM716.0 414.5h4.5v4.5h-4.5zM714.5 422.7h4.5v4.5h-4.5zM699.0 425.2h4.5v4.5h-4.5zM690.7 422.9h4.5v4.5h-4.5zM691.7 418.7h4.5v4.5h-4.5zM698.1 419.1h4.5v4.5h-4.5zM690.1 427.7h4.5v4.5h-4.5zM695.0 422.5h4.5v4.5h-4.5zM694.4 427.4h4.5v4.5h-4.5zM698.8 423.4h4.5v4.5h-4.5zM703.3 430.1h4.5v4.5h-4.5zM708.5 430.1h4.5v4.5h-4.5zM699.0 436.8h4.5v4.5h-4.5zM697.0 432.6h4.5v4.5h-4.5zM701.9 432.6h4.5v4.5h-4.5zM708.5 435.4h4.5v4.5h-4.5zM713.0 437.6h4.5v4.5h-4.5zM716.0 442.8h4.5v4.5h-4.5zM705.7 454.3h4.5v4.5h-4.5zM706.7 448.6h4.5v4.5h-4.5zM711.3 445.4h4.5v4.5h-4.5zM712.7 451.8h4.5v4.5h-4.5zM706.0 443.9h4.5v4.5h-4.5zM763.0 384.6h4.5v4.5h-4.5zM779.4 374.9h4.5v4.5h-4.5zM798.0 366.0h4.5v4.5h-4.5zM808.0 368.2h4.5v4.5h-4.5zM776.4 361.5h4.5v4.5h-4.5zM806.3 363.7h4.5v4.5h-4.5zM808.0 368.2h4.5v4.5h-4.5zM808.0 421.9h4.5v4.5h-4.5zM822.7 366.7h4.5v4.5h-4.5zM828.6 359.2h4.5v4.5h-4.5zM830.1 367.5h4.5v4.5h-4.5zM836.9 369.7h4.5v4.5h-4.5zM845.8 365.2h4.5v4.5h-4.5zM857.0 357.8h4.5v4.5h-4.5zM839.1 357.8h4.5v4.5h-4.5zM739.8 360.0h4.5v4.5h-4.5zM740.3 363.7h4.5v4.5h-4.5zM748.0 360.0h4.5v4.5h-4.5zM809.2 359.2h4.5v4.5h-4.5zM797.3 357.8h4.5v4.5h-4.5zM804.8 362.2h4.5v4.5h-4.5zM831.1 374.2h4.5v4.5h-4.5zM825.8 373.6h4.5v4.5h-4.5zM723.4 370.4h4.5v4.5h-4.5zM741.3 377.2h4.5v4.5h-4.5zM738.3 386.9h4.5v4.5h-4.5zM737.6 392.1h4.5v4.5h-4.5zM735.4 396.9h4.5v4.5h-4.5zM745.8 392.4h4.5v4.5h-4.5zM745.8 397.8h4.5v4.5h-4.5zM731.3 385.1h4.5v4.5h-4.5zM732.9 370.4h4.5v4.5h-4.5zM735.6 365.1h4.5v4.5h-4.5zM733.5 375.4h4.5v4.5h-4.5zM732.6 380.0h4.5v4.5h-4.5zM730.4 365.3h4.5v4.5h-4.5zM735.8 384.5h4.5v4.5h-4.5zM747.3 373.4h4.5v4.5h-4.5zM757.0 384.6h4.5v4.5h-4.5zM753.7 389.4h4.5v4.5h-4.5zM761.8 383.9h4.5v4.5h-4.5zM763.7 385.8h4.5v4.5h-4.5zM754.1 367.2h4.5v4.5h-4.5zM752.0 372.3h4.5v4.5h-4.5zM756.8 370.7h4.5v4.5h-4.5zM758.5 403.3h4.5v4.5h-4.5zM761.5 413.0h4.5v4.5h-4.5zM761.5 421.6h4.5v4.5h-4.5zM771.9 433.9h4.5v4.5h-4.5zM769.7 433.1h4.5v4.5h-4.5zM763.0 439.1h4.5v4.5h-4.5zM762.2 442.1h4.5v4.5h-4.5zM748.8 407.8h4.5v4.5h-4.5zM751.0 418.6h4.5v4.5h-4.5zM752.1 425.4h4.5v4.5h-4.5zM753.3 435.4h4.5v4.5h-4.5zM765.0 402.5h4.5v4.5h-4.5zM768.4 399.3h4.5v4.5h-4.5zM768.7 404.9h4.5v4.5h-4.5zM764.4 397.6h4.5v4.5h-4.5zM772.5 421.3h4.5v4.5h-4.5zM770.1 414.1h4.5v4.5h-4.5zM769.1 418.4h4.5v4.5h-4.5zM740.0 410.8h4.5v4.5h-4.5zM737.7 403.8h4.5v4.5h-4.5zM736.2 407.9h4.5v4.5h-4.5zM742.7 406.5h4.5v4.5h-4.5zM742.3 401.9h4.5v4.5h-4.5zM742.7 421.9h4.5v4.5h-4.5zM739.4 419.0h4.5v4.5h-4.5zM742.8 416.0h4.5v4.5h-4.5zM739.0 426.0h4.5v4.5h-4.5zM754.3 441.3h4.5v4.5h-4.5zM755.5 445.8h4.5v4.5h-4.5zM755.8 449.5h4.5v4.5h-4.5zM709.2 409.2h4.5v4.5h-4.5zM713.7 409.2h4.5v4.5h-4.5zM714.5 422.7h4.5v4.5h-4.5zM723.4 435.4h4.5v4.5h-4.5zM729.4 433.9h4.5v4.5h-4.5zM729.8 438.3h4.5v4.5h-4.5zM738.3 439.5h4.5v4.5h-4.5zM716.7 442.8h4.5v4.5h-4.5zM713.0 436.9h4.5v4.5h-4.5zM708.5 430.1h4.5v4.5h-4.5zM708.5 435.4h4.5v4.5h-4.5zM730.9 449.1h4.5v4.5h-4.5zM722.7 453.3h4.5v4.5h-4.5zM716.3 418.4h4.5v4.5h-4.5zM721.3 417.3h4.5v4.5h-4.5zM720.7 412.8h4.5v4.5h-4.5zM716.2 412.4h4.5v4.5h-4.5zM730.5 428.7h4.5v4.5h-4.5zM727.5 425.4h4.5v4.5h-4.5zM732.5 423.9h4.5v4.5h-4.5zM726.4 430.8h4.5v4.5h-4.5zM709.6 446.3h4.5v4.5h-4.5zM709.2 452.5h4.5v4.5h-4.5zM714.8 447.0h4.5v4.5h-4.5zM713.5 453.3h4.5v4.5h-4.5zM737.0 443.8h4.5v4.5h-4.5zM740.7 446.9h4.5v4.5h-4.5zM736.0 448.0h4.5v4.5h-4.5zM807.8 422.2h4.5v4.5h-4.5zM810.7 424.2h4.5v4.5h-4.5zM814.0 427.2h4.5v4.5h-4.5zM817.2 422.2h4.5v4.5h-4.5zM802.5 436.9h4.5v4.5h-4.5zM795.1 441.6h4.5v4.5h-4.5zM827.2 424.6h4.5v4.5h-4.5zM818.9 434.6h4.5v4.5h-4.5zM812.2 439.5h4.5v4.5h-4.5zM816.0 439.5h4.5v4.5h-4.5zM819.7 439.5h4.5v4.5h-4.5zM807.8 444.3h4.5v4.5h-4.5zM812.2 445.8h4.5v4.5h-4.5zM805.5 450.3h4.5v4.5h-4.5zM813.0 451.8h4.5v4.5h-4.5zM797.3 452.5h4.5v4.5h-4.5zM797.3 456.3h4.5v4.5h-4.5zM796.1 430.9h4.5v4.5h-4.5zM800.0 427.4h4.5v4.5h-4.5zM801.4 431.8h4.5v4.5h-4.5zM784.9 439.0h4.5v4.5h-4.5zM794.2 445.2h4.5v4.5h-4.5zM791.0 438.9h4.5v4.5h-4.5zM789.1 444.4h4.5v4.5h-4.5zM783.2 443.0h4.5v4.5h-4.5zM785.7 447.6h4.5v4.5h-4.5zM791.3 448.6h4.5v4.5h-4.5zM781.2 455.3h4.5v4.5h-4.5zM776.1 455.1h4.5v4.5h-4.5zM785.3 456.5h4.5v4.5h-4.5zM825.2 418.2h4.5v4.5h-4.5zM829.2 415.6h4.5v4.5h-4.5zM821.2 420.2h4.5v4.5h-4.5zM829.2 420.2h4.5v4.5h-4.5zM821.4 415.2h4.5v4.5h-4.5zM842.3 418.3h4.5v4.5h-4.5zM834.9 417.7h4.5v4.5h-4.5zM839.1 415.4h4.5v4.5h-4.5zM826.0 433.6h4.5v4.5h-4.5zM834.6 433.6h4.5v4.5h-4.5zM829.6 428.9h4.5v4.5h-4.5zM838.8 429.3h4.5v4.5h-4.5zM834.6 428.3h4.5v4.5h-4.5zM840.1 433.5h4.5v4.5h-4.5zM823.4 445.5h4.5v4.5h-4.5zM825.5 441.5h4.5v4.5h-4.5zM823.5 437.4h4.5v4.5h-4.5zM828.2 446.2h4.5v4.5h-4.5zM828.4 436.9h4.5v4.5h-4.5zM571.2 454.2h4.5v4.5h-4.5zM564.5 473.6h4.5v4.5h-4.5zM563.7 480.4h4.5v4.5h-4.5zM536.1 489.3h4.5v4.5h-4.5zM539.8 489.3h4.5v4.5h-4.5zM562.2 489.3h4.5v4.5h-4.5zM575.7 490.1h4.5v4.5h-4.5zM575.7 492.8h4.5v4.5h-4.5zM536.4 495.7h4.5v4.5h-4.5zM540.9 494.1h4.5v4.5h-4.5zM540.1 504.1h4.5v4.5h-4.5zM537.2 500.6h4.5v4.5h-4.5zM535.7 505.6h4.5v4.5h-4.5zM541.6 499.8h4.5v4.5h-4.5zM546.5 503.5h4.5v4.5h-4.5zM563.5 498.0h4.5v4.5h-4.5zM554.7 503.7h4.5v4.5h-4.5zM550.8 499.5h4.5v4.5h-4.5zM566.2 504.5h4.5v4.5h-4.5zM542.9 497.7h4.5v4.5h-4.5zM559.8 503.2h4.5v4.5h-4.5zM542.9 506.0h4.5v4.5h-4.5zM557.3 498.0h4.5v4.5h-4.5zM550.6 505.7h4.5v4.5h-4.5zM567.3 500.1h4.5v4.5h-4.5zM545.1 492.0h4.5v4.5h-4.5zM545.6 496.5h4.5v4.5h-4.5zM549.3 493.8h4.5v4.5h-4.5zM556.2 494.3h4.5v4.5h-4.5zM559.3 497.4h4.5v4.5h-4.5zM560.0 491.9h4.5v4.5h-4.5zM571.5 495.6h4.5v4.5h-4.5zM566.1 498.8h4.5v4.5h-4.5zM565.6 494.5h4.5v4.5h-4.5zM569.9 502.8h4.5v4.5h-4.5zM565.4 503.5h4.5v4.5h-4.5zM550.4 543.3h4.5v4.5h-4.5zM564.5 540.7h4.5v4.5h-4.5zM561.2 544.5h4.5v4.5h-4.5zM555.0 543.5h4.5v4.5h-4.5zM571.4 544.4h4.5v4.5h-4.5zM546.0 542.0h4.5v4.5h-4.5zM576.3 545.0h4.5v4.5h-4.5zM540.9 542.4h4.5v4.5h-4.5zM560.0 540.3h4.5v4.5h-4.5zM572.4 540.2h4.5v4.5h-4.5zM578.6 540.8h4.5v4.5h-4.5zM566.0 545.2h4.5v4.5h-4.5zM568.1 549.6h4.5v4.5h-4.5zM554.5 551.5h4.5v4.5h-4.5zM561.6 549.0h4.5v4.5h-4.5zM550.4 549.1h4.5v4.5h-4.5zM575.9 548.9h4.5v4.5h-4.5zM543.4 551.2h4.5v4.5h-4.5zM557.3 548.1h4.5v4.5h-4.5zM564.9 552.7h4.5v4.5h-4.5zM531.6 518.4h4.5v4.5h-4.5zM535.4 517.7h4.5v4.5h-4.5zM526.0 538.3h4.5v4.5h-4.5zM523.1 529.2h4.5v4.5h-4.5zM520.9 534.2h4.5v4.5h-4.5zM537.1 536.1h4.5v4.5h-4.5zM528.2 527.6h4.5v4.5h-4.5zM534.0 539.6h4.5v4.5h-4.5zM527.2 533.2h4.5v4.5h-4.5zM536.8 526.9h4.5v4.5h-4.5zM531.1 535.8h4.5v4.5h-4.5zM520.0 525.4h4.5v4.5h-4.5zM531.8 531.1h4.5v4.5h-4.5zM521.8 539.2h4.5v4.5h-4.5zM528.9 541.7h4.5v4.5h-4.5zM533.1 524.7h4.5v4.5h-4.5zM524.6 525.2h4.5v4.5h-4.5zM526.8 545.5h4.5v4.5h-4.5zM519.0 551.9h4.5v4.5h-4.5zM529.7 549.6h4.5v4.5h-4.5zM535.9 548.3h4.5v4.5h-4.5zM540.6 547.1h4.5v4.5h-4.5zM525.7 552.5h4.5v4.5h-4.5zM520.7 547.4h4.5v4.5h-4.5zM521.3 542.7h4.5v4.5h-4.5zM532.8 544.6h4.5v4.5h-4.5zM538.7 542.6h4.5v4.5h-4.5zM538.9 551.5h4.5v4.5h-4.5zM533.9 552.2h4.5v4.5h-4.5zM581.6 514.7h4.5v4.5h-4.5zM579.4 536.3h4.5v4.5h-4.5zM580.9 539.3h4.5v4.5h-4.5zM591.3 538.6h4.5v4.5h-4.5zM579.8 467.7h4.5v4.5h-4.5zM583.9 461.0h4.5v4.5h-4.5zM593.6 458.7h4.5v4.5h-4.5zM601.0 455.0h4.5v4.5h-4.5zM597.3 453.5h4.5v4.5h-4.5zM586.9 477.4h4.5v4.5h-4.5zM613.7 463.2h4.5v4.5h-4.5zM612.2 476.6h4.5v4.5h-4.5zM617.5 472.2h4.5v4.5h-4.5zM618.2 477.4h4.5v4.5h-4.5zM623.9 475.9h4.5v4.5h-4.5zM586.0 488.7h4.5v4.5h-4.5zM581.0 490.5h4.5v4.5h-4.5zM593.6 484.8h4.5v4.5h-4.5zM594.3 488.6h4.5v4.5h-4.5zM611.6 488.8h4.5v4.5h-4.5zM616.3 488.0h4.5v4.5h-4.5zM607.9 491.3h4.5v4.5h-4.5zM607.8 486.5h4.5v4.5h-4.5zM586.1 508.0h4.5v4.5h-4.5zM580.4 508.9h4.5v4.5h-4.5zM583.4 498.8h4.5v4.5h-4.5zM585.9 502.4h4.5v4.5h-4.5zM581.3 504.6h4.5v4.5h-4.5zM584.2 512.5h4.5v4.5h-4.5zM592.4 498.5h4.5v4.5h-4.5zM599.5 492.7h4.5v4.5h-4.5zM602.8 505.5h4.5v4.5h-4.5zM597.2 502.5h4.5v4.5h-4.5zM593.4 510.8h4.5v4.5h-4.5zM601.5 496.7h4.5v4.5h-4.5zM591.0 492.1h4.5v4.5h-4.5zM593.3 505.9h4.5v4.5h-4.5zM600.3 509.6h4.5v4.5h-4.5zM595.5 490.6h4.5v4.5h-4.5zM596.9 497.4h4.5v4.5h-4.5zM601.7 501.0h4.5v4.5h-4.5zM598.9 519.8h4.5v4.5h-4.5zM594.3 516.5h4.5v4.5h-4.5zM592.1 522.9h4.5v4.5h-4.5zM589.9 518.6h4.5v4.5h-4.5zM604.8 516.4h4.5v4.5h-4.5zM602.8 522.7h4.5v4.5h-4.5zM603.0 527.2h4.5v4.5h-4.5zM602.8 531.9h4.5v4.5h-4.5zM597.6 527.2h4.5v4.5h-4.5zM598.6 533.6h4.5v4.5h-4.5zM621.2 508.7h4.5v4.5h-4.5zM647.5 455.7h4.5v4.5h-4.5zM633.9 468.7h4.5v4.5h-4.5zM636.7 476.9h4.5v4.5h-4.5zM632.8 474.9h4.5v4.5h-4.5zM641.8 471.4h4.5v4.5h-4.5zM645.0 462.7h4.5v4.5h-4.5zM642.2 485.7h4.5v4.5h-4.5zM632.3 455.4h4.5v4.5h-4.5zM644.8 468.1h4.5v4.5h-4.5zM649.2 480.8h4.5v4.5h-4.5zM639.1 467.0h4.5v4.5h-4.5zM638.6 456.8h4.5v4.5h-4.5zM632.3 482.4h4.5v4.5h-4.5zM641.3 476.3h4.5v4.5h-4.5zM635.3 461.8h4.5v4.5h-4.5zM646.6 476.5h4.5v4.5h-4.5zM648.0 485.8h4.5v4.5h-4.5zM650.9 464.4h4.5v4.5h-4.5zM640.0 462.7h4.5v4.5h-4.5zM629.6 471.3h4.5v4.5h-4.5zM637.0 482.7h4.5v4.5h-4.5zM629.8 463.2h4.5v4.5h-4.5zM644.9 481.0h4.5v4.5h-4.5zM650.7 469.7h4.5v4.5h-4.5zM636.1 497.5h4.5v4.5h-4.5zM635.4 490.1h4.5v4.5h-4.5zM656.7 484.8h4.5v4.5h-4.5zM661.4 493.3h4.5v4.5h-4.5zM654.9 501.2h4.5v4.5h-4.5zM659.2 488.4h4.5v4.5h-4.5zM656.1 496.3h4.5v4.5h-4.5zM662.6 482.9h4.5v4.5h-4.5zM667.4 503.9h4.5v4.5h-4.5zM667.0 489.3h4.5v4.5h-4.5zM655.3 490.9h4.5v4.5h-4.5zM662.8 499.6h4.5v4.5h-4.5zM662.3 471.8h4.5v4.5h-4.5zM666.2 468.4h4.5v4.5h-4.5zM663.0 460.9h4.5v4.5h-4.5zM661.7 477.8h4.5v4.5h-4.5zM666.3 453.0h4.5v4.5h-4.5zM662.4 465.5h4.5v4.5h-4.5zM667.1 475.0h4.5v4.5h-4.5zM666.8 458.7h4.5v4.5h-4.5zM667.1 479.5h4.5v4.5h-4.5zM693.6 453.8h4.5v4.5h-4.5zM685.0 455.0h4.5v4.5h-4.5zM679.5 457.2h4.5v4.5h-4.5zM675.8 454.8h4.5v4.5h-4.5zM669.6 454.6h4.5v4.5h-4.5zM689.4 455.7h4.5v4.5h-4.5zM678.6 460.2h4.5v4.5h-4.5zM677.9 468.4h4.5v4.5h-4.5zM689.8 485.6h4.5v4.5h-4.5zM663.8 469.1h4.5v4.5h-4.5zM660.0 471.4h4.5v4.5h-4.5zM664.9 486.0h4.5v4.5h-4.5zM679.6 485.8h4.5v4.5h-4.5zM667.4 474.5h4.5v4.5h-4.5zM669.3 486.2h4.5v4.5h-4.5zM682.7 474.2h4.5v4.5h-4.5zM680.1 481.1h4.5v4.5h-4.5zM675.5 487.4h4.5v4.5h-4.5zM675.1 477.5h4.5v4.5h-4.5zM674.8 481.9h4.5v4.5h-4.5zM669.9 478.1h4.5v4.5h-4.5zM716.6 461.0h4.5v4.5h-4.5zM723.3 454.6h4.5v4.5h-4.5zM713.8 452.8h4.5v4.5h-4.5zM720.1 457.6h4.5v4.5h-4.5zM724.1 459.4h4.5v4.5h-4.5zM711.5 459.2h4.5v4.5h-4.5zM718.9 453.1h4.5v4.5h-4.5zM722.7 471.4h4.5v4.5h-4.5zM730.1 467.7h4.5v4.5h-4.5zM730.9 475.1h4.5v4.5h-4.5zM735.4 478.1h4.5v4.5h-4.5zM739.8 466.9h4.5v4.5h-4.5zM744.3 462.5h4.5v4.5h-4.5zM744.3 471.4h4.5v4.5h-4.5zM742.1 475.1h4.5v4.5h-4.5zM746.6 489.3h4.5v4.5h-4.5zM753.3 490.1h4.5v4.5h-4.5zM741.3 500.5h4.5v4.5h-4.5zM751.0 508.0h4.5v4.5h-4.5zM759.2 502.8h4.5v4.5h-4.5zM762.2 463.2h4.5v4.5h-4.5zM767.5 472.2h4.5v4.5h-4.5zM771.2 476.6h4.5v4.5h-4.5zM772.7 458.7h4.5v4.5h-4.5zM777.2 455.7h4.5v4.5h-4.5zM781.6 459.5h4.5v4.5h-4.5zM784.6 455.7h4.5v4.5h-4.5zM776.4 486.3h4.5v4.5h-4.5zM778.6 483.3h4.5v4.5h-4.5zM787.6 470.7h4.5v4.5h-4.5zM795.1 468.4h4.5v4.5h-4.5zM798.0 473.6h4.5v4.5h-4.5zM801.0 461.7h4.5v4.5h-4.5zM804.8 461.0h4.5v4.5h-4.5zM803.3 464.7h4.5v4.5h-4.5zM807.8 481.1h4.5v4.5h-4.5zM807.8 523.6h4.5v4.5h-4.5zM798.0 454.2h4.5v4.5h-4.5zM813.0 452.8h4.5v4.5h-4.5zM721.2 490.8h4.5v4.5h-4.5zM727.2 492.3h4.5v4.5h-4.5zM727.2 496.8h4.5v4.5h-4.5zM767.6 516.3h4.5v4.5h-4.5zM761.0 511.2h4.5v4.5h-4.5zM761.7 516.8h4.5v4.5h-4.5zM772.2 514.4h4.5v4.5h-4.5zM767.5 511.7h4.5v4.5h-4.5zM772.2 519.6h4.5v4.5h-4.5zM772.2 510.0h4.5v4.5h-4.5zM777.2 513.9h4.5v4.5h-4.5zM781.6 516.9h4.5v4.5h-4.5zM783.9 522.9h4.5v4.5h-4.5zM786.9 526.6h4.5v4.5h-4.5zM789.1 540.1h4.5v4.5h-4.5zM788.8 543.0h4.5v4.5h-4.5zM789.8 546.0h4.5v4.5h-4.5zM795.8 539.3h4.5v4.5h-4.5zM806.3 538.1h4.5v4.5h-4.5zM815.2 538.6h4.5v4.5h-4.5zM822.2 481.1h4.5v4.5h-4.5zM823.7 491.9h4.5v4.5h-4.5zM826.7 509.2h4.5v4.5h-4.5zM819.7 531.4h4.5v4.5h-4.5zM815.2 538.6h4.5v4.5h-4.5zM802.0 462.0h4.5v4.5h-4.5zM806.0 460.3h4.5v4.5h-4.5zM807.3 464.6h4.5v4.5h-4.5zM787.2 470.7h4.5v4.5h-4.5zM776.7 484.1h4.5v4.5h-4.5zM778.2 482.6h4.5v4.5h-4.5zM769.2 472.2h4.5v4.5h-4.5zM770.7 477.4h4.5v4.5h-4.5zM799.4 472.6h4.5v4.5h-4.5zM796.9 468.6h4.5v4.5h-4.5zM791.9 475.4h4.5v4.5h-4.5zM792.6 470.9h4.5v4.5h-4.5zM796.1 476.5h4.5v4.5h-4.5zM530.5 577.0h4.5v4.5h-4.5zM538.3 582.8h4.5v4.5h-4.5zM533.9 577.7h4.5v4.5h-4.5zM545.4 582.4h4.5v4.5h-4.5zM546.8 579.7h4.5v4.5h-4.5zM533.9 569.3h4.5v4.5h-4.5zM525.6 570.1h4.5v4.5h-4.5zM546.2 588.3h4.5v4.5h-4.5zM532.2 563.6h4.5v4.5h-4.5zM533.3 580.3h4.5v4.5h-4.5zM526.4 558.9h4.5v4.5h-4.5zM532.4 582.4h4.5v4.5h-4.5zM530.1 580.4h4.5v4.5h-4.5zM534.7 566.4h4.5v4.5h-4.5zM531.1 584.3h4.5v4.5h-4.5zM530.1 576.5h4.5v4.5h-4.5zM534.8 587.5h4.5v4.5h-4.5zM539.1 577.7h4.5v4.5h-4.5zM527.1 567.7h4.5v4.5h-4.5zM530.7 555.4h4.5v4.5h-4.5zM540.4 572.2h4.5v4.5h-4.5zM530.3 560.6h4.5v4.5h-4.5zM528.2 557.0h4.5v4.5h-4.5zM535.3 588.9h4.5v4.5h-4.5zM528.9 578.4h4.5v4.5h-4.5zM535.0 558.3h4.5v4.5h-4.5zM529.5 585.1h4.5v4.5h-4.5zM534.3 558.4h4.5v4.5h-4.5zM539.0 572.4h4.5v4.5h-4.5zM540.2 577.9h4.5v4.5h-4.5zM528.1 563.9h4.5v4.5h-4.5zM546.8 584.5h4.5v4.5h-4.5zM528.0 558.8h4.5v4.5h-4.5zM528.3 568.2h4.5v4.5h-4.5zM522.3 560.1h4.5v4.5h-4.5zM519.7 554.6h4.5v4.5h-4.5zM524.9 565.4h4.5v4.5h-4.5zM524.1 565.1h4.5v4.5h-4.5zM529.4 564.7h4.5v4.5h-4.5zM539.4 580.7h4.5v4.5h-4.5zM530.2 573.4h4.5v4.5h-4.5zM531.5 587.1h4.5v4.5h-4.5zM533.4 577.5h4.5v4.5h-4.5zM522.6 564.3h4.5v4.5h-4.5zM538.9 580.9h4.5v4.5h-4.5zM526.3 563.0h4.5v4.5h-4.5zM535.9 558.7h4.5v4.5h-4.5zM531.4 566.9h4.5v4.5h-4.5zM522.4 560.3h4.5v4.5h-4.5zM529.3 557.6h4.5v4.5h-4.5zM531.1 557.9h4.5v4.5h-4.5zM537.1 585.1h4.5v4.5h-4.5zM530.0 572.3h4.5v4.5h-4.5zM531.6 561.1h4.5v4.5h-4.5zM521.1 556.9h4.5v4.5h-4.5zM522.9 564.4h4.5v4.5h-4.5zM533.2 581.6h4.5v4.5h-4.5zM535.4 573.1h4.5v4.5h-4.5zM526.6 577.1h4.5v4.5h-4.5zM549.8 585.8h4.5v4.5h-4.5zM551.0 561.9h4.5v4.5h-4.5zM555.5 570.9h4.5v4.5h-4.5zM560.0 576.9h4.5v4.5h-4.5zM560.7 579.1h4.5v4.5h-4.5zM558.5 550.4h4.5v4.5h-4.5zM565.2 553.7h4.5v4.5h-4.5zM567.5 554.5h4.5v4.5h-4.5zM568.9 553.0h4.5v4.5h-4.5zM573.4 557.5h4.5v4.5h-4.5zM577.9 561.2h4.5v4.5h-4.5zM577.9 549.2h4.5v4.5h-4.5zM585.4 550.0h4.5v4.5h-4.5zM580.9 554.5h4.5v4.5h-4.5zM589.8 559.4h4.5v4.5h-4.5zM600.6 559.7h4.5v4.5h-4.5zM600.6 561.5h4.5v4.5h-4.5zM572.7 567.9h4.5v4.5h-4.5zM573.4 571.6h4.5v4.5h-4.5zM575.7 574.6h4.5v4.5h-4.5zM589.1 581.3h4.5v4.5h-4.5zM530.1 588.0h4.5v4.5h-4.5zM526.4 599.2h4.5v4.5h-4.5zM522.7 610.1h4.5v4.5h-4.5zM523.9 629.1h4.5v4.5h-4.5zM545.8 640.0h4.5v4.5h-4.5zM557.0 641.5h4.5v4.5h-4.5zM557.0 641.5h4.5v4.5h-4.5zM560.7 630.6h4.5v4.5h-4.5zM560.7 630.6h4.5v4.5h-4.5zM571.2 637.0h4.5v4.5h-4.5zM585.1 642.8h4.5v4.5h-4.5zM585.1 642.8h4.5v4.5h-4.5zM590.6 628.3h4.5v4.5h-4.5zM593.6 628.3h4.5v4.5h-4.5zM593.6 628.3h4.5v4.5h-4.5zM603.3 637.0h4.5v4.5h-4.5zM615.5 640.6h4.5v4.5h-4.5zM627.9 637.0h4.5v4.5h-4.5zM634.6 629.8h4.5v4.5h-4.5zM638.3 624.6h4.5v4.5h-4.5zM638.3 624.6h4.5v4.5h-4.5zM645.1 628.3h4.5v4.5h-4.5zM660.3 633.1h4.5v4.5h-4.5zM543.6 592.5h4.5v4.5h-4.5zM536.1 615.7h4.5v4.5h-4.5zM546.6 626.1h4.5v4.5h-4.5zM576.7 623.6h4.5v4.5h-4.5zM601.5 616.7h4.5v4.5h-4.5zM611.5 624.6h4.5v4.5h-4.5zM622.7 621.9h4.5v4.5h-4.5zM652.5 615.7h4.5v4.5h-4.5zM666.0 608.9h4.5v4.5h-4.5zM543.6 592.5h4.5v4.5h-4.5zM573.4 591.0h4.5v4.5h-4.5zM597.6 592.8h4.5v4.5h-4.5zM666.0 600.7h4.5v4.5h-4.5zM660.7 633.1h4.5v4.5h-4.5zM676.9 624.6h4.5v4.5h-4.5zM681.9 611.9h4.5v4.5h-4.5zM681.9 611.9h4.5v4.5h-4.5zM687.3 615.2h4.5v4.5h-4.5zM698.8 617.6h4.5v4.5h-4.5zM702.5 618.2h4.5v4.5h-4.5zM718.2 615.7h4.5v4.5h-4.5zM733.9 599.7h4.5v4.5h-4.5zM744.3 586.3h4.5v4.5h-4.5zM744.3 586.3h4.5v4.5h-4.5zM758.9 586.9h4.5v4.5h-4.5zM771.2 585.8h4.5v4.5h-4.5zM668.2 608.6h4.5v4.5h-4.5zM666.0 600.7h4.5v4.5h-4.5zM671.2 600.3h4.5v4.5h-4.5zM689.8 595.5h4.5v4.5h-4.5zM699.5 604.2h4.5v4.5h-4.5zM719.7 595.5h4.5v4.5h-4.5zM725.7 584.0h4.5v4.5h-4.5zM619.8 508.2h4.5v4.5h-4.5zM616.6 514.4h4.5v4.5h-4.5zM614.1 521.8h4.5v4.5h-4.5zM612.0 528.4h4.5v4.5h-4.5zM609.2 536.7h4.5v4.5h-4.5zM609.6 542.5h4.5v4.5h-4.5zM608.4 549.8h4.5v4.5h-4.5zM608.7 556.0h4.5v4.5h-4.5zM609.4 564.0h4.5v4.5h-4.5zM611.0 570.7h4.5v4.5h-4.5zM614.1 576.3h4.5v4.5h-4.5zM615.4 582.9h4.5v4.5h-4.5zM619.0 591.3h4.5v4.5h-4.5zM625.9 519.4h4.5v4.5h-4.5zM623.6 524.3h4.5v4.5h-4.5zM622.1 530.0h4.5v4.5h-4.5zM619.7 536.0h4.5v4.5h-4.5zM619.5 543.8h4.5v4.5h-4.5zM618.9 549.6h4.5v4.5h-4.5zM618.0 556.0h4.5v4.5h-4.5zM620.2 561.7h4.5v4.5h-4.5zM620.4 567.6h4.5v4.5h-4.5zM622.2 573.7h4.5v4.5h-4.5zM623.6 580.8h4.5v4.5h-4.5zM628.0 586.8h4.5v4.5h-4.5zM631.5 592.6h4.5v4.5h-4.5zM641.0 506.4h4.5v4.5h-4.5zM639.1 513.2h4.5v4.5h-4.5zM638.0 521.5h4.5v4.5h-4.5zM636.4 528.7h4.5v4.5h-4.5zM635.4 535.0h4.5v4.5h-4.5zM636.3 542.1h4.5v4.5h-4.5zM635.8 549.1h4.5v4.5h-4.5zM635.1 554.4h4.5v4.5h-4.5zM634.3 563.0h4.5v4.5h-4.5zM636.5 569.8h4.5v4.5h-4.5zM636.0 575.6h4.5v4.5h-4.5zM636.3 583.2h4.5v4.5h-4.5zM638.8 589.4h4.5v4.5h-4.5zM620.1 517.5h4.5v4.5h-4.5zM619.9 522.8h4.5v4.5h-4.5zM616.8 527.9h4.5v4.5h-4.5zM613.6 535.6h4.5v4.5h-4.5zM616.0 543.8h4.5v4.5h-4.5zM612.5 549.6h4.5v4.5h-4.5zM612.9 557.2h4.5v4.5h-4.5zM614.5 563.1h4.5v4.5h-4.5zM616.8 570.2h4.5v4.5h-4.5zM618.8 574.1h4.5v4.5h-4.5zM618.8 581.3h4.5v4.5h-4.5zM623.6 588.1h4.5v4.5h-4.5zM633.1 515.5h4.5v4.5h-4.5zM630.1 520.8h4.5v4.5h-4.5zM628.7 534.9h4.5v4.5h-4.5zM627.0 542.1h4.5v4.5h-4.5zM627.5 547.6h4.5v4.5h-4.5zM626.5 556.7h4.5v4.5h-4.5zM629.0 561.6h4.5v4.5h-4.5zM628.3 569.5h4.5v4.5h-4.5zM631.0 574.9h4.5v4.5h-4.5zM632.9 582.7h4.5v4.5h-4.5zM632.9 589.0h4.5v4.5h-4.5zM653.2 513.2h4.5v4.5h-4.5zM649.9 521.5h4.5v4.5h-4.5zM646.4 527.8h4.5v4.5h-4.5zM644.5 533.8h4.5v4.5h-4.5zM643.2 540.1h4.5v4.5h-4.5zM642.9 548.1h4.5v4.5h-4.5zM642.3 553.6h4.5v4.5h-4.5zM644.2 560.7h4.5v4.5h-4.5zM644.7 567.2h4.5v4.5h-4.5zM647.7 574.6h4.5v4.5h-4.5zM649.6 581.2h4.5v4.5h-4.5zM654.5 588.9h4.5v4.5h-4.5zM659.4 594.5h4.5v4.5h-4.5zM661.7 516.3h4.5v4.5h-4.5zM658.7 523.7h4.5v4.5h-4.5zM656.4 530.6h4.5v4.5h-4.5zM654.6 536.9h4.5v4.5h-4.5zM653.6 544.4h4.5v4.5h-4.5zM653.4 551.8h4.5v4.5h-4.5zM654.5 557.6h4.5v4.5h-4.5zM654.7 565.6h4.5v4.5h-4.5zM656.0 572.0h4.5v4.5h-4.5zM658.8 579.0h4.5v4.5h-4.5zM662.4 585.6h4.5v4.5h-4.5zM665.4 594.3h4.5v4.5h-4.5zM668.6 601.0h4.5v4.5h-4.5zM678.8 516.8h4.5v4.5h-4.5zM676.9 524.4h4.5v4.5h-4.5zM674.4 529.1h4.5v4.5h-4.5zM674.6 535.9h4.5v4.5h-4.5zM673.4 541.6h4.5v4.5h-4.5zM671.7 548.0h4.5v4.5h-4.5zM672.9 554.2h4.5v4.5h-4.5zM672.7 560.9h4.5v4.5h-4.5zM673.2 566.8h4.5v4.5h-4.5zM674.7 573.0h4.5v4.5h-4.5zM676.5 579.7h4.5v4.5h-4.5zM677.2 584.9h4.5v4.5h-4.5zM679.3 591.2h4.5v4.5h-4.5zM654.4 519.0h4.5v4.5h-4.5zM652.7 524.5h4.5v4.5h-4.5zM649.8 531.7h4.5v4.5h-4.5zM650.3 539.2h4.5v4.5h-4.5zM647.1 546.5h4.5v4.5h-4.5zM647.5 553.0h4.5v4.5h-4.5zM649.3 559.1h4.5v4.5h-4.5zM650.0 565.4h4.5v4.5h-4.5zM650.5 574.7h4.5v4.5h-4.5zM659.1 588.6h4.5v4.5h-4.5zM661.7 594.0h4.5v4.5h-4.5zM669.7 519.8h4.5v4.5h-4.5zM666.1 528.8h4.5v4.5h-4.5zM664.8 531.5h4.5v4.5h-4.5zM663.7 539.5h4.5v4.5h-4.5zM662.3 545.4h4.5v4.5h-4.5zM662.7 551.4h4.5v4.5h-4.5zM663.4 558.6h4.5v4.5h-4.5zM663.6 566.0h4.5v4.5h-4.5zM664.7 572.6h4.5v4.5h-4.5zM668.0 579.5h4.5v4.5h-4.5zM670.9 588.4h4.5v4.5h-4.5zM671.8 594.1h4.5v4.5h-4.5zM694.2 566.1h4.5v4.5h-4.5zM687.5 557.0h4.5v4.5h-4.5zM691.8 542.4h4.5v4.5h-4.5zM697.9 550.5h4.5v4.5h-4.5zM697.5 569.0h4.5v4.5h-4.5zM689.9 569.7h4.5v4.5h-4.5zM685.0 555.7h4.5v4.5h-4.5zM688.0 539.0h4.5v4.5h-4.5zM696.5 537.8h4.5v4.5h-4.5zM700.4 552.9h4.5v4.5h-4.5zM702.5 565.4h4.5v4.5h-4.5zM694.7 577.0h4.5v4.5h-4.5zM685.8 570.1h4.5v4.5h-4.5zM681.6 552.5h4.5v4.5h-4.5zM686.9 534.6h4.5v4.5h-4.5zM696.6 532.7h4.5v4.5h-4.5zM703.2 546.3h4.5v4.5h-4.5zM706.4 560.5h4.5v4.5h-4.5zM702.4 575.6h4.5v4.5h-4.5zM693.6 582.4h4.5v4.5h-4.5zM685.8 578.2h4.5v4.5h-4.5zM680.0 564.9h4.5v4.5h-4.5zM679.7 547.7h4.5v4.5h-4.5zM684.0 532.9h4.5v4.5h-4.5zM691.5 525.9h4.5v4.5h-4.5zM700.2 529.7h4.5v4.5h-4.5zM705.4 543.2h4.5v4.5h-4.5zM715.5 552.3h4.5v4.5h-4.5zM715.8 551.2h4.5v4.5h-4.5zM716.7 577.8h4.5v4.5h-4.5zM705.6 510.8h4.5v4.5h-4.5zM707.3 518.3h4.5v4.5h-4.5zM708.0 589.8h4.5v4.5h-4.5zM711.9 578.5h4.5v4.5h-4.5zM709.4 525.2h4.5v4.5h-4.5zM717.9 544.0h4.5v4.5h-4.5zM713.3 569.9h4.5v4.5h-4.5zM717.8 543.3h4.5v4.5h-4.5zM716.3 531.8h4.5v4.5h-4.5zM714.3 568.0h4.5v4.5h-4.5zM715.9 574.1h4.5v4.5h-4.5zM700.5 591.9h4.5v4.5h-4.5zM720.6 560.0h4.5v4.5h-4.5zM714.9 531.9h4.5v4.5h-4.5zM712.4 521.4h4.5v4.5h-4.5zM706.2 589.9h4.5v4.5h-4.5zM714.7 564.3h4.5v4.5h-4.5zM714.7 543.6h4.5v4.5h-4.5zM714.8 533.3h4.5v4.5h-4.5zM707.8 510.9h4.5v4.5h-4.5zM712.3 538.7h4.5v4.5h-4.5zM705.7 515.1h4.5v4.5h-4.5zM699.7 594.2h4.5v4.5h-4.5zM714.0 575.2h4.5v4.5h-4.5zM704.8 587.6h4.5v4.5h-4.5zM716.6 571.9h4.5v4.5h-4.5zM711.3 583.7h4.5v4.5h-4.5zM714.1 539.0h4.5v4.5h-4.5zM712.5 576.0h4.5v4.5h-4.5zM716.3 534.7h4.5v4.5h-4.5zM715.4 532.0h4.5v4.5h-4.5zM707.1 585.9h4.5v4.5h-4.5zM709.1 587.7h4.5v4.5h-4.5zM706.6 512.5h4.5v4.5h-4.5zM715.9 538.9h4.5v4.5h-4.5zM706.0 500.0h4.5v4.5h-4.5zM712.3 578.2h4.5v4.5h-4.5zM718.2 556.7h4.5v4.5h-4.5zM697.6 590.5h4.5v4.5h-4.5zM709.7 514.5h4.5v4.5h-4.5zM716.0 574.4h4.5v4.5h-4.5zM713.6 572.0h4.5v4.5h-4.5zM714.2 563.5h4.5v4.5h-4.5zM715.5 543.2h4.5v4.5h-4.5zM717.4 575.0h4.5v4.5h-4.5zM693.9 595.7h4.5v4.5h-4.5zM711.3 513.8h4.5v4.5h-4.5zM692.5 592.4h4.5v4.5h-4.5zM706.4 515.0h4.5v4.5h-4.5zM712.6 537.5h4.5v4.5h-4.5zM702.2 505.8h4.5v4.5h-4.5zM713.3 568.0h4.5v4.5h-4.5zM709.8 589.2h4.5v4.5h-4.5zM717.5 537.4h4.5v4.5h-4.5zM709.7 519.4h4.5v4.5h-4.5zM705.9 512.0h4.5v4.5h-4.5zM717.4 535.2h4.5v4.5h-4.5zM715.0 549.2h4.5v4.5h-4.5zM718.2 569.2h4.5v4.5h-4.5zM708.5 581.6h4.5v4.5h-4.5zM715.0 545.3h4.5v4.5h-4.5zM709.4 582.7h4.5v4.5h-4.5zM716.0 549.3h4.5v4.5h-4.5zM714.3 568.5h4.5v4.5h-4.5zM707.6 584.7h4.5v4.5h-4.5zM712.9 522.1h4.5v4.5h-4.5zM716.4 540.7h4.5v4.5h-4.5zM721.0 551.8h4.5v4.5h-4.5zM709.5 527.0h4.5v4.5h-4.5zM710.2 512.9h4.5v4.5h-4.5zM713.5 576.6h4.5v4.5h-4.5zM719.7 547.5h4.5v4.5h-4.5zM711.8 504.7h4.5v4.5h-4.5zM700.8 510.8h4.5v4.5h-4.5zM710.7 503.7h4.5v4.5h-4.5zM731.0 510.2h4.5v4.5h-4.5zM723.6 507.2h4.5v4.5h-4.5zM710.1 507.0h4.5v4.5h-4.5zM727.8 511.8h4.5v4.5h-4.5zM734.6 507.3h4.5v4.5h-4.5zM708.9 509.3h4.5v4.5h-4.5zM719.8 504.3h4.5v4.5h-4.5zM731.1 507.1h4.5v4.5h-4.5zM703.3 505.3h4.5v4.5h-4.5zM724.1 505.6h4.5v4.5h-4.5zM709.2 507.7h4.5v4.5h-4.5zM710.4 507.3h4.5v4.5h-4.5zM720.1 502.1h4.5v4.5h-4.5zM736.6 547.8h4.5v4.5h-4.5zM739.1 583.4h4.5v4.5h-4.5zM732.7 569.0h4.5v4.5h-4.5zM752.1 558.2h4.5v4.5h-4.5zM732.9 559.4h4.5v4.5h-4.5zM748.1 512.9h4.5v4.5h-4.5zM750.8 541.3h4.5v4.5h-4.5zM739.3 520.3h4.5v4.5h-4.5zM744.5 576.8h4.5v4.5h-4.5zM757.7 557.3h4.5v4.5h-4.5zM745.2 538.0h4.5v4.5h-4.5zM750.3 517.8h4.5v4.5h-4.5zM744.5 581.5h4.5v4.5h-4.5zM740.2 563.5h4.5v4.5h-4.5zM745.1 568.0h4.5v4.5h-4.5zM738.5 527.0h4.5v4.5h-4.5zM744.4 521.3h4.5v4.5h-4.5zM732.8 528.6h4.5v4.5h-4.5zM731.4 538.4h4.5v4.5h-4.5zM731.6 523.5h4.5v4.5h-4.5zM746.3 558.9h4.5v4.5h-4.5zM754.9 529.0h4.5v4.5h-4.5zM752.7 566.8h4.5v4.5h-4.5zM745.8 548.7h4.5v4.5h-4.5zM739.1 533.4h4.5v4.5h-4.5zM738.7 576.6h4.5v4.5h-4.5zM730.1 543.3h4.5v4.5h-4.5zM750.0 530.0h4.5v4.5h-4.5zM743.3 506.3h4.5v4.5h-4.5zM741.3 512.7h4.5v4.5h-4.5zM734.8 518.9h4.5v4.5h-4.5zM747.5 586.0h4.5v4.5h-4.5zM748.4 554.6h4.5v4.5h-4.5zM756.3 547.3h4.5v4.5h-4.5zM755.7 537.4h4.5v4.5h-4.5zM751.8 580.2h4.5v4.5h-4.5zM750.4 525.3h4.5v4.5h-4.5zM750.2 535.9h4.5v4.5h-4.5zM737.7 541.6h4.5v4.5h-4.5zM743.3 555.0h4.5v4.5h-4.5zM730.4 563.3h4.5v4.5h-4.5zM750.4 573.2h4.5v4.5h-4.5zM752.9 552.0h4.5v4.5h-4.5zM757.4 542.4h4.5v4.5h-4.5zM756.0 563.5h4.5v4.5h-4.5zM729.1 552.2h4.5v4.5h-4.5zM737.5 556.1h4.5v4.5h-4.5zM746.0 533.3h4.5v4.5h-4.5zM734.6 512.5h4.5v4.5h-4.5zM731.5 548.1h4.5v4.5h-4.5zM738.7 568.7h4.5v4.5h-4.5zM733.4 577.7h4.5v4.5h-4.5zM740.4 588.2h4.5v4.5h-4.5zM728.6 532.3h4.5v4.5h-4.5zM728.4 557.0h4.5v4.5h-4.5zM739.0 508.6h4.5v4.5h-4.5zM741.0 545.3h4.5v4.5h-4.5zM745.4 543.6h4.5v4.5h-4.5zM744.2 526.7h4.5v4.5h-4.5zM756.1 524.2h4.5v4.5h-4.5zM755.4 573.1h4.5v4.5h-4.5zM749.1 563.4h4.5v4.5h-4.5zM751.4 547.4h4.5v4.5h-4.5zM757.6 552.6h4.5v4.5h-4.5zM734.8 573.3h4.5v4.5h-4.5zM748.6 508.1h4.5v4.5h-4.5zM777.0 558.9h4.5v4.5h-4.5zM771.0 553.8h4.5v4.5h-4.5zM773.5 539.9h4.5v4.5h-4.5zM778.4 545.2h4.5v4.5h-4.5zM781.6 551.2h4.5v4.5h-4.5zM776.0 566.0h4.5v4.5h-4.5zM769.6 556.8h4.5v4.5h-4.5zM769.6 537.8h4.5v4.5h-4.5zM778.3 534.2h4.5v4.5h-4.5zM782.7 562.1h4.5v4.5h-4.5zM775.8 571.5h4.5v4.5h-4.5zM768.5 563.6h4.5v4.5h-4.5zM766.1 545.0h4.5v4.5h-4.5zM770.8 530.5h4.5v4.5h-4.5zM778.4 528.5h4.5v4.5h-4.5zM784.2 543.4h4.5v4.5h-4.5zM787.1 565.7h4.5v4.5h-4.5zM789.0 536.0h4.5v4.5h-4.5zM780.1 514.1h4.5v4.5h-4.5zM786.2 523.9h4.5v4.5h-4.5zM773.5 582.6h4.5v4.5h-4.5zM786.4 557.8h4.5v4.5h-4.5zM779.1 583.2h4.5v4.5h-4.5zM762.9 572.0h4.5v4.5h-4.5zM784.4 572.3h4.5v4.5h-4.5zM791.0 553.7h4.5v4.5h-4.5zM780.8 518.5h4.5v4.5h-4.5zM769.7 577.9h4.5v4.5h-4.5zM776.0 510.6h4.5v4.5h-4.5zM787.9 548.1h4.5v4.5h-4.5zM760.4 567.1h4.5v4.5h-4.5zM781.0 525.0h4.5v4.5h-4.5zM768.2 584.0h4.5v4.5h-4.5zM779.8 577.1h4.5v4.5h-4.5zM774.0 520.3h4.5v4.5h-4.5zM788.7 541.8h4.5v4.5h-4.5zM784.9 532.1h4.5v4.5h-4.5zM788.3 570.3h4.5v4.5h-4.5zM784.6 578.4h4.5v4.5h-4.5zM788.9 529.7h4.5v4.5h-4.5zM768.5 573.2h4.5v4.5h-4.5zM762.3 576.3h4.5v4.5h-4.5zM789.6 561.1h4.5v4.5h-4.5zM770.3 513.8h4.5v4.5h-4.5zM764.6 581.4h4.5v4.5h-4.5zM774.9 587.5h4.5v4.5h-4.5zM785.0 561.9h4.5v4.5h-4.5zM785.1 518.9h4.5v4.5h-4.5zM774.7 514.8h4.5v4.5h-4.5zM774.7 576.8h4.5v4.5h-4.5zM725.5 583.8h4.5v4.5h-4.5zM720.0 595.0h4.5v4.5h-4.5zM699.4 603.8h4.5v4.5h-4.5zM733.6 599.7h4.5v4.5h-4.5zM759.1 586.3h4.5v4.5h-4.5zM667.7 610.0h4.5v4.5h-4.5zM681.7 610.9h4.5v4.5h-4.5zM665.8 600.6h4.5v4.5h-4.5zM671.4 600.6h4.5v4.5h-4.5zM680.9 502.1h4.5v4.5h-4.5zM659.6 495.3h4.5v4.5h-4.5zM672.1 498.2h4.5v4.5h-4.5zM680.9 502.4h4.5v4.5h-4.5zM687.8 508.4h4.5v4.5h-4.5zM692.0 504.7h4.5v4.5h-4.5zM663.2 493.9h4.5v4.5h-4.5zM670.8 502.3h4.5v4.5h-4.5zM666.0 496.9h4.5v4.5h-4.5zM683.4 504.3h4.5v4.5h-4.5zM665.6 493.3h4.5v4.5h-4.5zM688.5 506.7h4.5v4.5h-4.5zM681.3 505.6h4.5v4.5h-4.5zM666.7 495.0h4.5v4.5h-4.5zM662.7 496.0h4.5v4.5h-4.5zM684.1 507.3h4.5v4.5h-4.5zM678.9 505.7h4.5v4.5h-4.5zM665.0 499.1h4.5v4.5h-4.5zM656.1 495.8h4.5v4.5h-4.5zM696.6 507.6h4.5v4.5h-4.5zM683.3 505.0h4.5v4.5h-4.5zM686.6 506.6h4.5v4.5h-4.5zM680.8 503.2h4.5v4.5h-4.5zM690.3 508.1h4.5v4.5h-4.5zM666.8 496.5h4.5v4.5h-4.5zM695.6 510.9h4.5v4.5h-4.5zM673.4 499.9h4.5v4.5h-4.5zM661.4 491.5h4.5v4.5h-4.5zM687.7 507.9h4.5v4.5h-4.5zM654.6 493.9h4.5v4.5h-4.5zM702.5 495.8h4.5v4.5h-4.5zM674.5 492.1h4.5v4.5h-4.5zM666.9 492.5h4.5v4.5h-4.5zM696.7 495.2h4.5v4.5h-4.5zM716.7 494.4h4.5v4.5h-4.5zM681.8 498.5h4.5v4.5h-4.5zM663.7 499.0h4.5v4.5h-4.5zM690.2 491.8h4.5v4.5h-4.5zM695.6 499.6h4.5v4.5h-4.5zM707.6 500.7h4.5v4.5h-4.5zM705.1 490.7h4.5v4.5h-4.5zM712.6 500.7h4.5v4.5h-4.5zM672.8 499.0h4.5v4.5h-4.5zM688.9 497.9h4.5v4.5h-4.5zM702.3 330.7h4.5v4.5h-4.5zM734.3 339.0h4.5v4.5h-4.5zM690.2 326.8h4.5v4.5h-4.5zM700.9 327.8h4.5v4.5h-4.5zM719.7 332.5h4.5v4.5h-4.5zM738.0 338.4h4.5v4.5h-4.5zM719.7 332.3h4.5v4.5h-4.5zM711.8 329.9h4.5v4.5h-4.5zM725.7 334.7h4.5v4.5h-4.5zM739.1 337.6h4.5v4.5h-4.5zM735.8 339.5h4.5v4.5h-4.5zM727.5 336.4h4.5v4.5h-4.5zM724.7 337.5h4.5v4.5h-4.5zM694.8 332.4h4.5v4.5h-4.5zM695.9 332.0h4.5v4.5h-4.5zM707.0 334.9h4.5v4.5h-4.5zM718.9 337.0h4.5v4.5h-4.5zM729.1 334.1h4.5v4.5h-4.5zM731.4 336.1h4.5v4.5h-4.5zM701.5 331.1h4.5v4.5h-4.5zM695.4 329.9h4.5v4.5h-4.5zM697.5 328.9h4.5v4.5h-4.5zM731.2 339.6h4.5v4.5h-4.5zM714.5 336.8h4.5v4.5h-4.5zM714.7 332.2h4.5v4.5h-4.5zM690.7 329.5h4.5v4.5h-4.5zM716.5 333.9h4.5v4.5h-4.5zM746.4 339.0h4.5v4.5h-4.5zM730.4 335.3h4.5v4.5h-4.5zM744.4 338.6h4.5v4.5h-4.5zM737.2 338.7h4.5v4.5h-4.5zM735.6 338.0h4.5v4.5h-4.5zM741.5 335.8h4.5v4.5h-4.5zM730.7 334.2h4.5v4.5h-4.5zM823.8 307.4h4.5v4.5h-4.5zM819.8 311.1h4.5v4.5h-4.5zM838.6 309.0h4.5v4.5h-4.5zM835.7 311.1h4.5v4.5h-4.5zM826.1 307.2h4.5v4.5h-4.5zM838.7 311.0h4.5v4.5h-4.5zM830.4 310.7h4.5v4.5h-4.5zM823.9 306.0h4.5v4.5h-4.5zM821.1 310.6h4.5v4.5h-4.5zM837.1 313.2h4.5v4.5h-4.5zM819.4 309.7h4.5v4.5h-4.5zM832.9 311.4h4.5v4.5h-4.5zM823.0 307.9h4.5v4.5h-4.5zM816.4 309.7h4.5v4.5h-4.5z" fill="#4279ee"/>
</svg>
<div class="a" style="left:0;top:669px;width:1588px;height:1px;background:#15131f"></div>
</body></html>
